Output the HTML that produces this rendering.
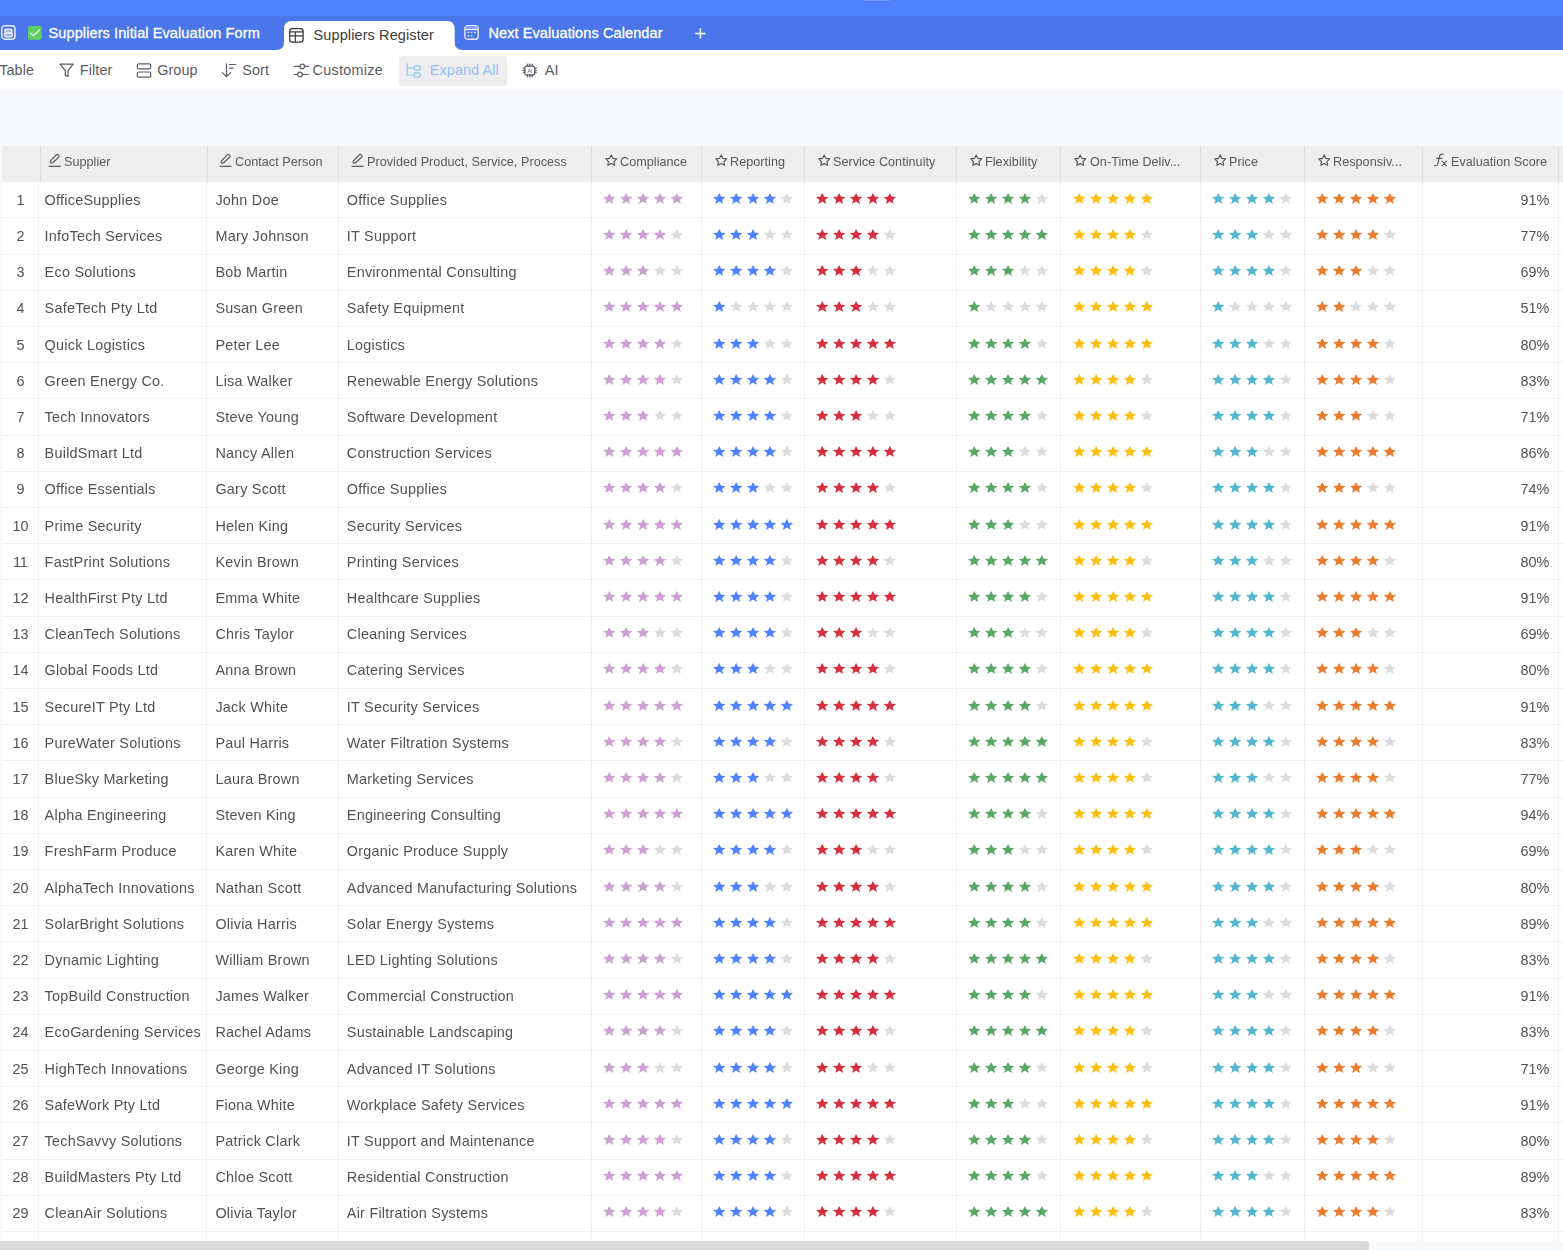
<!DOCTYPE html>
<html lang="en"><head><meta charset="utf-8"><title>Suppliers Register</title>
<style>
html,body{margin:0;padding:0}
body{width:1563px;height:1250px;overflow:hidden;position:relative;background:#f7f8fb;font-family:"Liberation Sans",sans-serif;color:#525252}
.abs,.abs *{position:absolute}
#top{left:0;top:0;width:1563px;height:16px;background:#4f82fc;position:absolute}
#tabs{left:0;top:15.8px;width:1563px;height:34px;background:#4a76e9;position:absolute}
.tabt{position:absolute;color:#fff;font-size:14.5px;letter-spacing:.1px;white-space:nowrap;line-height:18px;-webkit-text-stroke:.3px #fff}
#toolbar{position:absolute;left:0;top:49.7px;width:1563px;height:41.6px;background:#fff;border-bottom:1px solid #ececec}
.tb{position:absolute;font-size:14.4px;letter-spacing:.1px;color:#5b5b5f;white-space:nowrap;line-height:18px;top:61.4px}
#thead{position:absolute;left:2px;top:145.6px;width:1561px;height:36.1px;background:#eeeeee}
.hb{position:absolute;top:145.6px;width:1px;height:36.1px;background:#dedede}
.ht{will-change:transform;position:absolute;top:153.9px;font-size:12.6px;letter-spacing:.05px;color:#595959;white-space:nowrap;line-height:16px}
.hi{position:absolute;overflow:visible}
#tbody{position:absolute;left:2px;top:181.7px;width:1561px;height:1059px;background:#fff}
.vb{position:absolute;top:181.7px;width:1px;height:1059px;background:#f0f0f0}
.rb{position:absolute;left:2px;width:1561px;height:1px;background:#f0f0f0}
.r{will-change:transform;position:absolute;left:0;width:1563px;height:36.2px;font-size:14.4px;letter-spacing:.25px;line-height:18px;white-space:nowrap}
.r span{position:absolute;top:9.3px}
.n{left:2px;width:36.8px;text-align:center;letter-spacing:0}
.c1{left:44.6px}.c2{left:215.4px}.c3{left:346.8px}
.sc{right:13.6px;letter-spacing:0}
.r svg{position:absolute;top:11.3px;overflow:visible}
#sbt{position:absolute;left:0;top:1240.6px;width:1563px;height:10px;background:#f9fafc}
#sb{position:absolute;left:-10px;top:1240.6px;width:1379.2px;height:16px;background:#d9d9d9;border-radius:3.5px}
</style></head><body>

<div id="top"></div><div id="tabs"></div>
<svg class="hi" style="left:275.5px;top:20.9px" width="187" height="29" viewBox="0 0 187 29"><path d="M0 29 Q8 29 8 21 L8 8 Q8 0 16 0 L170.7 0 Q178.7 0 178.7 8 L178.7 21 Q178.7 29 186.7 29 Z" fill="#fff"/></svg>
<svg class="hi" style="left:0;top:24px" width="18" height="18" viewBox="0 0 18 18"><rect x="1.8" y="1.8" width="13.2" height="13.4" rx="3" fill="none" stroke="#e6ebfb" stroke-width="1.5"/><rect x="4.7" y="5.1" width="7.4" height="3.6" rx="1.7" fill="#a9bdf4" stroke="#eef2fd" stroke-width="1.2"/><rect x="4.2" y="8.9" width="8.4" height="3.9" rx="1.8" fill="#a9bdf4" stroke="#eef2fd" stroke-width="1.2"/></svg>
<svg class="hi" style="left:28px;top:25.6px" width="14" height="14" viewBox="0 0 14 14"><rect width="13.9" height="13.8" rx="2" fill="#5dcf62"/><path d="M2.6 7.3 L5.4 9.8 L11.4 4" fill="none" stroke="#e9f9ea" stroke-width="1.5" stroke-linecap="round" stroke-linejoin="round"/></svg>
<div class="tabt" style="left:48.6px;top:23.7px">Suppliers Initial Evaluation Form</div>
<svg class="hi" style="left:289px;top:27.8px" width="15" height="15" viewBox="0 0 15 15"><rect x="0.7" y="0.7" width="13.4" height="13.4" rx="2.6" fill="none" stroke="#3a3a3a" stroke-width="1.25"/><path d="M0.7 3.9 H14.1 M0.7 7.8 H14.1 M6.3 3.9 V14.1" fill="none" stroke="#3a3a3a" stroke-width="1.2"/></svg>
<div class="tabt" style="left:313.6px;top:25.7px;color:#3c3c3c;-webkit-text-stroke:0">Suppliers Register</div>
<svg class="hi" style="left:464px;top:25px" width="15" height="15" viewBox="0 0 15 15"><rect x="0.8" y="0.8" width="13.4" height="13.4" rx="2.8" fill="none" stroke="#e6ebfb" stroke-width="1.4"/><rect x="1.5" y="1.5" width="12" height="2.6" fill="#7f9ff0"/><path d="M0.8 4.5 H14.2" stroke="#e6ebfb" stroke-width="1.3"/><path d="M3.6 7.6 h1.6 M6.8 7.6 h1.6 M10 7.6 h1.6 M3.6 10.7 h1.6 M6.8 10.7 h1.6" stroke="#e6ebfb" stroke-width="1.5"/></svg>
<div class="tabt" style="left:488.4px;top:23.7px">Next Evaluations Calendar</div>
<svg class="hi" style="left:695.4px;top:28px" width="11" height="11" viewBox="0 0 11 11"><path d="M5.4 0.3 V10.5 M0.3 5.4 H10.5" stroke="#fff" stroke-width="1.5"/></svg>
<div style="position:absolute;left:864px;top:0;width:25px;height:1px;background:#86a9fd;opacity:.7"></div>
<div id="toolbar"></div>
<div class="tb" style="left:-0.8px">Table</div>
<svg class="hi" style="left:59px;top:63px" width="16" height="15" viewBox="0 0 16 15"><path d="M1 1.2 H14.2 L9 7.6 V13.4 L6.3 12.4 V7.6 Z" fill="none" stroke="#5b5b66" stroke-width="1.2" stroke-linejoin="round"/></svg>
<div class="tb" style="left:79.8px">Filter</div>
<svg class="hi" style="left:136px;top:63px" width="16" height="16" viewBox="0 0 16 16"><rect x="1.3" y="0.9" width="13.4" height="5" rx="1.6" fill="none" stroke="#5b5b66" stroke-width="1.2"/><rect x="1.3" y="9" width="13.4" height="5.2" rx="1.6" fill="none" stroke="#5b5b66" stroke-width="1.2"/></svg>
<div class="tb" style="left:157.2px">Group</div>
<svg class="hi" style="left:221px;top:63px" width="16" height="15" viewBox="0 0 16 15"><path d="M5.5 0.8 V13.4 M1.4 9.6 L5.5 13.6 L9.6 9.6 M8.4 1.5 H14.6 M8.4 5.2 H12" fill="none" stroke="#5b5b66" stroke-width="1.2" stroke-linecap="round" stroke-linejoin="round"/></svg>
<div class="tb" style="left:242.2px">Sort</div>
<svg class="hi" style="left:293px;top:62px" width="17" height="17" viewBox="0 0 17 17"><path d="M1.2 4.4 H6.9 M11.6 4.4 H15.4 M1.2 12.5 H4.6 M9.4 12.5 H15.4" stroke="#5b5b66" stroke-width="1.2" stroke-linecap="round"/><circle cx="9.3" cy="4.4" r="2.3" fill="none" stroke="#5b5b66" stroke-width="1.2"/><circle cx="7" cy="12.5" r="2.3" fill="none" stroke="#5b5b66" stroke-width="1.2"/></svg>
<div class="tb" style="left:312.6px;letter-spacing:.27px">Customize</div>
<div style="position:absolute;left:399.2px;top:56.4px;width:107.8px;height:29.6px;background:#eeeeee;border-radius:3.5px"></div>
<svg class="hi" style="left:406px;top:62px" width="16" height="17" viewBox="0 0 16 17"><path d="M1.2 1.2 V13 H8 M1.2 6 H8" fill="none" stroke="#93c0fb" stroke-width="1.2"/><rect x="8.2" y="3.8" width="6" height="4.3" rx="1.2" fill="none" stroke="#93c0fb" stroke-width="1.2"/><rect x="8.2" y="10.8" width="6" height="4.4" rx="1.2" fill="none" stroke="#93c0fb" stroke-width="1.2"/></svg>
<div class="tb" style="left:429.8px;color:#93c0fb">Expand All</div>
<svg class="hi" style="left:522px;top:62.6px" width="16" height="16" viewBox="0 0 16 16"><path d="M5.3 0.8 V3 M7.8 0.6 V3 M10.3 0.8 V3 M5.3 12 V14.3 M7.8 12 V14.5 M10.3 12 V14.3 M0.8 5.2 H3 M0.6 7.5 H3 M0.8 9.8 H3 M12.6 5.2 H14.8 M12.6 7.5 H15 M12.6 9.8 H14.8" stroke="#5b5b66" stroke-width="1.1"/><circle cx="7.8" cy="7.5" r="5.6" fill="none" stroke="#5b5b66" stroke-width=".9" opacity=".55"/><rect x="2.9" y="3.1" width="9.8" height="8.8" rx="2" fill="#fff" stroke="#5b5b66" stroke-width="1.2"/><text x="7.8" y="9.6" font-family="Liberation Sans, sans-serif" font-size="5.6" text-anchor="middle" fill="#5b5b66" style="position:static">AI</text></svg>
<div class="tb" style="left:544.8px">AI</div>
<div id="thead"></div>
<div class="hb" style="left:39.7px"></div>
<div class="hb" style="left:206.8px"></div>
<div class="hb" style="left:337.8px"></div>
<div class="hb" style="left:590.9px"></div>
<div class="hb" style="left:700.9px"></div>
<div class="hb" style="left:804.1px"></div>
<div class="hb" style="left:956.1px"></div>
<div class="hb" style="left:1060.2px"></div>
<div class="hb" style="left:1200.0px"></div>
<div class="hb" style="left:1304.0px"></div>
<div class="hb" style="left:1422.0px"></div>
<div class="hb" style="left:1558.0px"></div>
<svg class="hi" style="left:48.4px;top:153px" width="14" height="15" viewBox="0 0 14 15"><path d="M0.6 13.3 H12.6" stroke="#555" stroke-width="1.2"/><path d="M2.3 8.2 L8.4 1.7 Q9.1 1 9.9 1.7 L10.8 2.6 Q11.5 3.4 10.8 4.1 L4.6 9.8 Q3.6 10.4 2.6 9.9 Q1.7 9.2 2.3 8.2 Z" fill="none" stroke="#555" stroke-width="1.2" stroke-linejoin="round"/></svg>
<div class="ht" style="left:64.4px">Supplier</div>
<svg class="hi" style="left:218.7px;top:153px" width="14" height="15" viewBox="0 0 14 15"><path d="M0.6 13.3 H12.6" stroke="#555" stroke-width="1.2"/><path d="M2.3 8.2 L8.4 1.7 Q9.1 1 9.9 1.7 L10.8 2.6 Q11.5 3.4 10.8 4.1 L4.6 9.8 Q3.6 10.4 2.6 9.9 Q1.7 9.2 2.3 8.2 Z" fill="none" stroke="#555" stroke-width="1.2" stroke-linejoin="round"/></svg>
<div class="ht" style="left:235.2px">Contact Person</div>
<svg class="hi" style="left:351.2px;top:153px" width="14" height="15" viewBox="0 0 14 15"><path d="M0.6 13.3 H12.6" stroke="#555" stroke-width="1.2"/><path d="M2.3 8.2 L8.4 1.7 Q9.1 1 9.9 1.7 L10.8 2.6 Q11.5 3.4 10.8 4.1 L4.6 9.8 Q3.6 10.4 2.6 9.9 Q1.7 9.2 2.3 8.2 Z" fill="none" stroke="#555" stroke-width="1.2" stroke-linejoin="round"/></svg>
<div class="ht" style="left:366.8px">Provided Product, Service, Process</div>
<svg class="hi" style="left:604.7px;top:154.1px" width="13.2" height="13.2" viewBox="0 0 14 14"><path d="M6.6 1 L8.3 4.6 L12.4 5.2 L9.5 8 L10.2 12 L6.6 10.1 L3 12 L3.7 8 L0.8 5.2 L4.9 4.6 Z" fill="none" stroke="#555" stroke-width="1.2" stroke-linejoin="round"/></svg>
<div class="ht" style="left:620.2px">Compliance</div>
<svg class="hi" style="left:714.7px;top:154.1px" width="13.2" height="13.2" viewBox="0 0 14 14"><path d="M6.6 1 L8.3 4.6 L12.4 5.2 L9.5 8 L10.2 12 L6.6 10.1 L3 12 L3.7 8 L0.8 5.2 L4.9 4.6 Z" fill="none" stroke="#555" stroke-width="1.2" stroke-linejoin="round"/></svg>
<div class="ht" style="left:730.2px">Reporting</div>
<svg class="hi" style="left:817.9px;top:154.1px" width="13.2" height="13.2" viewBox="0 0 14 14"><path d="M6.6 1 L8.3 4.6 L12.4 5.2 L9.5 8 L10.2 12 L6.6 10.1 L3 12 L3.7 8 L0.8 5.2 L4.9 4.6 Z" fill="none" stroke="#555" stroke-width="1.2" stroke-linejoin="round"/></svg>
<div class="ht" style="left:833.4px">Service Continuity</div>
<svg class="hi" style="left:969.9px;top:154.1px" width="13.2" height="13.2" viewBox="0 0 14 14"><path d="M6.6 1 L8.3 4.6 L12.4 5.2 L9.5 8 L10.2 12 L6.6 10.1 L3 12 L3.7 8 L0.8 5.2 L4.9 4.6 Z" fill="none" stroke="#555" stroke-width="1.2" stroke-linejoin="round"/></svg>
<div class="ht" style="left:985.4px">Flexibility</div>
<svg class="hi" style="left:1074.0px;top:154.1px" width="13.2" height="13.2" viewBox="0 0 14 14"><path d="M6.6 1 L8.3 4.6 L12.4 5.2 L9.5 8 L10.2 12 L6.6 10.1 L3 12 L3.7 8 L0.8 5.2 L4.9 4.6 Z" fill="none" stroke="#555" stroke-width="1.2" stroke-linejoin="round"/></svg>
<div class="ht" style="left:1089.5px">On-Time Deliv...</div>
<svg class="hi" style="left:1213.8px;top:154.1px" width="13.2" height="13.2" viewBox="0 0 14 14"><path d="M6.6 1 L8.3 4.6 L12.4 5.2 L9.5 8 L10.2 12 L6.6 10.1 L3 12 L3.7 8 L0.8 5.2 L4.9 4.6 Z" fill="none" stroke="#555" stroke-width="1.2" stroke-linejoin="round"/></svg>
<div class="ht" style="left:1229.3px">Price</div>
<svg class="hi" style="left:1317.8px;top:154.1px" width="13.2" height="13.2" viewBox="0 0 14 14"><path d="M6.6 1 L8.3 4.6 L12.4 5.2 L9.5 8 L10.2 12 L6.6 10.1 L3 12 L3.7 8 L0.8 5.2 L4.9 4.6 Z" fill="none" stroke="#555" stroke-width="1.2" stroke-linejoin="round"/></svg>
<div class="ht" style="left:1333.3px">Responsiv...</div>
<svg class="hi" style="left:1434.1px;top:153px" width="15" height="15" viewBox="0 0 15 15"><path d="M0.6 12.6 Q3.2 13.4 4 10.2 L5.6 3 Q6.4 0.4 9.4 1.2 M2.6 5.4 H8" fill="none" stroke="#555" stroke-width="1.15" stroke-linecap="round"/><path d="M8.2 8.2 L12.4 12.8 M12.6 8.2 L8 12.8" stroke="#555" stroke-width="1.05" stroke-linecap="round"/></svg>
<div class="ht" style="left:1450.7px">Evaluation Score</div>
<div id="tbody"></div>
<div class="vb" style="left:38.3px"></div>
<div class="vb" style="left:205.7px"></div>
<div class="vb" style="left:337.5px"></div>
<div class="vb" style="left:590.9px"></div>
<div class="vb" style="left:700.9px"></div>
<div class="vb" style="left:804.1px"></div>
<div class="vb" style="left:956.1px"></div>
<div class="vb" style="left:1060.2px"></div>
<div class="vb" style="left:1200.0px"></div>
<div class="vb" style="left:1304.0px"></div>
<div class="vb" style="left:1422.0px"></div>
<div class="vb" style="left:1558.0px"></div>
<div class="rb" style="top:217.3px"></div>
<div class="rb" style="top:253.5px"></div>
<div class="rb" style="top:289.7px"></div>
<div class="rb" style="top:325.9px"></div>
<div class="rb" style="top:362.1px"></div>
<div class="rb" style="top:398.3px"></div>
<div class="rb" style="top:434.5px"></div>
<div class="rb" style="top:470.7px"></div>
<div class="rb" style="top:506.9px"></div>
<div class="rb" style="top:543.1px"></div>
<div class="rb" style="top:579.3px"></div>
<div class="rb" style="top:615.5px"></div>
<div class="rb" style="top:651.7px"></div>
<div class="rb" style="top:687.9px"></div>
<div class="rb" style="top:724.1px"></div>
<div class="rb" style="top:760.3px"></div>
<div class="rb" style="top:796.5px"></div>
<div class="rb" style="top:832.7px"></div>
<div class="rb" style="top:868.9px"></div>
<div class="rb" style="top:905.1px"></div>
<div class="rb" style="top:941.3px"></div>
<div class="rb" style="top:977.5px"></div>
<div class="rb" style="top:1013.7px"></div>
<div class="rb" style="top:1049.9px"></div>
<div class="rb" style="top:1086.1px"></div>
<div class="rb" style="top:1122.3px"></div>
<div class="rb" style="top:1158.5px"></div>
<div class="rb" style="top:1194.7px"></div>
<div class="rb" style="top:1230.9px"></div>
<div class="r" style="top:181.7px"><span class="n">1</span><span class="c1">OfficeSupplies</span><span class="c2">John Doe</span><span class="c3">Office Supplies</span><svg style="left:603.1px" width="82" height="12" viewBox="0 0 82 12"><path fill="#cd9fd4" d="M6.25 0l1.95 3.8 4.3.3-3.4 2.8 1.1 4.1-3.95-2.4-3.95 2.4 1.1-4.1-3.4-2.8 4.3-.3zM23.15 0l1.95 3.8 4.3.3-3.4 2.8 1.1 4.1-3.95-2.4-3.95 2.4 1.1-4.1-3.4-2.8 4.3-.3zM40.05 0l1.95 3.8 4.3.3-3.4 2.8 1.1 4.1-3.95-2.4-3.95 2.4 1.1-4.1-3.4-2.8 4.3-.3zM56.95 0l1.95 3.8 4.3.3-3.4 2.8 1.1 4.1-3.95-2.4-3.95 2.4 1.1-4.1-3.4-2.8 4.3-.3zM73.85 0l1.95 3.8 4.3.3-3.4 2.8 1.1 4.1-3.95-2.4-3.95 2.4 1.1-4.1-3.4-2.8 4.3-.3z"/></svg><svg style="left:713.1px" width="82" height="12" viewBox="0 0 82 12"><path fill="#4f82fc" d="M6.25 0l1.95 3.8 4.3.3-3.4 2.8 1.1 4.1-3.95-2.4-3.95 2.4 1.1-4.1-3.4-2.8 4.3-.3zM23.15 0l1.95 3.8 4.3.3-3.4 2.8 1.1 4.1-3.95-2.4-3.95 2.4 1.1-4.1-3.4-2.8 4.3-.3zM40.05 0l1.95 3.8 4.3.3-3.4 2.8 1.1 4.1-3.95-2.4-3.95 2.4 1.1-4.1-3.4-2.8 4.3-.3zM56.95 0l1.95 3.8 4.3.3-3.4 2.8 1.1 4.1-3.95-2.4-3.95 2.4 1.1-4.1-3.4-2.8 4.3-.3z"/><path fill="#dcdcdc" d="M73.85 0l1.95 3.8 4.3.3-3.4 2.8 1.1 4.1-3.95-2.4-3.95 2.4 1.1-4.1-3.4-2.8 4.3-.3z"/></svg><svg style="left:816.4px" width="82" height="12" viewBox="0 0 82 12"><path fill="#d53041" d="M6.25 0l1.95 3.8 4.3.3-3.4 2.8 1.1 4.1-3.95-2.4-3.95 2.4 1.1-4.1-3.4-2.8 4.3-.3zM23.15 0l1.95 3.8 4.3.3-3.4 2.8 1.1 4.1-3.95-2.4-3.95 2.4 1.1-4.1-3.4-2.8 4.3-.3zM40.05 0l1.95 3.8 4.3.3-3.4 2.8 1.1 4.1-3.95-2.4-3.95 2.4 1.1-4.1-3.4-2.8 4.3-.3zM56.95 0l1.95 3.8 4.3.3-3.4 2.8 1.1 4.1-3.95-2.4-3.95 2.4 1.1-4.1-3.4-2.8 4.3-.3zM73.85 0l1.95 3.8 4.3.3-3.4 2.8 1.1 4.1-3.95-2.4-3.95 2.4 1.1-4.1-3.4-2.8 4.3-.3z"/></svg><svg style="left:968.4px" width="82" height="12" viewBox="0 0 82 12"><path fill="#59a765" d="M6.25 0l1.95 3.8 4.3.3-3.4 2.8 1.1 4.1-3.95-2.4-3.95 2.4 1.1-4.1-3.4-2.8 4.3-.3zM23.15 0l1.95 3.8 4.3.3-3.4 2.8 1.1 4.1-3.95-2.4-3.95 2.4 1.1-4.1-3.4-2.8 4.3-.3zM40.05 0l1.95 3.8 4.3.3-3.4 2.8 1.1 4.1-3.95-2.4-3.95 2.4 1.1-4.1-3.4-2.8 4.3-.3zM56.95 0l1.95 3.8 4.3.3-3.4 2.8 1.1 4.1-3.95-2.4-3.95 2.4 1.1-4.1-3.4-2.8 4.3-.3z"/><path fill="#dcdcdc" d="M73.85 0l1.95 3.8 4.3.3-3.4 2.8 1.1 4.1-3.95-2.4-3.95 2.4 1.1-4.1-3.4-2.8 4.3-.3z"/></svg><svg style="left:1072.5px" width="82" height="12" viewBox="0 0 82 12"><path fill="#fbbf12" d="M6.25 0l1.95 3.8 4.3.3-3.4 2.8 1.1 4.1-3.95-2.4-3.95 2.4 1.1-4.1-3.4-2.8 4.3-.3zM23.15 0l1.95 3.8 4.3.3-3.4 2.8 1.1 4.1-3.95-2.4-3.95 2.4 1.1-4.1-3.4-2.8 4.3-.3zM40.05 0l1.95 3.8 4.3.3-3.4 2.8 1.1 4.1-3.95-2.4-3.95 2.4 1.1-4.1-3.4-2.8 4.3-.3zM56.95 0l1.95 3.8 4.3.3-3.4 2.8 1.1 4.1-3.95-2.4-3.95 2.4 1.1-4.1-3.4-2.8 4.3-.3zM73.85 0l1.95 3.8 4.3.3-3.4 2.8 1.1 4.1-3.95-2.4-3.95 2.4 1.1-4.1-3.4-2.8 4.3-.3z"/></svg><svg style="left:1211.5px" width="82" height="12" viewBox="0 0 82 12"><path fill="#53b7cf" d="M6.25 0l1.95 3.8 4.3.3-3.4 2.8 1.1 4.1-3.95-2.4-3.95 2.4 1.1-4.1-3.4-2.8 4.3-.3zM23.15 0l1.95 3.8 4.3.3-3.4 2.8 1.1 4.1-3.95-2.4-3.95 2.4 1.1-4.1-3.4-2.8 4.3-.3zM40.05 0l1.95 3.8 4.3.3-3.4 2.8 1.1 4.1-3.95-2.4-3.95 2.4 1.1-4.1-3.4-2.8 4.3-.3zM56.95 0l1.95 3.8 4.3.3-3.4 2.8 1.1 4.1-3.95-2.4-3.95 2.4 1.1-4.1-3.4-2.8 4.3-.3z"/><path fill="#dcdcdc" d="M73.85 0l1.95 3.8 4.3.3-3.4 2.8 1.1 4.1-3.95-2.4-3.95 2.4 1.1-4.1-3.4-2.8 4.3-.3z"/></svg><svg style="left:1316.2px" width="82" height="12" viewBox="0 0 82 12"><path fill="#ea7c30" d="M6.25 0l1.95 3.8 4.3.3-3.4 2.8 1.1 4.1-3.95-2.4-3.95 2.4 1.1-4.1-3.4-2.8 4.3-.3zM23.15 0l1.95 3.8 4.3.3-3.4 2.8 1.1 4.1-3.95-2.4-3.95 2.4 1.1-4.1-3.4-2.8 4.3-.3zM40.05 0l1.95 3.8 4.3.3-3.4 2.8 1.1 4.1-3.95-2.4-3.95 2.4 1.1-4.1-3.4-2.8 4.3-.3zM56.95 0l1.95 3.8 4.3.3-3.4 2.8 1.1 4.1-3.95-2.4-3.95 2.4 1.1-4.1-3.4-2.8 4.3-.3zM73.85 0l1.95 3.8 4.3.3-3.4 2.8 1.1 4.1-3.95-2.4-3.95 2.4 1.1-4.1-3.4-2.8 4.3-.3z"/></svg><span class="sc" style="right:13.8px">91%</span></div>
<div class="r" style="top:217.9px"><span class="n">2</span><span class="c1">InfoTech Services</span><span class="c2">Mary Johnson</span><span class="c3">IT Support</span><svg style="left:603.1px" width="82" height="12" viewBox="0 0 82 12"><path fill="#cd9fd4" d="M6.25 0l1.95 3.8 4.3.3-3.4 2.8 1.1 4.1-3.95-2.4-3.95 2.4 1.1-4.1-3.4-2.8 4.3-.3zM23.15 0l1.95 3.8 4.3.3-3.4 2.8 1.1 4.1-3.95-2.4-3.95 2.4 1.1-4.1-3.4-2.8 4.3-.3zM40.05 0l1.95 3.8 4.3.3-3.4 2.8 1.1 4.1-3.95-2.4-3.95 2.4 1.1-4.1-3.4-2.8 4.3-.3zM56.95 0l1.95 3.8 4.3.3-3.4 2.8 1.1 4.1-3.95-2.4-3.95 2.4 1.1-4.1-3.4-2.8 4.3-.3z"/><path fill="#dcdcdc" d="M73.85 0l1.95 3.8 4.3.3-3.4 2.8 1.1 4.1-3.95-2.4-3.95 2.4 1.1-4.1-3.4-2.8 4.3-.3z"/></svg><svg style="left:713.1px" width="82" height="12" viewBox="0 0 82 12"><path fill="#4f82fc" d="M6.25 0l1.95 3.8 4.3.3-3.4 2.8 1.1 4.1-3.95-2.4-3.95 2.4 1.1-4.1-3.4-2.8 4.3-.3zM23.15 0l1.95 3.8 4.3.3-3.4 2.8 1.1 4.1-3.95-2.4-3.95 2.4 1.1-4.1-3.4-2.8 4.3-.3zM40.05 0l1.95 3.8 4.3.3-3.4 2.8 1.1 4.1-3.95-2.4-3.95 2.4 1.1-4.1-3.4-2.8 4.3-.3z"/><path fill="#dcdcdc" d="M56.95 0l1.95 3.8 4.3.3-3.4 2.8 1.1 4.1-3.95-2.4-3.95 2.4 1.1-4.1-3.4-2.8 4.3-.3zM73.85 0l1.95 3.8 4.3.3-3.4 2.8 1.1 4.1-3.95-2.4-3.95 2.4 1.1-4.1-3.4-2.8 4.3-.3z"/></svg><svg style="left:816.4px" width="82" height="12" viewBox="0 0 82 12"><path fill="#d53041" d="M6.25 0l1.95 3.8 4.3.3-3.4 2.8 1.1 4.1-3.95-2.4-3.95 2.4 1.1-4.1-3.4-2.8 4.3-.3zM23.15 0l1.95 3.8 4.3.3-3.4 2.8 1.1 4.1-3.95-2.4-3.95 2.4 1.1-4.1-3.4-2.8 4.3-.3zM40.05 0l1.95 3.8 4.3.3-3.4 2.8 1.1 4.1-3.95-2.4-3.95 2.4 1.1-4.1-3.4-2.8 4.3-.3zM56.95 0l1.95 3.8 4.3.3-3.4 2.8 1.1 4.1-3.95-2.4-3.95 2.4 1.1-4.1-3.4-2.8 4.3-.3z"/><path fill="#dcdcdc" d="M73.85 0l1.95 3.8 4.3.3-3.4 2.8 1.1 4.1-3.95-2.4-3.95 2.4 1.1-4.1-3.4-2.8 4.3-.3z"/></svg><svg style="left:968.4px" width="82" height="12" viewBox="0 0 82 12"><path fill="#59a765" d="M6.25 0l1.95 3.8 4.3.3-3.4 2.8 1.1 4.1-3.95-2.4-3.95 2.4 1.1-4.1-3.4-2.8 4.3-.3zM23.15 0l1.95 3.8 4.3.3-3.4 2.8 1.1 4.1-3.95-2.4-3.95 2.4 1.1-4.1-3.4-2.8 4.3-.3zM40.05 0l1.95 3.8 4.3.3-3.4 2.8 1.1 4.1-3.95-2.4-3.95 2.4 1.1-4.1-3.4-2.8 4.3-.3zM56.95 0l1.95 3.8 4.3.3-3.4 2.8 1.1 4.1-3.95-2.4-3.95 2.4 1.1-4.1-3.4-2.8 4.3-.3zM73.85 0l1.95 3.8 4.3.3-3.4 2.8 1.1 4.1-3.95-2.4-3.95 2.4 1.1-4.1-3.4-2.8 4.3-.3z"/></svg><svg style="left:1072.5px" width="82" height="12" viewBox="0 0 82 12"><path fill="#fbbf12" d="M6.25 0l1.95 3.8 4.3.3-3.4 2.8 1.1 4.1-3.95-2.4-3.95 2.4 1.1-4.1-3.4-2.8 4.3-.3zM23.15 0l1.95 3.8 4.3.3-3.4 2.8 1.1 4.1-3.95-2.4-3.95 2.4 1.1-4.1-3.4-2.8 4.3-.3zM40.05 0l1.95 3.8 4.3.3-3.4 2.8 1.1 4.1-3.95-2.4-3.95 2.4 1.1-4.1-3.4-2.8 4.3-.3zM56.95 0l1.95 3.8 4.3.3-3.4 2.8 1.1 4.1-3.95-2.4-3.95 2.4 1.1-4.1-3.4-2.8 4.3-.3z"/><path fill="#dcdcdc" d="M73.85 0l1.95 3.8 4.3.3-3.4 2.8 1.1 4.1-3.95-2.4-3.95 2.4 1.1-4.1-3.4-2.8 4.3-.3z"/></svg><svg style="left:1211.5px" width="82" height="12" viewBox="0 0 82 12"><path fill="#53b7cf" d="M6.25 0l1.95 3.8 4.3.3-3.4 2.8 1.1 4.1-3.95-2.4-3.95 2.4 1.1-4.1-3.4-2.8 4.3-.3zM23.15 0l1.95 3.8 4.3.3-3.4 2.8 1.1 4.1-3.95-2.4-3.95 2.4 1.1-4.1-3.4-2.8 4.3-.3zM40.05 0l1.95 3.8 4.3.3-3.4 2.8 1.1 4.1-3.95-2.4-3.95 2.4 1.1-4.1-3.4-2.8 4.3-.3z"/><path fill="#dcdcdc" d="M56.95 0l1.95 3.8 4.3.3-3.4 2.8 1.1 4.1-3.95-2.4-3.95 2.4 1.1-4.1-3.4-2.8 4.3-.3zM73.85 0l1.95 3.8 4.3.3-3.4 2.8 1.1 4.1-3.95-2.4-3.95 2.4 1.1-4.1-3.4-2.8 4.3-.3z"/></svg><svg style="left:1316.2px" width="82" height="12" viewBox="0 0 82 12"><path fill="#ea7c30" d="M6.25 0l1.95 3.8 4.3.3-3.4 2.8 1.1 4.1-3.95-2.4-3.95 2.4 1.1-4.1-3.4-2.8 4.3-.3zM23.15 0l1.95 3.8 4.3.3-3.4 2.8 1.1 4.1-3.95-2.4-3.95 2.4 1.1-4.1-3.4-2.8 4.3-.3zM40.05 0l1.95 3.8 4.3.3-3.4 2.8 1.1 4.1-3.95-2.4-3.95 2.4 1.1-4.1-3.4-2.8 4.3-.3zM56.95 0l1.95 3.8 4.3.3-3.4 2.8 1.1 4.1-3.95-2.4-3.95 2.4 1.1-4.1-3.4-2.8 4.3-.3z"/><path fill="#dcdcdc" d="M73.85 0l1.95 3.8 4.3.3-3.4 2.8 1.1 4.1-3.95-2.4-3.95 2.4 1.1-4.1-3.4-2.8 4.3-.3z"/></svg><span class="sc" style="right:13.8px">77%</span></div>
<div class="r" style="top:254.1px"><span class="n">3</span><span class="c1">Eco Solutions</span><span class="c2">Bob Martin</span><span class="c3">Environmental Consulting</span><svg style="left:603.1px" width="82" height="12" viewBox="0 0 82 12"><path fill="#cd9fd4" d="M6.25 0l1.95 3.8 4.3.3-3.4 2.8 1.1 4.1-3.95-2.4-3.95 2.4 1.1-4.1-3.4-2.8 4.3-.3zM23.15 0l1.95 3.8 4.3.3-3.4 2.8 1.1 4.1-3.95-2.4-3.95 2.4 1.1-4.1-3.4-2.8 4.3-.3zM40.05 0l1.95 3.8 4.3.3-3.4 2.8 1.1 4.1-3.95-2.4-3.95 2.4 1.1-4.1-3.4-2.8 4.3-.3z"/><path fill="#dcdcdc" d="M56.95 0l1.95 3.8 4.3.3-3.4 2.8 1.1 4.1-3.95-2.4-3.95 2.4 1.1-4.1-3.4-2.8 4.3-.3zM73.85 0l1.95 3.8 4.3.3-3.4 2.8 1.1 4.1-3.95-2.4-3.95 2.4 1.1-4.1-3.4-2.8 4.3-.3z"/></svg><svg style="left:713.1px" width="82" height="12" viewBox="0 0 82 12"><path fill="#4f82fc" d="M6.25 0l1.95 3.8 4.3.3-3.4 2.8 1.1 4.1-3.95-2.4-3.95 2.4 1.1-4.1-3.4-2.8 4.3-.3zM23.15 0l1.95 3.8 4.3.3-3.4 2.8 1.1 4.1-3.95-2.4-3.95 2.4 1.1-4.1-3.4-2.8 4.3-.3zM40.05 0l1.95 3.8 4.3.3-3.4 2.8 1.1 4.1-3.95-2.4-3.95 2.4 1.1-4.1-3.4-2.8 4.3-.3zM56.95 0l1.95 3.8 4.3.3-3.4 2.8 1.1 4.1-3.95-2.4-3.95 2.4 1.1-4.1-3.4-2.8 4.3-.3z"/><path fill="#dcdcdc" d="M73.85 0l1.95 3.8 4.3.3-3.4 2.8 1.1 4.1-3.95-2.4-3.95 2.4 1.1-4.1-3.4-2.8 4.3-.3z"/></svg><svg style="left:816.4px" width="82" height="12" viewBox="0 0 82 12"><path fill="#d53041" d="M6.25 0l1.95 3.8 4.3.3-3.4 2.8 1.1 4.1-3.95-2.4-3.95 2.4 1.1-4.1-3.4-2.8 4.3-.3zM23.15 0l1.95 3.8 4.3.3-3.4 2.8 1.1 4.1-3.95-2.4-3.95 2.4 1.1-4.1-3.4-2.8 4.3-.3zM40.05 0l1.95 3.8 4.3.3-3.4 2.8 1.1 4.1-3.95-2.4-3.95 2.4 1.1-4.1-3.4-2.8 4.3-.3z"/><path fill="#dcdcdc" d="M56.95 0l1.95 3.8 4.3.3-3.4 2.8 1.1 4.1-3.95-2.4-3.95 2.4 1.1-4.1-3.4-2.8 4.3-.3zM73.85 0l1.95 3.8 4.3.3-3.4 2.8 1.1 4.1-3.95-2.4-3.95 2.4 1.1-4.1-3.4-2.8 4.3-.3z"/></svg><svg style="left:968.4px" width="82" height="12" viewBox="0 0 82 12"><path fill="#59a765" d="M6.25 0l1.95 3.8 4.3.3-3.4 2.8 1.1 4.1-3.95-2.4-3.95 2.4 1.1-4.1-3.4-2.8 4.3-.3zM23.15 0l1.95 3.8 4.3.3-3.4 2.8 1.1 4.1-3.95-2.4-3.95 2.4 1.1-4.1-3.4-2.8 4.3-.3zM40.05 0l1.95 3.8 4.3.3-3.4 2.8 1.1 4.1-3.95-2.4-3.95 2.4 1.1-4.1-3.4-2.8 4.3-.3z"/><path fill="#dcdcdc" d="M56.95 0l1.95 3.8 4.3.3-3.4 2.8 1.1 4.1-3.95-2.4-3.95 2.4 1.1-4.1-3.4-2.8 4.3-.3zM73.85 0l1.95 3.8 4.3.3-3.4 2.8 1.1 4.1-3.95-2.4-3.95 2.4 1.1-4.1-3.4-2.8 4.3-.3z"/></svg><svg style="left:1072.5px" width="82" height="12" viewBox="0 0 82 12"><path fill="#fbbf12" d="M6.25 0l1.95 3.8 4.3.3-3.4 2.8 1.1 4.1-3.95-2.4-3.95 2.4 1.1-4.1-3.4-2.8 4.3-.3zM23.15 0l1.95 3.8 4.3.3-3.4 2.8 1.1 4.1-3.95-2.4-3.95 2.4 1.1-4.1-3.4-2.8 4.3-.3zM40.05 0l1.95 3.8 4.3.3-3.4 2.8 1.1 4.1-3.95-2.4-3.95 2.4 1.1-4.1-3.4-2.8 4.3-.3zM56.95 0l1.95 3.8 4.3.3-3.4 2.8 1.1 4.1-3.95-2.4-3.95 2.4 1.1-4.1-3.4-2.8 4.3-.3z"/><path fill="#dcdcdc" d="M73.85 0l1.95 3.8 4.3.3-3.4 2.8 1.1 4.1-3.95-2.4-3.95 2.4 1.1-4.1-3.4-2.8 4.3-.3z"/></svg><svg style="left:1211.5px" width="82" height="12" viewBox="0 0 82 12"><path fill="#53b7cf" d="M6.25 0l1.95 3.8 4.3.3-3.4 2.8 1.1 4.1-3.95-2.4-3.95 2.4 1.1-4.1-3.4-2.8 4.3-.3zM23.15 0l1.95 3.8 4.3.3-3.4 2.8 1.1 4.1-3.95-2.4-3.95 2.4 1.1-4.1-3.4-2.8 4.3-.3zM40.05 0l1.95 3.8 4.3.3-3.4 2.8 1.1 4.1-3.95-2.4-3.95 2.4 1.1-4.1-3.4-2.8 4.3-.3zM56.95 0l1.95 3.8 4.3.3-3.4 2.8 1.1 4.1-3.95-2.4-3.95 2.4 1.1-4.1-3.4-2.8 4.3-.3z"/><path fill="#dcdcdc" d="M73.85 0l1.95 3.8 4.3.3-3.4 2.8 1.1 4.1-3.95-2.4-3.95 2.4 1.1-4.1-3.4-2.8 4.3-.3z"/></svg><svg style="left:1316.2px" width="82" height="12" viewBox="0 0 82 12"><path fill="#ea7c30" d="M6.25 0l1.95 3.8 4.3.3-3.4 2.8 1.1 4.1-3.95-2.4-3.95 2.4 1.1-4.1-3.4-2.8 4.3-.3zM23.15 0l1.95 3.8 4.3.3-3.4 2.8 1.1 4.1-3.95-2.4-3.95 2.4 1.1-4.1-3.4-2.8 4.3-.3zM40.05 0l1.95 3.8 4.3.3-3.4 2.8 1.1 4.1-3.95-2.4-3.95 2.4 1.1-4.1-3.4-2.8 4.3-.3z"/><path fill="#dcdcdc" d="M56.95 0l1.95 3.8 4.3.3-3.4 2.8 1.1 4.1-3.95-2.4-3.95 2.4 1.1-4.1-3.4-2.8 4.3-.3zM73.85 0l1.95 3.8 4.3.3-3.4 2.8 1.1 4.1-3.95-2.4-3.95 2.4 1.1-4.1-3.4-2.8 4.3-.3z"/></svg><span class="sc" style="right:13.8px">69%</span></div>
<div class="r" style="top:290.3px"><span class="n">4</span><span class="c1">SafeTech Pty Ltd</span><span class="c2">Susan Green</span><span class="c3">Safety Equipment</span><svg style="left:603.1px" width="82" height="12" viewBox="0 0 82 12"><path fill="#cd9fd4" d="M6.25 0l1.95 3.8 4.3.3-3.4 2.8 1.1 4.1-3.95-2.4-3.95 2.4 1.1-4.1-3.4-2.8 4.3-.3zM23.15 0l1.95 3.8 4.3.3-3.4 2.8 1.1 4.1-3.95-2.4-3.95 2.4 1.1-4.1-3.4-2.8 4.3-.3zM40.05 0l1.95 3.8 4.3.3-3.4 2.8 1.1 4.1-3.95-2.4-3.95 2.4 1.1-4.1-3.4-2.8 4.3-.3zM56.95 0l1.95 3.8 4.3.3-3.4 2.8 1.1 4.1-3.95-2.4-3.95 2.4 1.1-4.1-3.4-2.8 4.3-.3zM73.85 0l1.95 3.8 4.3.3-3.4 2.8 1.1 4.1-3.95-2.4-3.95 2.4 1.1-4.1-3.4-2.8 4.3-.3z"/></svg><svg style="left:713.1px" width="82" height="12" viewBox="0 0 82 12"><path fill="#4f82fc" d="M6.25 0l1.95 3.8 4.3.3-3.4 2.8 1.1 4.1-3.95-2.4-3.95 2.4 1.1-4.1-3.4-2.8 4.3-.3z"/><path fill="#dcdcdc" d="M23.15 0l1.95 3.8 4.3.3-3.4 2.8 1.1 4.1-3.95-2.4-3.95 2.4 1.1-4.1-3.4-2.8 4.3-.3zM40.05 0l1.95 3.8 4.3.3-3.4 2.8 1.1 4.1-3.95-2.4-3.95 2.4 1.1-4.1-3.4-2.8 4.3-.3zM56.95 0l1.95 3.8 4.3.3-3.4 2.8 1.1 4.1-3.95-2.4-3.95 2.4 1.1-4.1-3.4-2.8 4.3-.3zM73.85 0l1.95 3.8 4.3.3-3.4 2.8 1.1 4.1-3.95-2.4-3.95 2.4 1.1-4.1-3.4-2.8 4.3-.3z"/></svg><svg style="left:816.4px" width="82" height="12" viewBox="0 0 82 12"><path fill="#d53041" d="M6.25 0l1.95 3.8 4.3.3-3.4 2.8 1.1 4.1-3.95-2.4-3.95 2.4 1.1-4.1-3.4-2.8 4.3-.3zM23.15 0l1.95 3.8 4.3.3-3.4 2.8 1.1 4.1-3.95-2.4-3.95 2.4 1.1-4.1-3.4-2.8 4.3-.3zM40.05 0l1.95 3.8 4.3.3-3.4 2.8 1.1 4.1-3.95-2.4-3.95 2.4 1.1-4.1-3.4-2.8 4.3-.3z"/><path fill="#dcdcdc" d="M56.95 0l1.95 3.8 4.3.3-3.4 2.8 1.1 4.1-3.95-2.4-3.95 2.4 1.1-4.1-3.4-2.8 4.3-.3zM73.85 0l1.95 3.8 4.3.3-3.4 2.8 1.1 4.1-3.95-2.4-3.95 2.4 1.1-4.1-3.4-2.8 4.3-.3z"/></svg><svg style="left:968.4px" width="82" height="12" viewBox="0 0 82 12"><path fill="#59a765" d="M6.25 0l1.95 3.8 4.3.3-3.4 2.8 1.1 4.1-3.95-2.4-3.95 2.4 1.1-4.1-3.4-2.8 4.3-.3z"/><path fill="#dcdcdc" d="M23.15 0l1.95 3.8 4.3.3-3.4 2.8 1.1 4.1-3.95-2.4-3.95 2.4 1.1-4.1-3.4-2.8 4.3-.3zM40.05 0l1.95 3.8 4.3.3-3.4 2.8 1.1 4.1-3.95-2.4-3.95 2.4 1.1-4.1-3.4-2.8 4.3-.3zM56.95 0l1.95 3.8 4.3.3-3.4 2.8 1.1 4.1-3.95-2.4-3.95 2.4 1.1-4.1-3.4-2.8 4.3-.3zM73.85 0l1.95 3.8 4.3.3-3.4 2.8 1.1 4.1-3.95-2.4-3.95 2.4 1.1-4.1-3.4-2.8 4.3-.3z"/></svg><svg style="left:1072.5px" width="82" height="12" viewBox="0 0 82 12"><path fill="#fbbf12" d="M6.25 0l1.95 3.8 4.3.3-3.4 2.8 1.1 4.1-3.95-2.4-3.95 2.4 1.1-4.1-3.4-2.8 4.3-.3zM23.15 0l1.95 3.8 4.3.3-3.4 2.8 1.1 4.1-3.95-2.4-3.95 2.4 1.1-4.1-3.4-2.8 4.3-.3zM40.05 0l1.95 3.8 4.3.3-3.4 2.8 1.1 4.1-3.95-2.4-3.95 2.4 1.1-4.1-3.4-2.8 4.3-.3zM56.95 0l1.95 3.8 4.3.3-3.4 2.8 1.1 4.1-3.95-2.4-3.95 2.4 1.1-4.1-3.4-2.8 4.3-.3zM73.85 0l1.95 3.8 4.3.3-3.4 2.8 1.1 4.1-3.95-2.4-3.95 2.4 1.1-4.1-3.4-2.8 4.3-.3z"/></svg><svg style="left:1211.5px" width="82" height="12" viewBox="0 0 82 12"><path fill="#53b7cf" d="M6.25 0l1.95 3.8 4.3.3-3.4 2.8 1.1 4.1-3.95-2.4-3.95 2.4 1.1-4.1-3.4-2.8 4.3-.3z"/><path fill="#dcdcdc" d="M23.15 0l1.95 3.8 4.3.3-3.4 2.8 1.1 4.1-3.95-2.4-3.95 2.4 1.1-4.1-3.4-2.8 4.3-.3zM40.05 0l1.95 3.8 4.3.3-3.4 2.8 1.1 4.1-3.95-2.4-3.95 2.4 1.1-4.1-3.4-2.8 4.3-.3zM56.95 0l1.95 3.8 4.3.3-3.4 2.8 1.1 4.1-3.95-2.4-3.95 2.4 1.1-4.1-3.4-2.8 4.3-.3zM73.85 0l1.95 3.8 4.3.3-3.4 2.8 1.1 4.1-3.95-2.4-3.95 2.4 1.1-4.1-3.4-2.8 4.3-.3z"/></svg><svg style="left:1316.2px" width="82" height="12" viewBox="0 0 82 12"><path fill="#ea7c30" d="M6.25 0l1.95 3.8 4.3.3-3.4 2.8 1.1 4.1-3.95-2.4-3.95 2.4 1.1-4.1-3.4-2.8 4.3-.3zM23.15 0l1.95 3.8 4.3.3-3.4 2.8 1.1 4.1-3.95-2.4-3.95 2.4 1.1-4.1-3.4-2.8 4.3-.3z"/><path fill="#dcdcdc" d="M40.05 0l1.95 3.8 4.3.3-3.4 2.8 1.1 4.1-3.95-2.4-3.95 2.4 1.1-4.1-3.4-2.8 4.3-.3zM56.95 0l1.95 3.8 4.3.3-3.4 2.8 1.1 4.1-3.95-2.4-3.95 2.4 1.1-4.1-3.4-2.8 4.3-.3zM73.85 0l1.95 3.8 4.3.3-3.4 2.8 1.1 4.1-3.95-2.4-3.95 2.4 1.1-4.1-3.4-2.8 4.3-.3z"/></svg><span class="sc" style="right:13.8px">51%</span></div>
<div class="r" style="top:326.5px"><span class="n">5</span><span class="c1">Quick Logistics</span><span class="c2">Peter Lee</span><span class="c3">Logistics</span><svg style="left:603.1px" width="82" height="12" viewBox="0 0 82 12"><path fill="#cd9fd4" d="M6.25 0l1.95 3.8 4.3.3-3.4 2.8 1.1 4.1-3.95-2.4-3.95 2.4 1.1-4.1-3.4-2.8 4.3-.3zM23.15 0l1.95 3.8 4.3.3-3.4 2.8 1.1 4.1-3.95-2.4-3.95 2.4 1.1-4.1-3.4-2.8 4.3-.3zM40.05 0l1.95 3.8 4.3.3-3.4 2.8 1.1 4.1-3.95-2.4-3.95 2.4 1.1-4.1-3.4-2.8 4.3-.3zM56.95 0l1.95 3.8 4.3.3-3.4 2.8 1.1 4.1-3.95-2.4-3.95 2.4 1.1-4.1-3.4-2.8 4.3-.3z"/><path fill="#dcdcdc" d="M73.85 0l1.95 3.8 4.3.3-3.4 2.8 1.1 4.1-3.95-2.4-3.95 2.4 1.1-4.1-3.4-2.8 4.3-.3z"/></svg><svg style="left:713.1px" width="82" height="12" viewBox="0 0 82 12"><path fill="#4f82fc" d="M6.25 0l1.95 3.8 4.3.3-3.4 2.8 1.1 4.1-3.95-2.4-3.95 2.4 1.1-4.1-3.4-2.8 4.3-.3zM23.15 0l1.95 3.8 4.3.3-3.4 2.8 1.1 4.1-3.95-2.4-3.95 2.4 1.1-4.1-3.4-2.8 4.3-.3zM40.05 0l1.95 3.8 4.3.3-3.4 2.8 1.1 4.1-3.95-2.4-3.95 2.4 1.1-4.1-3.4-2.8 4.3-.3z"/><path fill="#dcdcdc" d="M56.95 0l1.95 3.8 4.3.3-3.4 2.8 1.1 4.1-3.95-2.4-3.95 2.4 1.1-4.1-3.4-2.8 4.3-.3zM73.85 0l1.95 3.8 4.3.3-3.4 2.8 1.1 4.1-3.95-2.4-3.95 2.4 1.1-4.1-3.4-2.8 4.3-.3z"/></svg><svg style="left:816.4px" width="82" height="12" viewBox="0 0 82 12"><path fill="#d53041" d="M6.25 0l1.95 3.8 4.3.3-3.4 2.8 1.1 4.1-3.95-2.4-3.95 2.4 1.1-4.1-3.4-2.8 4.3-.3zM23.15 0l1.95 3.8 4.3.3-3.4 2.8 1.1 4.1-3.95-2.4-3.95 2.4 1.1-4.1-3.4-2.8 4.3-.3zM40.05 0l1.95 3.8 4.3.3-3.4 2.8 1.1 4.1-3.95-2.4-3.95 2.4 1.1-4.1-3.4-2.8 4.3-.3zM56.95 0l1.95 3.8 4.3.3-3.4 2.8 1.1 4.1-3.95-2.4-3.95 2.4 1.1-4.1-3.4-2.8 4.3-.3zM73.85 0l1.95 3.8 4.3.3-3.4 2.8 1.1 4.1-3.95-2.4-3.95 2.4 1.1-4.1-3.4-2.8 4.3-.3z"/></svg><svg style="left:968.4px" width="82" height="12" viewBox="0 0 82 12"><path fill="#59a765" d="M6.25 0l1.95 3.8 4.3.3-3.4 2.8 1.1 4.1-3.95-2.4-3.95 2.4 1.1-4.1-3.4-2.8 4.3-.3zM23.15 0l1.95 3.8 4.3.3-3.4 2.8 1.1 4.1-3.95-2.4-3.95 2.4 1.1-4.1-3.4-2.8 4.3-.3zM40.05 0l1.95 3.8 4.3.3-3.4 2.8 1.1 4.1-3.95-2.4-3.95 2.4 1.1-4.1-3.4-2.8 4.3-.3zM56.95 0l1.95 3.8 4.3.3-3.4 2.8 1.1 4.1-3.95-2.4-3.95 2.4 1.1-4.1-3.4-2.8 4.3-.3z"/><path fill="#dcdcdc" d="M73.85 0l1.95 3.8 4.3.3-3.4 2.8 1.1 4.1-3.95-2.4-3.95 2.4 1.1-4.1-3.4-2.8 4.3-.3z"/></svg><svg style="left:1072.5px" width="82" height="12" viewBox="0 0 82 12"><path fill="#fbbf12" d="M6.25 0l1.95 3.8 4.3.3-3.4 2.8 1.1 4.1-3.95-2.4-3.95 2.4 1.1-4.1-3.4-2.8 4.3-.3zM23.15 0l1.95 3.8 4.3.3-3.4 2.8 1.1 4.1-3.95-2.4-3.95 2.4 1.1-4.1-3.4-2.8 4.3-.3zM40.05 0l1.95 3.8 4.3.3-3.4 2.8 1.1 4.1-3.95-2.4-3.95 2.4 1.1-4.1-3.4-2.8 4.3-.3zM56.95 0l1.95 3.8 4.3.3-3.4 2.8 1.1 4.1-3.95-2.4-3.95 2.4 1.1-4.1-3.4-2.8 4.3-.3zM73.85 0l1.95 3.8 4.3.3-3.4 2.8 1.1 4.1-3.95-2.4-3.95 2.4 1.1-4.1-3.4-2.8 4.3-.3z"/></svg><svg style="left:1211.5px" width="82" height="12" viewBox="0 0 82 12"><path fill="#53b7cf" d="M6.25 0l1.95 3.8 4.3.3-3.4 2.8 1.1 4.1-3.95-2.4-3.95 2.4 1.1-4.1-3.4-2.8 4.3-.3zM23.15 0l1.95 3.8 4.3.3-3.4 2.8 1.1 4.1-3.95-2.4-3.95 2.4 1.1-4.1-3.4-2.8 4.3-.3zM40.05 0l1.95 3.8 4.3.3-3.4 2.8 1.1 4.1-3.95-2.4-3.95 2.4 1.1-4.1-3.4-2.8 4.3-.3z"/><path fill="#dcdcdc" d="M56.95 0l1.95 3.8 4.3.3-3.4 2.8 1.1 4.1-3.95-2.4-3.95 2.4 1.1-4.1-3.4-2.8 4.3-.3zM73.85 0l1.95 3.8 4.3.3-3.4 2.8 1.1 4.1-3.95-2.4-3.95 2.4 1.1-4.1-3.4-2.8 4.3-.3z"/></svg><svg style="left:1316.2px" width="82" height="12" viewBox="0 0 82 12"><path fill="#ea7c30" d="M6.25 0l1.95 3.8 4.3.3-3.4 2.8 1.1 4.1-3.95-2.4-3.95 2.4 1.1-4.1-3.4-2.8 4.3-.3zM23.15 0l1.95 3.8 4.3.3-3.4 2.8 1.1 4.1-3.95-2.4-3.95 2.4 1.1-4.1-3.4-2.8 4.3-.3zM40.05 0l1.95 3.8 4.3.3-3.4 2.8 1.1 4.1-3.95-2.4-3.95 2.4 1.1-4.1-3.4-2.8 4.3-.3zM56.95 0l1.95 3.8 4.3.3-3.4 2.8 1.1 4.1-3.95-2.4-3.95 2.4 1.1-4.1-3.4-2.8 4.3-.3z"/><path fill="#dcdcdc" d="M73.85 0l1.95 3.8 4.3.3-3.4 2.8 1.1 4.1-3.95-2.4-3.95 2.4 1.1-4.1-3.4-2.8 4.3-.3z"/></svg><span class="sc" style="right:13.8px">80%</span></div>
<div class="r" style="top:362.7px"><span class="n">6</span><span class="c1">Green Energy Co.</span><span class="c2">Lisa Walker</span><span class="c3">Renewable Energy Solutions</span><svg style="left:603.1px" width="82" height="12" viewBox="0 0 82 12"><path fill="#cd9fd4" d="M6.25 0l1.95 3.8 4.3.3-3.4 2.8 1.1 4.1-3.95-2.4-3.95 2.4 1.1-4.1-3.4-2.8 4.3-.3zM23.15 0l1.95 3.8 4.3.3-3.4 2.8 1.1 4.1-3.95-2.4-3.95 2.4 1.1-4.1-3.4-2.8 4.3-.3zM40.05 0l1.95 3.8 4.3.3-3.4 2.8 1.1 4.1-3.95-2.4-3.95 2.4 1.1-4.1-3.4-2.8 4.3-.3zM56.95 0l1.95 3.8 4.3.3-3.4 2.8 1.1 4.1-3.95-2.4-3.95 2.4 1.1-4.1-3.4-2.8 4.3-.3z"/><path fill="#dcdcdc" d="M73.85 0l1.95 3.8 4.3.3-3.4 2.8 1.1 4.1-3.95-2.4-3.95 2.4 1.1-4.1-3.4-2.8 4.3-.3z"/></svg><svg style="left:713.1px" width="82" height="12" viewBox="0 0 82 12"><path fill="#4f82fc" d="M6.25 0l1.95 3.8 4.3.3-3.4 2.8 1.1 4.1-3.95-2.4-3.95 2.4 1.1-4.1-3.4-2.8 4.3-.3zM23.15 0l1.95 3.8 4.3.3-3.4 2.8 1.1 4.1-3.95-2.4-3.95 2.4 1.1-4.1-3.4-2.8 4.3-.3zM40.05 0l1.95 3.8 4.3.3-3.4 2.8 1.1 4.1-3.95-2.4-3.95 2.4 1.1-4.1-3.4-2.8 4.3-.3zM56.95 0l1.95 3.8 4.3.3-3.4 2.8 1.1 4.1-3.95-2.4-3.95 2.4 1.1-4.1-3.4-2.8 4.3-.3z"/><path fill="#dcdcdc" d="M73.85 0l1.95 3.8 4.3.3-3.4 2.8 1.1 4.1-3.95-2.4-3.95 2.4 1.1-4.1-3.4-2.8 4.3-.3z"/></svg><svg style="left:816.4px" width="82" height="12" viewBox="0 0 82 12"><path fill="#d53041" d="M6.25 0l1.95 3.8 4.3.3-3.4 2.8 1.1 4.1-3.95-2.4-3.95 2.4 1.1-4.1-3.4-2.8 4.3-.3zM23.15 0l1.95 3.8 4.3.3-3.4 2.8 1.1 4.1-3.95-2.4-3.95 2.4 1.1-4.1-3.4-2.8 4.3-.3zM40.05 0l1.95 3.8 4.3.3-3.4 2.8 1.1 4.1-3.95-2.4-3.95 2.4 1.1-4.1-3.4-2.8 4.3-.3zM56.95 0l1.95 3.8 4.3.3-3.4 2.8 1.1 4.1-3.95-2.4-3.95 2.4 1.1-4.1-3.4-2.8 4.3-.3z"/><path fill="#dcdcdc" d="M73.85 0l1.95 3.8 4.3.3-3.4 2.8 1.1 4.1-3.95-2.4-3.95 2.4 1.1-4.1-3.4-2.8 4.3-.3z"/></svg><svg style="left:968.4px" width="82" height="12" viewBox="0 0 82 12"><path fill="#59a765" d="M6.25 0l1.95 3.8 4.3.3-3.4 2.8 1.1 4.1-3.95-2.4-3.95 2.4 1.1-4.1-3.4-2.8 4.3-.3zM23.15 0l1.95 3.8 4.3.3-3.4 2.8 1.1 4.1-3.95-2.4-3.95 2.4 1.1-4.1-3.4-2.8 4.3-.3zM40.05 0l1.95 3.8 4.3.3-3.4 2.8 1.1 4.1-3.95-2.4-3.95 2.4 1.1-4.1-3.4-2.8 4.3-.3zM56.95 0l1.95 3.8 4.3.3-3.4 2.8 1.1 4.1-3.95-2.4-3.95 2.4 1.1-4.1-3.4-2.8 4.3-.3zM73.85 0l1.95 3.8 4.3.3-3.4 2.8 1.1 4.1-3.95-2.4-3.95 2.4 1.1-4.1-3.4-2.8 4.3-.3z"/></svg><svg style="left:1072.5px" width="82" height="12" viewBox="0 0 82 12"><path fill="#fbbf12" d="M6.25 0l1.95 3.8 4.3.3-3.4 2.8 1.1 4.1-3.95-2.4-3.95 2.4 1.1-4.1-3.4-2.8 4.3-.3zM23.15 0l1.95 3.8 4.3.3-3.4 2.8 1.1 4.1-3.95-2.4-3.95 2.4 1.1-4.1-3.4-2.8 4.3-.3zM40.05 0l1.95 3.8 4.3.3-3.4 2.8 1.1 4.1-3.95-2.4-3.95 2.4 1.1-4.1-3.4-2.8 4.3-.3zM56.95 0l1.95 3.8 4.3.3-3.4 2.8 1.1 4.1-3.95-2.4-3.95 2.4 1.1-4.1-3.4-2.8 4.3-.3z"/><path fill="#dcdcdc" d="M73.85 0l1.95 3.8 4.3.3-3.4 2.8 1.1 4.1-3.95-2.4-3.95 2.4 1.1-4.1-3.4-2.8 4.3-.3z"/></svg><svg style="left:1211.5px" width="82" height="12" viewBox="0 0 82 12"><path fill="#53b7cf" d="M6.25 0l1.95 3.8 4.3.3-3.4 2.8 1.1 4.1-3.95-2.4-3.95 2.4 1.1-4.1-3.4-2.8 4.3-.3zM23.15 0l1.95 3.8 4.3.3-3.4 2.8 1.1 4.1-3.95-2.4-3.95 2.4 1.1-4.1-3.4-2.8 4.3-.3zM40.05 0l1.95 3.8 4.3.3-3.4 2.8 1.1 4.1-3.95-2.4-3.95 2.4 1.1-4.1-3.4-2.8 4.3-.3zM56.95 0l1.95 3.8 4.3.3-3.4 2.8 1.1 4.1-3.95-2.4-3.95 2.4 1.1-4.1-3.4-2.8 4.3-.3z"/><path fill="#dcdcdc" d="M73.85 0l1.95 3.8 4.3.3-3.4 2.8 1.1 4.1-3.95-2.4-3.95 2.4 1.1-4.1-3.4-2.8 4.3-.3z"/></svg><svg style="left:1316.2px" width="82" height="12" viewBox="0 0 82 12"><path fill="#ea7c30" d="M6.25 0l1.95 3.8 4.3.3-3.4 2.8 1.1 4.1-3.95-2.4-3.95 2.4 1.1-4.1-3.4-2.8 4.3-.3zM23.15 0l1.95 3.8 4.3.3-3.4 2.8 1.1 4.1-3.95-2.4-3.95 2.4 1.1-4.1-3.4-2.8 4.3-.3zM40.05 0l1.95 3.8 4.3.3-3.4 2.8 1.1 4.1-3.95-2.4-3.95 2.4 1.1-4.1-3.4-2.8 4.3-.3zM56.95 0l1.95 3.8 4.3.3-3.4 2.8 1.1 4.1-3.95-2.4-3.95 2.4 1.1-4.1-3.4-2.8 4.3-.3z"/><path fill="#dcdcdc" d="M73.85 0l1.95 3.8 4.3.3-3.4 2.8 1.1 4.1-3.95-2.4-3.95 2.4 1.1-4.1-3.4-2.8 4.3-.3z"/></svg><span class="sc" style="right:13.8px">83%</span></div>
<div class="r" style="top:398.9px"><span class="n">7</span><span class="c1">Tech Innovators</span><span class="c2">Steve Young</span><span class="c3">Software Development</span><svg style="left:603.1px" width="82" height="12" viewBox="0 0 82 12"><path fill="#cd9fd4" d="M6.25 0l1.95 3.8 4.3.3-3.4 2.8 1.1 4.1-3.95-2.4-3.95 2.4 1.1-4.1-3.4-2.8 4.3-.3zM23.15 0l1.95 3.8 4.3.3-3.4 2.8 1.1 4.1-3.95-2.4-3.95 2.4 1.1-4.1-3.4-2.8 4.3-.3zM40.05 0l1.95 3.8 4.3.3-3.4 2.8 1.1 4.1-3.95-2.4-3.95 2.4 1.1-4.1-3.4-2.8 4.3-.3z"/><path fill="#dcdcdc" d="M56.95 0l1.95 3.8 4.3.3-3.4 2.8 1.1 4.1-3.95-2.4-3.95 2.4 1.1-4.1-3.4-2.8 4.3-.3zM73.85 0l1.95 3.8 4.3.3-3.4 2.8 1.1 4.1-3.95-2.4-3.95 2.4 1.1-4.1-3.4-2.8 4.3-.3z"/></svg><svg style="left:713.1px" width="82" height="12" viewBox="0 0 82 12"><path fill="#4f82fc" d="M6.25 0l1.95 3.8 4.3.3-3.4 2.8 1.1 4.1-3.95-2.4-3.95 2.4 1.1-4.1-3.4-2.8 4.3-.3zM23.15 0l1.95 3.8 4.3.3-3.4 2.8 1.1 4.1-3.95-2.4-3.95 2.4 1.1-4.1-3.4-2.8 4.3-.3zM40.05 0l1.95 3.8 4.3.3-3.4 2.8 1.1 4.1-3.95-2.4-3.95 2.4 1.1-4.1-3.4-2.8 4.3-.3zM56.95 0l1.95 3.8 4.3.3-3.4 2.8 1.1 4.1-3.95-2.4-3.95 2.4 1.1-4.1-3.4-2.8 4.3-.3z"/><path fill="#dcdcdc" d="M73.85 0l1.95 3.8 4.3.3-3.4 2.8 1.1 4.1-3.95-2.4-3.95 2.4 1.1-4.1-3.4-2.8 4.3-.3z"/></svg><svg style="left:816.4px" width="82" height="12" viewBox="0 0 82 12"><path fill="#d53041" d="M6.25 0l1.95 3.8 4.3.3-3.4 2.8 1.1 4.1-3.95-2.4-3.95 2.4 1.1-4.1-3.4-2.8 4.3-.3zM23.15 0l1.95 3.8 4.3.3-3.4 2.8 1.1 4.1-3.95-2.4-3.95 2.4 1.1-4.1-3.4-2.8 4.3-.3zM40.05 0l1.95 3.8 4.3.3-3.4 2.8 1.1 4.1-3.95-2.4-3.95 2.4 1.1-4.1-3.4-2.8 4.3-.3z"/><path fill="#dcdcdc" d="M56.95 0l1.95 3.8 4.3.3-3.4 2.8 1.1 4.1-3.95-2.4-3.95 2.4 1.1-4.1-3.4-2.8 4.3-.3zM73.85 0l1.95 3.8 4.3.3-3.4 2.8 1.1 4.1-3.95-2.4-3.95 2.4 1.1-4.1-3.4-2.8 4.3-.3z"/></svg><svg style="left:968.4px" width="82" height="12" viewBox="0 0 82 12"><path fill="#59a765" d="M6.25 0l1.95 3.8 4.3.3-3.4 2.8 1.1 4.1-3.95-2.4-3.95 2.4 1.1-4.1-3.4-2.8 4.3-.3zM23.15 0l1.95 3.8 4.3.3-3.4 2.8 1.1 4.1-3.95-2.4-3.95 2.4 1.1-4.1-3.4-2.8 4.3-.3zM40.05 0l1.95 3.8 4.3.3-3.4 2.8 1.1 4.1-3.95-2.4-3.95 2.4 1.1-4.1-3.4-2.8 4.3-.3zM56.95 0l1.95 3.8 4.3.3-3.4 2.8 1.1 4.1-3.95-2.4-3.95 2.4 1.1-4.1-3.4-2.8 4.3-.3z"/><path fill="#dcdcdc" d="M73.85 0l1.95 3.8 4.3.3-3.4 2.8 1.1 4.1-3.95-2.4-3.95 2.4 1.1-4.1-3.4-2.8 4.3-.3z"/></svg><svg style="left:1072.5px" width="82" height="12" viewBox="0 0 82 12"><path fill="#fbbf12" d="M6.25 0l1.95 3.8 4.3.3-3.4 2.8 1.1 4.1-3.95-2.4-3.95 2.4 1.1-4.1-3.4-2.8 4.3-.3zM23.15 0l1.95 3.8 4.3.3-3.4 2.8 1.1 4.1-3.95-2.4-3.95 2.4 1.1-4.1-3.4-2.8 4.3-.3zM40.05 0l1.95 3.8 4.3.3-3.4 2.8 1.1 4.1-3.95-2.4-3.95 2.4 1.1-4.1-3.4-2.8 4.3-.3zM56.95 0l1.95 3.8 4.3.3-3.4 2.8 1.1 4.1-3.95-2.4-3.95 2.4 1.1-4.1-3.4-2.8 4.3-.3z"/><path fill="#dcdcdc" d="M73.85 0l1.95 3.8 4.3.3-3.4 2.8 1.1 4.1-3.95-2.4-3.95 2.4 1.1-4.1-3.4-2.8 4.3-.3z"/></svg><svg style="left:1211.5px" width="82" height="12" viewBox="0 0 82 12"><path fill="#53b7cf" d="M6.25 0l1.95 3.8 4.3.3-3.4 2.8 1.1 4.1-3.95-2.4-3.95 2.4 1.1-4.1-3.4-2.8 4.3-.3zM23.15 0l1.95 3.8 4.3.3-3.4 2.8 1.1 4.1-3.95-2.4-3.95 2.4 1.1-4.1-3.4-2.8 4.3-.3zM40.05 0l1.95 3.8 4.3.3-3.4 2.8 1.1 4.1-3.95-2.4-3.95 2.4 1.1-4.1-3.4-2.8 4.3-.3zM56.95 0l1.95 3.8 4.3.3-3.4 2.8 1.1 4.1-3.95-2.4-3.95 2.4 1.1-4.1-3.4-2.8 4.3-.3z"/><path fill="#dcdcdc" d="M73.85 0l1.95 3.8 4.3.3-3.4 2.8 1.1 4.1-3.95-2.4-3.95 2.4 1.1-4.1-3.4-2.8 4.3-.3z"/></svg><svg style="left:1316.2px" width="82" height="12" viewBox="0 0 82 12"><path fill="#ea7c30" d="M6.25 0l1.95 3.8 4.3.3-3.4 2.8 1.1 4.1-3.95-2.4-3.95 2.4 1.1-4.1-3.4-2.8 4.3-.3zM23.15 0l1.95 3.8 4.3.3-3.4 2.8 1.1 4.1-3.95-2.4-3.95 2.4 1.1-4.1-3.4-2.8 4.3-.3zM40.05 0l1.95 3.8 4.3.3-3.4 2.8 1.1 4.1-3.95-2.4-3.95 2.4 1.1-4.1-3.4-2.8 4.3-.3z"/><path fill="#dcdcdc" d="M56.95 0l1.95 3.8 4.3.3-3.4 2.8 1.1 4.1-3.95-2.4-3.95 2.4 1.1-4.1-3.4-2.8 4.3-.3zM73.85 0l1.95 3.8 4.3.3-3.4 2.8 1.1 4.1-3.95-2.4-3.95 2.4 1.1-4.1-3.4-2.8 4.3-.3z"/></svg><span class="sc" style="right:13.8px">71%</span></div>
<div class="r" style="top:435.1px"><span class="n">8</span><span class="c1">BuildSmart Ltd</span><span class="c2">Nancy Allen</span><span class="c3">Construction Services</span><svg style="left:603.1px" width="82" height="12" viewBox="0 0 82 12"><path fill="#cd9fd4" d="M6.25 0l1.95 3.8 4.3.3-3.4 2.8 1.1 4.1-3.95-2.4-3.95 2.4 1.1-4.1-3.4-2.8 4.3-.3zM23.15 0l1.95 3.8 4.3.3-3.4 2.8 1.1 4.1-3.95-2.4-3.95 2.4 1.1-4.1-3.4-2.8 4.3-.3zM40.05 0l1.95 3.8 4.3.3-3.4 2.8 1.1 4.1-3.95-2.4-3.95 2.4 1.1-4.1-3.4-2.8 4.3-.3zM56.95 0l1.95 3.8 4.3.3-3.4 2.8 1.1 4.1-3.95-2.4-3.95 2.4 1.1-4.1-3.4-2.8 4.3-.3zM73.85 0l1.95 3.8 4.3.3-3.4 2.8 1.1 4.1-3.95-2.4-3.95 2.4 1.1-4.1-3.4-2.8 4.3-.3z"/></svg><svg style="left:713.1px" width="82" height="12" viewBox="0 0 82 12"><path fill="#4f82fc" d="M6.25 0l1.95 3.8 4.3.3-3.4 2.8 1.1 4.1-3.95-2.4-3.95 2.4 1.1-4.1-3.4-2.8 4.3-.3zM23.15 0l1.95 3.8 4.3.3-3.4 2.8 1.1 4.1-3.95-2.4-3.95 2.4 1.1-4.1-3.4-2.8 4.3-.3zM40.05 0l1.95 3.8 4.3.3-3.4 2.8 1.1 4.1-3.95-2.4-3.95 2.4 1.1-4.1-3.4-2.8 4.3-.3zM56.95 0l1.95 3.8 4.3.3-3.4 2.8 1.1 4.1-3.95-2.4-3.95 2.4 1.1-4.1-3.4-2.8 4.3-.3z"/><path fill="#dcdcdc" d="M73.85 0l1.95 3.8 4.3.3-3.4 2.8 1.1 4.1-3.95-2.4-3.95 2.4 1.1-4.1-3.4-2.8 4.3-.3z"/></svg><svg style="left:816.4px" width="82" height="12" viewBox="0 0 82 12"><path fill="#d53041" d="M6.25 0l1.95 3.8 4.3.3-3.4 2.8 1.1 4.1-3.95-2.4-3.95 2.4 1.1-4.1-3.4-2.8 4.3-.3zM23.15 0l1.95 3.8 4.3.3-3.4 2.8 1.1 4.1-3.95-2.4-3.95 2.4 1.1-4.1-3.4-2.8 4.3-.3zM40.05 0l1.95 3.8 4.3.3-3.4 2.8 1.1 4.1-3.95-2.4-3.95 2.4 1.1-4.1-3.4-2.8 4.3-.3zM56.95 0l1.95 3.8 4.3.3-3.4 2.8 1.1 4.1-3.95-2.4-3.95 2.4 1.1-4.1-3.4-2.8 4.3-.3zM73.85 0l1.95 3.8 4.3.3-3.4 2.8 1.1 4.1-3.95-2.4-3.95 2.4 1.1-4.1-3.4-2.8 4.3-.3z"/></svg><svg style="left:968.4px" width="82" height="12" viewBox="0 0 82 12"><path fill="#59a765" d="M6.25 0l1.95 3.8 4.3.3-3.4 2.8 1.1 4.1-3.95-2.4-3.95 2.4 1.1-4.1-3.4-2.8 4.3-.3zM23.15 0l1.95 3.8 4.3.3-3.4 2.8 1.1 4.1-3.95-2.4-3.95 2.4 1.1-4.1-3.4-2.8 4.3-.3zM40.05 0l1.95 3.8 4.3.3-3.4 2.8 1.1 4.1-3.95-2.4-3.95 2.4 1.1-4.1-3.4-2.8 4.3-.3z"/><path fill="#dcdcdc" d="M56.95 0l1.95 3.8 4.3.3-3.4 2.8 1.1 4.1-3.95-2.4-3.95 2.4 1.1-4.1-3.4-2.8 4.3-.3zM73.85 0l1.95 3.8 4.3.3-3.4 2.8 1.1 4.1-3.95-2.4-3.95 2.4 1.1-4.1-3.4-2.8 4.3-.3z"/></svg><svg style="left:1072.5px" width="82" height="12" viewBox="0 0 82 12"><path fill="#fbbf12" d="M6.25 0l1.95 3.8 4.3.3-3.4 2.8 1.1 4.1-3.95-2.4-3.95 2.4 1.1-4.1-3.4-2.8 4.3-.3zM23.15 0l1.95 3.8 4.3.3-3.4 2.8 1.1 4.1-3.95-2.4-3.95 2.4 1.1-4.1-3.4-2.8 4.3-.3zM40.05 0l1.95 3.8 4.3.3-3.4 2.8 1.1 4.1-3.95-2.4-3.95 2.4 1.1-4.1-3.4-2.8 4.3-.3zM56.95 0l1.95 3.8 4.3.3-3.4 2.8 1.1 4.1-3.95-2.4-3.95 2.4 1.1-4.1-3.4-2.8 4.3-.3zM73.85 0l1.95 3.8 4.3.3-3.4 2.8 1.1 4.1-3.95-2.4-3.95 2.4 1.1-4.1-3.4-2.8 4.3-.3z"/></svg><svg style="left:1211.5px" width="82" height="12" viewBox="0 0 82 12"><path fill="#53b7cf" d="M6.25 0l1.95 3.8 4.3.3-3.4 2.8 1.1 4.1-3.95-2.4-3.95 2.4 1.1-4.1-3.4-2.8 4.3-.3zM23.15 0l1.95 3.8 4.3.3-3.4 2.8 1.1 4.1-3.95-2.4-3.95 2.4 1.1-4.1-3.4-2.8 4.3-.3zM40.05 0l1.95 3.8 4.3.3-3.4 2.8 1.1 4.1-3.95-2.4-3.95 2.4 1.1-4.1-3.4-2.8 4.3-.3z"/><path fill="#dcdcdc" d="M56.95 0l1.95 3.8 4.3.3-3.4 2.8 1.1 4.1-3.95-2.4-3.95 2.4 1.1-4.1-3.4-2.8 4.3-.3zM73.85 0l1.95 3.8 4.3.3-3.4 2.8 1.1 4.1-3.95-2.4-3.95 2.4 1.1-4.1-3.4-2.8 4.3-.3z"/></svg><svg style="left:1316.2px" width="82" height="12" viewBox="0 0 82 12"><path fill="#ea7c30" d="M6.25 0l1.95 3.8 4.3.3-3.4 2.8 1.1 4.1-3.95-2.4-3.95 2.4 1.1-4.1-3.4-2.8 4.3-.3zM23.15 0l1.95 3.8 4.3.3-3.4 2.8 1.1 4.1-3.95-2.4-3.95 2.4 1.1-4.1-3.4-2.8 4.3-.3zM40.05 0l1.95 3.8 4.3.3-3.4 2.8 1.1 4.1-3.95-2.4-3.95 2.4 1.1-4.1-3.4-2.8 4.3-.3zM56.95 0l1.95 3.8 4.3.3-3.4 2.8 1.1 4.1-3.95-2.4-3.95 2.4 1.1-4.1-3.4-2.8 4.3-.3zM73.85 0l1.95 3.8 4.3.3-3.4 2.8 1.1 4.1-3.95-2.4-3.95 2.4 1.1-4.1-3.4-2.8 4.3-.3z"/></svg><span class="sc" style="right:13.8px">86%</span></div>
<div class="r" style="top:471.3px"><span class="n">9</span><span class="c1">Office Essentials</span><span class="c2">Gary Scott</span><span class="c3">Office Supplies</span><svg style="left:603.1px" width="82" height="12" viewBox="0 0 82 12"><path fill="#cd9fd4" d="M6.25 0l1.95 3.8 4.3.3-3.4 2.8 1.1 4.1-3.95-2.4-3.95 2.4 1.1-4.1-3.4-2.8 4.3-.3zM23.15 0l1.95 3.8 4.3.3-3.4 2.8 1.1 4.1-3.95-2.4-3.95 2.4 1.1-4.1-3.4-2.8 4.3-.3zM40.05 0l1.95 3.8 4.3.3-3.4 2.8 1.1 4.1-3.95-2.4-3.95 2.4 1.1-4.1-3.4-2.8 4.3-.3zM56.95 0l1.95 3.8 4.3.3-3.4 2.8 1.1 4.1-3.95-2.4-3.95 2.4 1.1-4.1-3.4-2.8 4.3-.3z"/><path fill="#dcdcdc" d="M73.85 0l1.95 3.8 4.3.3-3.4 2.8 1.1 4.1-3.95-2.4-3.95 2.4 1.1-4.1-3.4-2.8 4.3-.3z"/></svg><svg style="left:713.1px" width="82" height="12" viewBox="0 0 82 12"><path fill="#4f82fc" d="M6.25 0l1.95 3.8 4.3.3-3.4 2.8 1.1 4.1-3.95-2.4-3.95 2.4 1.1-4.1-3.4-2.8 4.3-.3zM23.15 0l1.95 3.8 4.3.3-3.4 2.8 1.1 4.1-3.95-2.4-3.95 2.4 1.1-4.1-3.4-2.8 4.3-.3zM40.05 0l1.95 3.8 4.3.3-3.4 2.8 1.1 4.1-3.95-2.4-3.95 2.4 1.1-4.1-3.4-2.8 4.3-.3z"/><path fill="#dcdcdc" d="M56.95 0l1.95 3.8 4.3.3-3.4 2.8 1.1 4.1-3.95-2.4-3.95 2.4 1.1-4.1-3.4-2.8 4.3-.3zM73.85 0l1.95 3.8 4.3.3-3.4 2.8 1.1 4.1-3.95-2.4-3.95 2.4 1.1-4.1-3.4-2.8 4.3-.3z"/></svg><svg style="left:816.4px" width="82" height="12" viewBox="0 0 82 12"><path fill="#d53041" d="M6.25 0l1.95 3.8 4.3.3-3.4 2.8 1.1 4.1-3.95-2.4-3.95 2.4 1.1-4.1-3.4-2.8 4.3-.3zM23.15 0l1.95 3.8 4.3.3-3.4 2.8 1.1 4.1-3.95-2.4-3.95 2.4 1.1-4.1-3.4-2.8 4.3-.3zM40.05 0l1.95 3.8 4.3.3-3.4 2.8 1.1 4.1-3.95-2.4-3.95 2.4 1.1-4.1-3.4-2.8 4.3-.3zM56.95 0l1.95 3.8 4.3.3-3.4 2.8 1.1 4.1-3.95-2.4-3.95 2.4 1.1-4.1-3.4-2.8 4.3-.3z"/><path fill="#dcdcdc" d="M73.85 0l1.95 3.8 4.3.3-3.4 2.8 1.1 4.1-3.95-2.4-3.95 2.4 1.1-4.1-3.4-2.8 4.3-.3z"/></svg><svg style="left:968.4px" width="82" height="12" viewBox="0 0 82 12"><path fill="#59a765" d="M6.25 0l1.95 3.8 4.3.3-3.4 2.8 1.1 4.1-3.95-2.4-3.95 2.4 1.1-4.1-3.4-2.8 4.3-.3zM23.15 0l1.95 3.8 4.3.3-3.4 2.8 1.1 4.1-3.95-2.4-3.95 2.4 1.1-4.1-3.4-2.8 4.3-.3zM40.05 0l1.95 3.8 4.3.3-3.4 2.8 1.1 4.1-3.95-2.4-3.95 2.4 1.1-4.1-3.4-2.8 4.3-.3zM56.95 0l1.95 3.8 4.3.3-3.4 2.8 1.1 4.1-3.95-2.4-3.95 2.4 1.1-4.1-3.4-2.8 4.3-.3z"/><path fill="#dcdcdc" d="M73.85 0l1.95 3.8 4.3.3-3.4 2.8 1.1 4.1-3.95-2.4-3.95 2.4 1.1-4.1-3.4-2.8 4.3-.3z"/></svg><svg style="left:1072.5px" width="82" height="12" viewBox="0 0 82 12"><path fill="#fbbf12" d="M6.25 0l1.95 3.8 4.3.3-3.4 2.8 1.1 4.1-3.95-2.4-3.95 2.4 1.1-4.1-3.4-2.8 4.3-.3zM23.15 0l1.95 3.8 4.3.3-3.4 2.8 1.1 4.1-3.95-2.4-3.95 2.4 1.1-4.1-3.4-2.8 4.3-.3zM40.05 0l1.95 3.8 4.3.3-3.4 2.8 1.1 4.1-3.95-2.4-3.95 2.4 1.1-4.1-3.4-2.8 4.3-.3zM56.95 0l1.95 3.8 4.3.3-3.4 2.8 1.1 4.1-3.95-2.4-3.95 2.4 1.1-4.1-3.4-2.8 4.3-.3z"/><path fill="#dcdcdc" d="M73.85 0l1.95 3.8 4.3.3-3.4 2.8 1.1 4.1-3.95-2.4-3.95 2.4 1.1-4.1-3.4-2.8 4.3-.3z"/></svg><svg style="left:1211.5px" width="82" height="12" viewBox="0 0 82 12"><path fill="#53b7cf" d="M6.25 0l1.95 3.8 4.3.3-3.4 2.8 1.1 4.1-3.95-2.4-3.95 2.4 1.1-4.1-3.4-2.8 4.3-.3zM23.15 0l1.95 3.8 4.3.3-3.4 2.8 1.1 4.1-3.95-2.4-3.95 2.4 1.1-4.1-3.4-2.8 4.3-.3zM40.05 0l1.95 3.8 4.3.3-3.4 2.8 1.1 4.1-3.95-2.4-3.95 2.4 1.1-4.1-3.4-2.8 4.3-.3zM56.95 0l1.95 3.8 4.3.3-3.4 2.8 1.1 4.1-3.95-2.4-3.95 2.4 1.1-4.1-3.4-2.8 4.3-.3z"/><path fill="#dcdcdc" d="M73.85 0l1.95 3.8 4.3.3-3.4 2.8 1.1 4.1-3.95-2.4-3.95 2.4 1.1-4.1-3.4-2.8 4.3-.3z"/></svg><svg style="left:1316.2px" width="82" height="12" viewBox="0 0 82 12"><path fill="#ea7c30" d="M6.25 0l1.95 3.8 4.3.3-3.4 2.8 1.1 4.1-3.95-2.4-3.95 2.4 1.1-4.1-3.4-2.8 4.3-.3zM23.15 0l1.95 3.8 4.3.3-3.4 2.8 1.1 4.1-3.95-2.4-3.95 2.4 1.1-4.1-3.4-2.8 4.3-.3zM40.05 0l1.95 3.8 4.3.3-3.4 2.8 1.1 4.1-3.95-2.4-3.95 2.4 1.1-4.1-3.4-2.8 4.3-.3z"/><path fill="#dcdcdc" d="M56.95 0l1.95 3.8 4.3.3-3.4 2.8 1.1 4.1-3.95-2.4-3.95 2.4 1.1-4.1-3.4-2.8 4.3-.3zM73.85 0l1.95 3.8 4.3.3-3.4 2.8 1.1 4.1-3.95-2.4-3.95 2.4 1.1-4.1-3.4-2.8 4.3-.3z"/></svg><span class="sc" style="right:13.8px">74%</span></div>
<div class="r" style="top:507.5px"><span class="n">10</span><span class="c1">Prime Security</span><span class="c2">Helen King</span><span class="c3">Security Services</span><svg style="left:603.1px" width="82" height="12" viewBox="0 0 82 12"><path fill="#cd9fd4" d="M6.25 0l1.95 3.8 4.3.3-3.4 2.8 1.1 4.1-3.95-2.4-3.95 2.4 1.1-4.1-3.4-2.8 4.3-.3zM23.15 0l1.95 3.8 4.3.3-3.4 2.8 1.1 4.1-3.95-2.4-3.95 2.4 1.1-4.1-3.4-2.8 4.3-.3zM40.05 0l1.95 3.8 4.3.3-3.4 2.8 1.1 4.1-3.95-2.4-3.95 2.4 1.1-4.1-3.4-2.8 4.3-.3zM56.95 0l1.95 3.8 4.3.3-3.4 2.8 1.1 4.1-3.95-2.4-3.95 2.4 1.1-4.1-3.4-2.8 4.3-.3zM73.85 0l1.95 3.8 4.3.3-3.4 2.8 1.1 4.1-3.95-2.4-3.95 2.4 1.1-4.1-3.4-2.8 4.3-.3z"/></svg><svg style="left:713.1px" width="82" height="12" viewBox="0 0 82 12"><path fill="#4f82fc" d="M6.25 0l1.95 3.8 4.3.3-3.4 2.8 1.1 4.1-3.95-2.4-3.95 2.4 1.1-4.1-3.4-2.8 4.3-.3zM23.15 0l1.95 3.8 4.3.3-3.4 2.8 1.1 4.1-3.95-2.4-3.95 2.4 1.1-4.1-3.4-2.8 4.3-.3zM40.05 0l1.95 3.8 4.3.3-3.4 2.8 1.1 4.1-3.95-2.4-3.95 2.4 1.1-4.1-3.4-2.8 4.3-.3zM56.95 0l1.95 3.8 4.3.3-3.4 2.8 1.1 4.1-3.95-2.4-3.95 2.4 1.1-4.1-3.4-2.8 4.3-.3zM73.85 0l1.95 3.8 4.3.3-3.4 2.8 1.1 4.1-3.95-2.4-3.95 2.4 1.1-4.1-3.4-2.8 4.3-.3z"/></svg><svg style="left:816.4px" width="82" height="12" viewBox="0 0 82 12"><path fill="#d53041" d="M6.25 0l1.95 3.8 4.3.3-3.4 2.8 1.1 4.1-3.95-2.4-3.95 2.4 1.1-4.1-3.4-2.8 4.3-.3zM23.15 0l1.95 3.8 4.3.3-3.4 2.8 1.1 4.1-3.95-2.4-3.95 2.4 1.1-4.1-3.4-2.8 4.3-.3zM40.05 0l1.95 3.8 4.3.3-3.4 2.8 1.1 4.1-3.95-2.4-3.95 2.4 1.1-4.1-3.4-2.8 4.3-.3zM56.95 0l1.95 3.8 4.3.3-3.4 2.8 1.1 4.1-3.95-2.4-3.95 2.4 1.1-4.1-3.4-2.8 4.3-.3zM73.85 0l1.95 3.8 4.3.3-3.4 2.8 1.1 4.1-3.95-2.4-3.95 2.4 1.1-4.1-3.4-2.8 4.3-.3z"/></svg><svg style="left:968.4px" width="82" height="12" viewBox="0 0 82 12"><path fill="#59a765" d="M6.25 0l1.95 3.8 4.3.3-3.4 2.8 1.1 4.1-3.95-2.4-3.95 2.4 1.1-4.1-3.4-2.8 4.3-.3zM23.15 0l1.95 3.8 4.3.3-3.4 2.8 1.1 4.1-3.95-2.4-3.95 2.4 1.1-4.1-3.4-2.8 4.3-.3zM40.05 0l1.95 3.8 4.3.3-3.4 2.8 1.1 4.1-3.95-2.4-3.95 2.4 1.1-4.1-3.4-2.8 4.3-.3z"/><path fill="#dcdcdc" d="M56.95 0l1.95 3.8 4.3.3-3.4 2.8 1.1 4.1-3.95-2.4-3.95 2.4 1.1-4.1-3.4-2.8 4.3-.3zM73.85 0l1.95 3.8 4.3.3-3.4 2.8 1.1 4.1-3.95-2.4-3.95 2.4 1.1-4.1-3.4-2.8 4.3-.3z"/></svg><svg style="left:1072.5px" width="82" height="12" viewBox="0 0 82 12"><path fill="#fbbf12" d="M6.25 0l1.95 3.8 4.3.3-3.4 2.8 1.1 4.1-3.95-2.4-3.95 2.4 1.1-4.1-3.4-2.8 4.3-.3zM23.15 0l1.95 3.8 4.3.3-3.4 2.8 1.1 4.1-3.95-2.4-3.95 2.4 1.1-4.1-3.4-2.8 4.3-.3zM40.05 0l1.95 3.8 4.3.3-3.4 2.8 1.1 4.1-3.95-2.4-3.95 2.4 1.1-4.1-3.4-2.8 4.3-.3zM56.95 0l1.95 3.8 4.3.3-3.4 2.8 1.1 4.1-3.95-2.4-3.95 2.4 1.1-4.1-3.4-2.8 4.3-.3zM73.85 0l1.95 3.8 4.3.3-3.4 2.8 1.1 4.1-3.95-2.4-3.95 2.4 1.1-4.1-3.4-2.8 4.3-.3z"/></svg><svg style="left:1211.5px" width="82" height="12" viewBox="0 0 82 12"><path fill="#53b7cf" d="M6.25 0l1.95 3.8 4.3.3-3.4 2.8 1.1 4.1-3.95-2.4-3.95 2.4 1.1-4.1-3.4-2.8 4.3-.3zM23.15 0l1.95 3.8 4.3.3-3.4 2.8 1.1 4.1-3.95-2.4-3.95 2.4 1.1-4.1-3.4-2.8 4.3-.3zM40.05 0l1.95 3.8 4.3.3-3.4 2.8 1.1 4.1-3.95-2.4-3.95 2.4 1.1-4.1-3.4-2.8 4.3-.3zM56.95 0l1.95 3.8 4.3.3-3.4 2.8 1.1 4.1-3.95-2.4-3.95 2.4 1.1-4.1-3.4-2.8 4.3-.3z"/><path fill="#dcdcdc" d="M73.85 0l1.95 3.8 4.3.3-3.4 2.8 1.1 4.1-3.95-2.4-3.95 2.4 1.1-4.1-3.4-2.8 4.3-.3z"/></svg><svg style="left:1316.2px" width="82" height="12" viewBox="0 0 82 12"><path fill="#ea7c30" d="M6.25 0l1.95 3.8 4.3.3-3.4 2.8 1.1 4.1-3.95-2.4-3.95 2.4 1.1-4.1-3.4-2.8 4.3-.3zM23.15 0l1.95 3.8 4.3.3-3.4 2.8 1.1 4.1-3.95-2.4-3.95 2.4 1.1-4.1-3.4-2.8 4.3-.3zM40.05 0l1.95 3.8 4.3.3-3.4 2.8 1.1 4.1-3.95-2.4-3.95 2.4 1.1-4.1-3.4-2.8 4.3-.3zM56.95 0l1.95 3.8 4.3.3-3.4 2.8 1.1 4.1-3.95-2.4-3.95 2.4 1.1-4.1-3.4-2.8 4.3-.3zM73.85 0l1.95 3.8 4.3.3-3.4 2.8 1.1 4.1-3.95-2.4-3.95 2.4 1.1-4.1-3.4-2.8 4.3-.3z"/></svg><span class="sc" style="right:13.8px">91%</span></div>
<div class="r" style="top:543.7px"><span class="n">11</span><span class="c1">FastPrint Solutions</span><span class="c2">Kevin Brown</span><span class="c3">Printing Services</span><svg style="left:603.1px" width="82" height="12" viewBox="0 0 82 12"><path fill="#cd9fd4" d="M6.25 0l1.95 3.8 4.3.3-3.4 2.8 1.1 4.1-3.95-2.4-3.95 2.4 1.1-4.1-3.4-2.8 4.3-.3zM23.15 0l1.95 3.8 4.3.3-3.4 2.8 1.1 4.1-3.95-2.4-3.95 2.4 1.1-4.1-3.4-2.8 4.3-.3zM40.05 0l1.95 3.8 4.3.3-3.4 2.8 1.1 4.1-3.95-2.4-3.95 2.4 1.1-4.1-3.4-2.8 4.3-.3zM56.95 0l1.95 3.8 4.3.3-3.4 2.8 1.1 4.1-3.95-2.4-3.95 2.4 1.1-4.1-3.4-2.8 4.3-.3z"/><path fill="#dcdcdc" d="M73.85 0l1.95 3.8 4.3.3-3.4 2.8 1.1 4.1-3.95-2.4-3.95 2.4 1.1-4.1-3.4-2.8 4.3-.3z"/></svg><svg style="left:713.1px" width="82" height="12" viewBox="0 0 82 12"><path fill="#4f82fc" d="M6.25 0l1.95 3.8 4.3.3-3.4 2.8 1.1 4.1-3.95-2.4-3.95 2.4 1.1-4.1-3.4-2.8 4.3-.3zM23.15 0l1.95 3.8 4.3.3-3.4 2.8 1.1 4.1-3.95-2.4-3.95 2.4 1.1-4.1-3.4-2.8 4.3-.3zM40.05 0l1.95 3.8 4.3.3-3.4 2.8 1.1 4.1-3.95-2.4-3.95 2.4 1.1-4.1-3.4-2.8 4.3-.3zM56.95 0l1.95 3.8 4.3.3-3.4 2.8 1.1 4.1-3.95-2.4-3.95 2.4 1.1-4.1-3.4-2.8 4.3-.3z"/><path fill="#dcdcdc" d="M73.85 0l1.95 3.8 4.3.3-3.4 2.8 1.1 4.1-3.95-2.4-3.95 2.4 1.1-4.1-3.4-2.8 4.3-.3z"/></svg><svg style="left:816.4px" width="82" height="12" viewBox="0 0 82 12"><path fill="#d53041" d="M6.25 0l1.95 3.8 4.3.3-3.4 2.8 1.1 4.1-3.95-2.4-3.95 2.4 1.1-4.1-3.4-2.8 4.3-.3zM23.15 0l1.95 3.8 4.3.3-3.4 2.8 1.1 4.1-3.95-2.4-3.95 2.4 1.1-4.1-3.4-2.8 4.3-.3zM40.05 0l1.95 3.8 4.3.3-3.4 2.8 1.1 4.1-3.95-2.4-3.95 2.4 1.1-4.1-3.4-2.8 4.3-.3zM56.95 0l1.95 3.8 4.3.3-3.4 2.8 1.1 4.1-3.95-2.4-3.95 2.4 1.1-4.1-3.4-2.8 4.3-.3z"/><path fill="#dcdcdc" d="M73.85 0l1.95 3.8 4.3.3-3.4 2.8 1.1 4.1-3.95-2.4-3.95 2.4 1.1-4.1-3.4-2.8 4.3-.3z"/></svg><svg style="left:968.4px" width="82" height="12" viewBox="0 0 82 12"><path fill="#59a765" d="M6.25 0l1.95 3.8 4.3.3-3.4 2.8 1.1 4.1-3.95-2.4-3.95 2.4 1.1-4.1-3.4-2.8 4.3-.3zM23.15 0l1.95 3.8 4.3.3-3.4 2.8 1.1 4.1-3.95-2.4-3.95 2.4 1.1-4.1-3.4-2.8 4.3-.3zM40.05 0l1.95 3.8 4.3.3-3.4 2.8 1.1 4.1-3.95-2.4-3.95 2.4 1.1-4.1-3.4-2.8 4.3-.3zM56.95 0l1.95 3.8 4.3.3-3.4 2.8 1.1 4.1-3.95-2.4-3.95 2.4 1.1-4.1-3.4-2.8 4.3-.3zM73.85 0l1.95 3.8 4.3.3-3.4 2.8 1.1 4.1-3.95-2.4-3.95 2.4 1.1-4.1-3.4-2.8 4.3-.3z"/></svg><svg style="left:1072.5px" width="82" height="12" viewBox="0 0 82 12"><path fill="#fbbf12" d="M6.25 0l1.95 3.8 4.3.3-3.4 2.8 1.1 4.1-3.95-2.4-3.95 2.4 1.1-4.1-3.4-2.8 4.3-.3zM23.15 0l1.95 3.8 4.3.3-3.4 2.8 1.1 4.1-3.95-2.4-3.95 2.4 1.1-4.1-3.4-2.8 4.3-.3zM40.05 0l1.95 3.8 4.3.3-3.4 2.8 1.1 4.1-3.95-2.4-3.95 2.4 1.1-4.1-3.4-2.8 4.3-.3zM56.95 0l1.95 3.8 4.3.3-3.4 2.8 1.1 4.1-3.95-2.4-3.95 2.4 1.1-4.1-3.4-2.8 4.3-.3z"/><path fill="#dcdcdc" d="M73.85 0l1.95 3.8 4.3.3-3.4 2.8 1.1 4.1-3.95-2.4-3.95 2.4 1.1-4.1-3.4-2.8 4.3-.3z"/></svg><svg style="left:1211.5px" width="82" height="12" viewBox="0 0 82 12"><path fill="#53b7cf" d="M6.25 0l1.95 3.8 4.3.3-3.4 2.8 1.1 4.1-3.95-2.4-3.95 2.4 1.1-4.1-3.4-2.8 4.3-.3zM23.15 0l1.95 3.8 4.3.3-3.4 2.8 1.1 4.1-3.95-2.4-3.95 2.4 1.1-4.1-3.4-2.8 4.3-.3zM40.05 0l1.95 3.8 4.3.3-3.4 2.8 1.1 4.1-3.95-2.4-3.95 2.4 1.1-4.1-3.4-2.8 4.3-.3z"/><path fill="#dcdcdc" d="M56.95 0l1.95 3.8 4.3.3-3.4 2.8 1.1 4.1-3.95-2.4-3.95 2.4 1.1-4.1-3.4-2.8 4.3-.3zM73.85 0l1.95 3.8 4.3.3-3.4 2.8 1.1 4.1-3.95-2.4-3.95 2.4 1.1-4.1-3.4-2.8 4.3-.3z"/></svg><svg style="left:1316.2px" width="82" height="12" viewBox="0 0 82 12"><path fill="#ea7c30" d="M6.25 0l1.95 3.8 4.3.3-3.4 2.8 1.1 4.1-3.95-2.4-3.95 2.4 1.1-4.1-3.4-2.8 4.3-.3zM23.15 0l1.95 3.8 4.3.3-3.4 2.8 1.1 4.1-3.95-2.4-3.95 2.4 1.1-4.1-3.4-2.8 4.3-.3zM40.05 0l1.95 3.8 4.3.3-3.4 2.8 1.1 4.1-3.95-2.4-3.95 2.4 1.1-4.1-3.4-2.8 4.3-.3zM56.95 0l1.95 3.8 4.3.3-3.4 2.8 1.1 4.1-3.95-2.4-3.95 2.4 1.1-4.1-3.4-2.8 4.3-.3z"/><path fill="#dcdcdc" d="M73.85 0l1.95 3.8 4.3.3-3.4 2.8 1.1 4.1-3.95-2.4-3.95 2.4 1.1-4.1-3.4-2.8 4.3-.3z"/></svg><span class="sc" style="right:13.8px">80%</span></div>
<div class="r" style="top:579.9px"><span class="n">12</span><span class="c1">HealthFirst Pty Ltd</span><span class="c2">Emma White</span><span class="c3">Healthcare Supplies</span><svg style="left:603.1px" width="82" height="12" viewBox="0 0 82 12"><path fill="#cd9fd4" d="M6.25 0l1.95 3.8 4.3.3-3.4 2.8 1.1 4.1-3.95-2.4-3.95 2.4 1.1-4.1-3.4-2.8 4.3-.3zM23.15 0l1.95 3.8 4.3.3-3.4 2.8 1.1 4.1-3.95-2.4-3.95 2.4 1.1-4.1-3.4-2.8 4.3-.3zM40.05 0l1.95 3.8 4.3.3-3.4 2.8 1.1 4.1-3.95-2.4-3.95 2.4 1.1-4.1-3.4-2.8 4.3-.3zM56.95 0l1.95 3.8 4.3.3-3.4 2.8 1.1 4.1-3.95-2.4-3.95 2.4 1.1-4.1-3.4-2.8 4.3-.3zM73.85 0l1.95 3.8 4.3.3-3.4 2.8 1.1 4.1-3.95-2.4-3.95 2.4 1.1-4.1-3.4-2.8 4.3-.3z"/></svg><svg style="left:713.1px" width="82" height="12" viewBox="0 0 82 12"><path fill="#4f82fc" d="M6.25 0l1.95 3.8 4.3.3-3.4 2.8 1.1 4.1-3.95-2.4-3.95 2.4 1.1-4.1-3.4-2.8 4.3-.3zM23.15 0l1.95 3.8 4.3.3-3.4 2.8 1.1 4.1-3.95-2.4-3.95 2.4 1.1-4.1-3.4-2.8 4.3-.3zM40.05 0l1.95 3.8 4.3.3-3.4 2.8 1.1 4.1-3.95-2.4-3.95 2.4 1.1-4.1-3.4-2.8 4.3-.3zM56.95 0l1.95 3.8 4.3.3-3.4 2.8 1.1 4.1-3.95-2.4-3.95 2.4 1.1-4.1-3.4-2.8 4.3-.3z"/><path fill="#dcdcdc" d="M73.85 0l1.95 3.8 4.3.3-3.4 2.8 1.1 4.1-3.95-2.4-3.95 2.4 1.1-4.1-3.4-2.8 4.3-.3z"/></svg><svg style="left:816.4px" width="82" height="12" viewBox="0 0 82 12"><path fill="#d53041" d="M6.25 0l1.95 3.8 4.3.3-3.4 2.8 1.1 4.1-3.95-2.4-3.95 2.4 1.1-4.1-3.4-2.8 4.3-.3zM23.15 0l1.95 3.8 4.3.3-3.4 2.8 1.1 4.1-3.95-2.4-3.95 2.4 1.1-4.1-3.4-2.8 4.3-.3zM40.05 0l1.95 3.8 4.3.3-3.4 2.8 1.1 4.1-3.95-2.4-3.95 2.4 1.1-4.1-3.4-2.8 4.3-.3zM56.95 0l1.95 3.8 4.3.3-3.4 2.8 1.1 4.1-3.95-2.4-3.95 2.4 1.1-4.1-3.4-2.8 4.3-.3zM73.85 0l1.95 3.8 4.3.3-3.4 2.8 1.1 4.1-3.95-2.4-3.95 2.4 1.1-4.1-3.4-2.8 4.3-.3z"/></svg><svg style="left:968.4px" width="82" height="12" viewBox="0 0 82 12"><path fill="#59a765" d="M6.25 0l1.95 3.8 4.3.3-3.4 2.8 1.1 4.1-3.95-2.4-3.95 2.4 1.1-4.1-3.4-2.8 4.3-.3zM23.15 0l1.95 3.8 4.3.3-3.4 2.8 1.1 4.1-3.95-2.4-3.95 2.4 1.1-4.1-3.4-2.8 4.3-.3zM40.05 0l1.95 3.8 4.3.3-3.4 2.8 1.1 4.1-3.95-2.4-3.95 2.4 1.1-4.1-3.4-2.8 4.3-.3zM56.95 0l1.95 3.8 4.3.3-3.4 2.8 1.1 4.1-3.95-2.4-3.95 2.4 1.1-4.1-3.4-2.8 4.3-.3z"/><path fill="#dcdcdc" d="M73.85 0l1.95 3.8 4.3.3-3.4 2.8 1.1 4.1-3.95-2.4-3.95 2.4 1.1-4.1-3.4-2.8 4.3-.3z"/></svg><svg style="left:1072.5px" width="82" height="12" viewBox="0 0 82 12"><path fill="#fbbf12" d="M6.25 0l1.95 3.8 4.3.3-3.4 2.8 1.1 4.1-3.95-2.4-3.95 2.4 1.1-4.1-3.4-2.8 4.3-.3zM23.15 0l1.95 3.8 4.3.3-3.4 2.8 1.1 4.1-3.95-2.4-3.95 2.4 1.1-4.1-3.4-2.8 4.3-.3zM40.05 0l1.95 3.8 4.3.3-3.4 2.8 1.1 4.1-3.95-2.4-3.95 2.4 1.1-4.1-3.4-2.8 4.3-.3zM56.95 0l1.95 3.8 4.3.3-3.4 2.8 1.1 4.1-3.95-2.4-3.95 2.4 1.1-4.1-3.4-2.8 4.3-.3zM73.85 0l1.95 3.8 4.3.3-3.4 2.8 1.1 4.1-3.95-2.4-3.95 2.4 1.1-4.1-3.4-2.8 4.3-.3z"/></svg><svg style="left:1211.5px" width="82" height="12" viewBox="0 0 82 12"><path fill="#53b7cf" d="M6.25 0l1.95 3.8 4.3.3-3.4 2.8 1.1 4.1-3.95-2.4-3.95 2.4 1.1-4.1-3.4-2.8 4.3-.3zM23.15 0l1.95 3.8 4.3.3-3.4 2.8 1.1 4.1-3.95-2.4-3.95 2.4 1.1-4.1-3.4-2.8 4.3-.3zM40.05 0l1.95 3.8 4.3.3-3.4 2.8 1.1 4.1-3.95-2.4-3.95 2.4 1.1-4.1-3.4-2.8 4.3-.3zM56.95 0l1.95 3.8 4.3.3-3.4 2.8 1.1 4.1-3.95-2.4-3.95 2.4 1.1-4.1-3.4-2.8 4.3-.3z"/><path fill="#dcdcdc" d="M73.85 0l1.95 3.8 4.3.3-3.4 2.8 1.1 4.1-3.95-2.4-3.95 2.4 1.1-4.1-3.4-2.8 4.3-.3z"/></svg><svg style="left:1316.2px" width="82" height="12" viewBox="0 0 82 12"><path fill="#ea7c30" d="M6.25 0l1.95 3.8 4.3.3-3.4 2.8 1.1 4.1-3.95-2.4-3.95 2.4 1.1-4.1-3.4-2.8 4.3-.3zM23.15 0l1.95 3.8 4.3.3-3.4 2.8 1.1 4.1-3.95-2.4-3.95 2.4 1.1-4.1-3.4-2.8 4.3-.3zM40.05 0l1.95 3.8 4.3.3-3.4 2.8 1.1 4.1-3.95-2.4-3.95 2.4 1.1-4.1-3.4-2.8 4.3-.3zM56.95 0l1.95 3.8 4.3.3-3.4 2.8 1.1 4.1-3.95-2.4-3.95 2.4 1.1-4.1-3.4-2.8 4.3-.3zM73.85 0l1.95 3.8 4.3.3-3.4 2.8 1.1 4.1-3.95-2.4-3.95 2.4 1.1-4.1-3.4-2.8 4.3-.3z"/></svg><span class="sc" style="right:13.8px">91%</span></div>
<div class="r" style="top:616.1px"><span class="n">13</span><span class="c1">CleanTech Solutions</span><span class="c2">Chris Taylor</span><span class="c3">Cleaning Services</span><svg style="left:603.1px" width="82" height="12" viewBox="0 0 82 12"><path fill="#cd9fd4" d="M6.25 0l1.95 3.8 4.3.3-3.4 2.8 1.1 4.1-3.95-2.4-3.95 2.4 1.1-4.1-3.4-2.8 4.3-.3zM23.15 0l1.95 3.8 4.3.3-3.4 2.8 1.1 4.1-3.95-2.4-3.95 2.4 1.1-4.1-3.4-2.8 4.3-.3zM40.05 0l1.95 3.8 4.3.3-3.4 2.8 1.1 4.1-3.95-2.4-3.95 2.4 1.1-4.1-3.4-2.8 4.3-.3z"/><path fill="#dcdcdc" d="M56.95 0l1.95 3.8 4.3.3-3.4 2.8 1.1 4.1-3.95-2.4-3.95 2.4 1.1-4.1-3.4-2.8 4.3-.3zM73.85 0l1.95 3.8 4.3.3-3.4 2.8 1.1 4.1-3.95-2.4-3.95 2.4 1.1-4.1-3.4-2.8 4.3-.3z"/></svg><svg style="left:713.1px" width="82" height="12" viewBox="0 0 82 12"><path fill="#4f82fc" d="M6.25 0l1.95 3.8 4.3.3-3.4 2.8 1.1 4.1-3.95-2.4-3.95 2.4 1.1-4.1-3.4-2.8 4.3-.3zM23.15 0l1.95 3.8 4.3.3-3.4 2.8 1.1 4.1-3.95-2.4-3.95 2.4 1.1-4.1-3.4-2.8 4.3-.3zM40.05 0l1.95 3.8 4.3.3-3.4 2.8 1.1 4.1-3.95-2.4-3.95 2.4 1.1-4.1-3.4-2.8 4.3-.3zM56.95 0l1.95 3.8 4.3.3-3.4 2.8 1.1 4.1-3.95-2.4-3.95 2.4 1.1-4.1-3.4-2.8 4.3-.3z"/><path fill="#dcdcdc" d="M73.85 0l1.95 3.8 4.3.3-3.4 2.8 1.1 4.1-3.95-2.4-3.95 2.4 1.1-4.1-3.4-2.8 4.3-.3z"/></svg><svg style="left:816.4px" width="82" height="12" viewBox="0 0 82 12"><path fill="#d53041" d="M6.25 0l1.95 3.8 4.3.3-3.4 2.8 1.1 4.1-3.95-2.4-3.95 2.4 1.1-4.1-3.4-2.8 4.3-.3zM23.15 0l1.95 3.8 4.3.3-3.4 2.8 1.1 4.1-3.95-2.4-3.95 2.4 1.1-4.1-3.4-2.8 4.3-.3zM40.05 0l1.95 3.8 4.3.3-3.4 2.8 1.1 4.1-3.95-2.4-3.95 2.4 1.1-4.1-3.4-2.8 4.3-.3z"/><path fill="#dcdcdc" d="M56.95 0l1.95 3.8 4.3.3-3.4 2.8 1.1 4.1-3.95-2.4-3.95 2.4 1.1-4.1-3.4-2.8 4.3-.3zM73.85 0l1.95 3.8 4.3.3-3.4 2.8 1.1 4.1-3.95-2.4-3.95 2.4 1.1-4.1-3.4-2.8 4.3-.3z"/></svg><svg style="left:968.4px" width="82" height="12" viewBox="0 0 82 12"><path fill="#59a765" d="M6.25 0l1.95 3.8 4.3.3-3.4 2.8 1.1 4.1-3.95-2.4-3.95 2.4 1.1-4.1-3.4-2.8 4.3-.3zM23.15 0l1.95 3.8 4.3.3-3.4 2.8 1.1 4.1-3.95-2.4-3.95 2.4 1.1-4.1-3.4-2.8 4.3-.3zM40.05 0l1.95 3.8 4.3.3-3.4 2.8 1.1 4.1-3.95-2.4-3.95 2.4 1.1-4.1-3.4-2.8 4.3-.3z"/><path fill="#dcdcdc" d="M56.95 0l1.95 3.8 4.3.3-3.4 2.8 1.1 4.1-3.95-2.4-3.95 2.4 1.1-4.1-3.4-2.8 4.3-.3zM73.85 0l1.95 3.8 4.3.3-3.4 2.8 1.1 4.1-3.95-2.4-3.95 2.4 1.1-4.1-3.4-2.8 4.3-.3z"/></svg><svg style="left:1072.5px" width="82" height="12" viewBox="0 0 82 12"><path fill="#fbbf12" d="M6.25 0l1.95 3.8 4.3.3-3.4 2.8 1.1 4.1-3.95-2.4-3.95 2.4 1.1-4.1-3.4-2.8 4.3-.3zM23.15 0l1.95 3.8 4.3.3-3.4 2.8 1.1 4.1-3.95-2.4-3.95 2.4 1.1-4.1-3.4-2.8 4.3-.3zM40.05 0l1.95 3.8 4.3.3-3.4 2.8 1.1 4.1-3.95-2.4-3.95 2.4 1.1-4.1-3.4-2.8 4.3-.3zM56.95 0l1.95 3.8 4.3.3-3.4 2.8 1.1 4.1-3.95-2.4-3.95 2.4 1.1-4.1-3.4-2.8 4.3-.3z"/><path fill="#dcdcdc" d="M73.85 0l1.95 3.8 4.3.3-3.4 2.8 1.1 4.1-3.95-2.4-3.95 2.4 1.1-4.1-3.4-2.8 4.3-.3z"/></svg><svg style="left:1211.5px" width="82" height="12" viewBox="0 0 82 12"><path fill="#53b7cf" d="M6.25 0l1.95 3.8 4.3.3-3.4 2.8 1.1 4.1-3.95-2.4-3.95 2.4 1.1-4.1-3.4-2.8 4.3-.3zM23.15 0l1.95 3.8 4.3.3-3.4 2.8 1.1 4.1-3.95-2.4-3.95 2.4 1.1-4.1-3.4-2.8 4.3-.3zM40.05 0l1.95 3.8 4.3.3-3.4 2.8 1.1 4.1-3.95-2.4-3.95 2.4 1.1-4.1-3.4-2.8 4.3-.3zM56.95 0l1.95 3.8 4.3.3-3.4 2.8 1.1 4.1-3.95-2.4-3.95 2.4 1.1-4.1-3.4-2.8 4.3-.3z"/><path fill="#dcdcdc" d="M73.85 0l1.95 3.8 4.3.3-3.4 2.8 1.1 4.1-3.95-2.4-3.95 2.4 1.1-4.1-3.4-2.8 4.3-.3z"/></svg><svg style="left:1316.2px" width="82" height="12" viewBox="0 0 82 12"><path fill="#ea7c30" d="M6.25 0l1.95 3.8 4.3.3-3.4 2.8 1.1 4.1-3.95-2.4-3.95 2.4 1.1-4.1-3.4-2.8 4.3-.3zM23.15 0l1.95 3.8 4.3.3-3.4 2.8 1.1 4.1-3.95-2.4-3.95 2.4 1.1-4.1-3.4-2.8 4.3-.3zM40.05 0l1.95 3.8 4.3.3-3.4 2.8 1.1 4.1-3.95-2.4-3.95 2.4 1.1-4.1-3.4-2.8 4.3-.3z"/><path fill="#dcdcdc" d="M56.95 0l1.95 3.8 4.3.3-3.4 2.8 1.1 4.1-3.95-2.4-3.95 2.4 1.1-4.1-3.4-2.8 4.3-.3zM73.85 0l1.95 3.8 4.3.3-3.4 2.8 1.1 4.1-3.95-2.4-3.95 2.4 1.1-4.1-3.4-2.8 4.3-.3z"/></svg><span class="sc" style="right:13.8px">69%</span></div>
<div class="r" style="top:652.3px"><span class="n">14</span><span class="c1">Global Foods Ltd</span><span class="c2">Anna Brown</span><span class="c3">Catering Services</span><svg style="left:603.1px" width="82" height="12" viewBox="0 0 82 12"><path fill="#cd9fd4" d="M6.25 0l1.95 3.8 4.3.3-3.4 2.8 1.1 4.1-3.95-2.4-3.95 2.4 1.1-4.1-3.4-2.8 4.3-.3zM23.15 0l1.95 3.8 4.3.3-3.4 2.8 1.1 4.1-3.95-2.4-3.95 2.4 1.1-4.1-3.4-2.8 4.3-.3zM40.05 0l1.95 3.8 4.3.3-3.4 2.8 1.1 4.1-3.95-2.4-3.95 2.4 1.1-4.1-3.4-2.8 4.3-.3zM56.95 0l1.95 3.8 4.3.3-3.4 2.8 1.1 4.1-3.95-2.4-3.95 2.4 1.1-4.1-3.4-2.8 4.3-.3z"/><path fill="#dcdcdc" d="M73.85 0l1.95 3.8 4.3.3-3.4 2.8 1.1 4.1-3.95-2.4-3.95 2.4 1.1-4.1-3.4-2.8 4.3-.3z"/></svg><svg style="left:713.1px" width="82" height="12" viewBox="0 0 82 12"><path fill="#4f82fc" d="M6.25 0l1.95 3.8 4.3.3-3.4 2.8 1.1 4.1-3.95-2.4-3.95 2.4 1.1-4.1-3.4-2.8 4.3-.3zM23.15 0l1.95 3.8 4.3.3-3.4 2.8 1.1 4.1-3.95-2.4-3.95 2.4 1.1-4.1-3.4-2.8 4.3-.3zM40.05 0l1.95 3.8 4.3.3-3.4 2.8 1.1 4.1-3.95-2.4-3.95 2.4 1.1-4.1-3.4-2.8 4.3-.3z"/><path fill="#dcdcdc" d="M56.95 0l1.95 3.8 4.3.3-3.4 2.8 1.1 4.1-3.95-2.4-3.95 2.4 1.1-4.1-3.4-2.8 4.3-.3zM73.85 0l1.95 3.8 4.3.3-3.4 2.8 1.1 4.1-3.95-2.4-3.95 2.4 1.1-4.1-3.4-2.8 4.3-.3z"/></svg><svg style="left:816.4px" width="82" height="12" viewBox="0 0 82 12"><path fill="#d53041" d="M6.25 0l1.95 3.8 4.3.3-3.4 2.8 1.1 4.1-3.95-2.4-3.95 2.4 1.1-4.1-3.4-2.8 4.3-.3zM23.15 0l1.95 3.8 4.3.3-3.4 2.8 1.1 4.1-3.95-2.4-3.95 2.4 1.1-4.1-3.4-2.8 4.3-.3zM40.05 0l1.95 3.8 4.3.3-3.4 2.8 1.1 4.1-3.95-2.4-3.95 2.4 1.1-4.1-3.4-2.8 4.3-.3zM56.95 0l1.95 3.8 4.3.3-3.4 2.8 1.1 4.1-3.95-2.4-3.95 2.4 1.1-4.1-3.4-2.8 4.3-.3z"/><path fill="#dcdcdc" d="M73.85 0l1.95 3.8 4.3.3-3.4 2.8 1.1 4.1-3.95-2.4-3.95 2.4 1.1-4.1-3.4-2.8 4.3-.3z"/></svg><svg style="left:968.4px" width="82" height="12" viewBox="0 0 82 12"><path fill="#59a765" d="M6.25 0l1.95 3.8 4.3.3-3.4 2.8 1.1 4.1-3.95-2.4-3.95 2.4 1.1-4.1-3.4-2.8 4.3-.3zM23.15 0l1.95 3.8 4.3.3-3.4 2.8 1.1 4.1-3.95-2.4-3.95 2.4 1.1-4.1-3.4-2.8 4.3-.3zM40.05 0l1.95 3.8 4.3.3-3.4 2.8 1.1 4.1-3.95-2.4-3.95 2.4 1.1-4.1-3.4-2.8 4.3-.3zM56.95 0l1.95 3.8 4.3.3-3.4 2.8 1.1 4.1-3.95-2.4-3.95 2.4 1.1-4.1-3.4-2.8 4.3-.3z"/><path fill="#dcdcdc" d="M73.85 0l1.95 3.8 4.3.3-3.4 2.8 1.1 4.1-3.95-2.4-3.95 2.4 1.1-4.1-3.4-2.8 4.3-.3z"/></svg><svg style="left:1072.5px" width="82" height="12" viewBox="0 0 82 12"><path fill="#fbbf12" d="M6.25 0l1.95 3.8 4.3.3-3.4 2.8 1.1 4.1-3.95-2.4-3.95 2.4 1.1-4.1-3.4-2.8 4.3-.3zM23.15 0l1.95 3.8 4.3.3-3.4 2.8 1.1 4.1-3.95-2.4-3.95 2.4 1.1-4.1-3.4-2.8 4.3-.3zM40.05 0l1.95 3.8 4.3.3-3.4 2.8 1.1 4.1-3.95-2.4-3.95 2.4 1.1-4.1-3.4-2.8 4.3-.3zM56.95 0l1.95 3.8 4.3.3-3.4 2.8 1.1 4.1-3.95-2.4-3.95 2.4 1.1-4.1-3.4-2.8 4.3-.3zM73.85 0l1.95 3.8 4.3.3-3.4 2.8 1.1 4.1-3.95-2.4-3.95 2.4 1.1-4.1-3.4-2.8 4.3-.3z"/></svg><svg style="left:1211.5px" width="82" height="12" viewBox="0 0 82 12"><path fill="#53b7cf" d="M6.25 0l1.95 3.8 4.3.3-3.4 2.8 1.1 4.1-3.95-2.4-3.95 2.4 1.1-4.1-3.4-2.8 4.3-.3zM23.15 0l1.95 3.8 4.3.3-3.4 2.8 1.1 4.1-3.95-2.4-3.95 2.4 1.1-4.1-3.4-2.8 4.3-.3zM40.05 0l1.95 3.8 4.3.3-3.4 2.8 1.1 4.1-3.95-2.4-3.95 2.4 1.1-4.1-3.4-2.8 4.3-.3zM56.95 0l1.95 3.8 4.3.3-3.4 2.8 1.1 4.1-3.95-2.4-3.95 2.4 1.1-4.1-3.4-2.8 4.3-.3z"/><path fill="#dcdcdc" d="M73.85 0l1.95 3.8 4.3.3-3.4 2.8 1.1 4.1-3.95-2.4-3.95 2.4 1.1-4.1-3.4-2.8 4.3-.3z"/></svg><svg style="left:1316.2px" width="82" height="12" viewBox="0 0 82 12"><path fill="#ea7c30" d="M6.25 0l1.95 3.8 4.3.3-3.4 2.8 1.1 4.1-3.95-2.4-3.95 2.4 1.1-4.1-3.4-2.8 4.3-.3zM23.15 0l1.95 3.8 4.3.3-3.4 2.8 1.1 4.1-3.95-2.4-3.95 2.4 1.1-4.1-3.4-2.8 4.3-.3zM40.05 0l1.95 3.8 4.3.3-3.4 2.8 1.1 4.1-3.95-2.4-3.95 2.4 1.1-4.1-3.4-2.8 4.3-.3zM56.95 0l1.95 3.8 4.3.3-3.4 2.8 1.1 4.1-3.95-2.4-3.95 2.4 1.1-4.1-3.4-2.8 4.3-.3z"/><path fill="#dcdcdc" d="M73.85 0l1.95 3.8 4.3.3-3.4 2.8 1.1 4.1-3.95-2.4-3.95 2.4 1.1-4.1-3.4-2.8 4.3-.3z"/></svg><span class="sc" style="right:13.8px">80%</span></div>
<div class="r" style="top:688.5px"><span class="n">15</span><span class="c1">SecureIT Pty Ltd</span><span class="c2">Jack White</span><span class="c3">IT Security Services</span><svg style="left:603.1px" width="82" height="12" viewBox="0 0 82 12"><path fill="#cd9fd4" d="M6.25 0l1.95 3.8 4.3.3-3.4 2.8 1.1 4.1-3.95-2.4-3.95 2.4 1.1-4.1-3.4-2.8 4.3-.3zM23.15 0l1.95 3.8 4.3.3-3.4 2.8 1.1 4.1-3.95-2.4-3.95 2.4 1.1-4.1-3.4-2.8 4.3-.3zM40.05 0l1.95 3.8 4.3.3-3.4 2.8 1.1 4.1-3.95-2.4-3.95 2.4 1.1-4.1-3.4-2.8 4.3-.3zM56.95 0l1.95 3.8 4.3.3-3.4 2.8 1.1 4.1-3.95-2.4-3.95 2.4 1.1-4.1-3.4-2.8 4.3-.3zM73.85 0l1.95 3.8 4.3.3-3.4 2.8 1.1 4.1-3.95-2.4-3.95 2.4 1.1-4.1-3.4-2.8 4.3-.3z"/></svg><svg style="left:713.1px" width="82" height="12" viewBox="0 0 82 12"><path fill="#4f82fc" d="M6.25 0l1.95 3.8 4.3.3-3.4 2.8 1.1 4.1-3.95-2.4-3.95 2.4 1.1-4.1-3.4-2.8 4.3-.3zM23.15 0l1.95 3.8 4.3.3-3.4 2.8 1.1 4.1-3.95-2.4-3.95 2.4 1.1-4.1-3.4-2.8 4.3-.3zM40.05 0l1.95 3.8 4.3.3-3.4 2.8 1.1 4.1-3.95-2.4-3.95 2.4 1.1-4.1-3.4-2.8 4.3-.3zM56.95 0l1.95 3.8 4.3.3-3.4 2.8 1.1 4.1-3.95-2.4-3.95 2.4 1.1-4.1-3.4-2.8 4.3-.3zM73.85 0l1.95 3.8 4.3.3-3.4 2.8 1.1 4.1-3.95-2.4-3.95 2.4 1.1-4.1-3.4-2.8 4.3-.3z"/></svg><svg style="left:816.4px" width="82" height="12" viewBox="0 0 82 12"><path fill="#d53041" d="M6.25 0l1.95 3.8 4.3.3-3.4 2.8 1.1 4.1-3.95-2.4-3.95 2.4 1.1-4.1-3.4-2.8 4.3-.3zM23.15 0l1.95 3.8 4.3.3-3.4 2.8 1.1 4.1-3.95-2.4-3.95 2.4 1.1-4.1-3.4-2.8 4.3-.3zM40.05 0l1.95 3.8 4.3.3-3.4 2.8 1.1 4.1-3.95-2.4-3.95 2.4 1.1-4.1-3.4-2.8 4.3-.3zM56.95 0l1.95 3.8 4.3.3-3.4 2.8 1.1 4.1-3.95-2.4-3.95 2.4 1.1-4.1-3.4-2.8 4.3-.3zM73.85 0l1.95 3.8 4.3.3-3.4 2.8 1.1 4.1-3.95-2.4-3.95 2.4 1.1-4.1-3.4-2.8 4.3-.3z"/></svg><svg style="left:968.4px" width="82" height="12" viewBox="0 0 82 12"><path fill="#59a765" d="M6.25 0l1.95 3.8 4.3.3-3.4 2.8 1.1 4.1-3.95-2.4-3.95 2.4 1.1-4.1-3.4-2.8 4.3-.3zM23.15 0l1.95 3.8 4.3.3-3.4 2.8 1.1 4.1-3.95-2.4-3.95 2.4 1.1-4.1-3.4-2.8 4.3-.3zM40.05 0l1.95 3.8 4.3.3-3.4 2.8 1.1 4.1-3.95-2.4-3.95 2.4 1.1-4.1-3.4-2.8 4.3-.3zM56.95 0l1.95 3.8 4.3.3-3.4 2.8 1.1 4.1-3.95-2.4-3.95 2.4 1.1-4.1-3.4-2.8 4.3-.3z"/><path fill="#dcdcdc" d="M73.85 0l1.95 3.8 4.3.3-3.4 2.8 1.1 4.1-3.95-2.4-3.95 2.4 1.1-4.1-3.4-2.8 4.3-.3z"/></svg><svg style="left:1072.5px" width="82" height="12" viewBox="0 0 82 12"><path fill="#fbbf12" d="M6.25 0l1.95 3.8 4.3.3-3.4 2.8 1.1 4.1-3.95-2.4-3.95 2.4 1.1-4.1-3.4-2.8 4.3-.3zM23.15 0l1.95 3.8 4.3.3-3.4 2.8 1.1 4.1-3.95-2.4-3.95 2.4 1.1-4.1-3.4-2.8 4.3-.3zM40.05 0l1.95 3.8 4.3.3-3.4 2.8 1.1 4.1-3.95-2.4-3.95 2.4 1.1-4.1-3.4-2.8 4.3-.3zM56.95 0l1.95 3.8 4.3.3-3.4 2.8 1.1 4.1-3.95-2.4-3.95 2.4 1.1-4.1-3.4-2.8 4.3-.3zM73.85 0l1.95 3.8 4.3.3-3.4 2.8 1.1 4.1-3.95-2.4-3.95 2.4 1.1-4.1-3.4-2.8 4.3-.3z"/></svg><svg style="left:1211.5px" width="82" height="12" viewBox="0 0 82 12"><path fill="#53b7cf" d="M6.25 0l1.95 3.8 4.3.3-3.4 2.8 1.1 4.1-3.95-2.4-3.95 2.4 1.1-4.1-3.4-2.8 4.3-.3zM23.15 0l1.95 3.8 4.3.3-3.4 2.8 1.1 4.1-3.95-2.4-3.95 2.4 1.1-4.1-3.4-2.8 4.3-.3zM40.05 0l1.95 3.8 4.3.3-3.4 2.8 1.1 4.1-3.95-2.4-3.95 2.4 1.1-4.1-3.4-2.8 4.3-.3z"/><path fill="#dcdcdc" d="M56.95 0l1.95 3.8 4.3.3-3.4 2.8 1.1 4.1-3.95-2.4-3.95 2.4 1.1-4.1-3.4-2.8 4.3-.3zM73.85 0l1.95 3.8 4.3.3-3.4 2.8 1.1 4.1-3.95-2.4-3.95 2.4 1.1-4.1-3.4-2.8 4.3-.3z"/></svg><svg style="left:1316.2px" width="82" height="12" viewBox="0 0 82 12"><path fill="#ea7c30" d="M6.25 0l1.95 3.8 4.3.3-3.4 2.8 1.1 4.1-3.95-2.4-3.95 2.4 1.1-4.1-3.4-2.8 4.3-.3zM23.15 0l1.95 3.8 4.3.3-3.4 2.8 1.1 4.1-3.95-2.4-3.95 2.4 1.1-4.1-3.4-2.8 4.3-.3zM40.05 0l1.95 3.8 4.3.3-3.4 2.8 1.1 4.1-3.95-2.4-3.95 2.4 1.1-4.1-3.4-2.8 4.3-.3zM56.95 0l1.95 3.8 4.3.3-3.4 2.8 1.1 4.1-3.95-2.4-3.95 2.4 1.1-4.1-3.4-2.8 4.3-.3zM73.85 0l1.95 3.8 4.3.3-3.4 2.8 1.1 4.1-3.95-2.4-3.95 2.4 1.1-4.1-3.4-2.8 4.3-.3z"/></svg><span class="sc" style="right:13.8px">91%</span></div>
<div class="r" style="top:724.7px"><span class="n">16</span><span class="c1">PureWater Solutions</span><span class="c2">Paul Harris</span><span class="c3">Water Filtration Systems</span><svg style="left:603.1px" width="82" height="12" viewBox="0 0 82 12"><path fill="#cd9fd4" d="M6.25 0l1.95 3.8 4.3.3-3.4 2.8 1.1 4.1-3.95-2.4-3.95 2.4 1.1-4.1-3.4-2.8 4.3-.3zM23.15 0l1.95 3.8 4.3.3-3.4 2.8 1.1 4.1-3.95-2.4-3.95 2.4 1.1-4.1-3.4-2.8 4.3-.3zM40.05 0l1.95 3.8 4.3.3-3.4 2.8 1.1 4.1-3.95-2.4-3.95 2.4 1.1-4.1-3.4-2.8 4.3-.3zM56.95 0l1.95 3.8 4.3.3-3.4 2.8 1.1 4.1-3.95-2.4-3.95 2.4 1.1-4.1-3.4-2.8 4.3-.3z"/><path fill="#dcdcdc" d="M73.85 0l1.95 3.8 4.3.3-3.4 2.8 1.1 4.1-3.95-2.4-3.95 2.4 1.1-4.1-3.4-2.8 4.3-.3z"/></svg><svg style="left:713.1px" width="82" height="12" viewBox="0 0 82 12"><path fill="#4f82fc" d="M6.25 0l1.95 3.8 4.3.3-3.4 2.8 1.1 4.1-3.95-2.4-3.95 2.4 1.1-4.1-3.4-2.8 4.3-.3zM23.15 0l1.95 3.8 4.3.3-3.4 2.8 1.1 4.1-3.95-2.4-3.95 2.4 1.1-4.1-3.4-2.8 4.3-.3zM40.05 0l1.95 3.8 4.3.3-3.4 2.8 1.1 4.1-3.95-2.4-3.95 2.4 1.1-4.1-3.4-2.8 4.3-.3zM56.95 0l1.95 3.8 4.3.3-3.4 2.8 1.1 4.1-3.95-2.4-3.95 2.4 1.1-4.1-3.4-2.8 4.3-.3z"/><path fill="#dcdcdc" d="M73.85 0l1.95 3.8 4.3.3-3.4 2.8 1.1 4.1-3.95-2.4-3.95 2.4 1.1-4.1-3.4-2.8 4.3-.3z"/></svg><svg style="left:816.4px" width="82" height="12" viewBox="0 0 82 12"><path fill="#d53041" d="M6.25 0l1.95 3.8 4.3.3-3.4 2.8 1.1 4.1-3.95-2.4-3.95 2.4 1.1-4.1-3.4-2.8 4.3-.3zM23.15 0l1.95 3.8 4.3.3-3.4 2.8 1.1 4.1-3.95-2.4-3.95 2.4 1.1-4.1-3.4-2.8 4.3-.3zM40.05 0l1.95 3.8 4.3.3-3.4 2.8 1.1 4.1-3.95-2.4-3.95 2.4 1.1-4.1-3.4-2.8 4.3-.3zM56.95 0l1.95 3.8 4.3.3-3.4 2.8 1.1 4.1-3.95-2.4-3.95 2.4 1.1-4.1-3.4-2.8 4.3-.3z"/><path fill="#dcdcdc" d="M73.85 0l1.95 3.8 4.3.3-3.4 2.8 1.1 4.1-3.95-2.4-3.95 2.4 1.1-4.1-3.4-2.8 4.3-.3z"/></svg><svg style="left:968.4px" width="82" height="12" viewBox="0 0 82 12"><path fill="#59a765" d="M6.25 0l1.95 3.8 4.3.3-3.4 2.8 1.1 4.1-3.95-2.4-3.95 2.4 1.1-4.1-3.4-2.8 4.3-.3zM23.15 0l1.95 3.8 4.3.3-3.4 2.8 1.1 4.1-3.95-2.4-3.95 2.4 1.1-4.1-3.4-2.8 4.3-.3zM40.05 0l1.95 3.8 4.3.3-3.4 2.8 1.1 4.1-3.95-2.4-3.95 2.4 1.1-4.1-3.4-2.8 4.3-.3zM56.95 0l1.95 3.8 4.3.3-3.4 2.8 1.1 4.1-3.95-2.4-3.95 2.4 1.1-4.1-3.4-2.8 4.3-.3zM73.85 0l1.95 3.8 4.3.3-3.4 2.8 1.1 4.1-3.95-2.4-3.95 2.4 1.1-4.1-3.4-2.8 4.3-.3z"/></svg><svg style="left:1072.5px" width="82" height="12" viewBox="0 0 82 12"><path fill="#fbbf12" d="M6.25 0l1.95 3.8 4.3.3-3.4 2.8 1.1 4.1-3.95-2.4-3.95 2.4 1.1-4.1-3.4-2.8 4.3-.3zM23.15 0l1.95 3.8 4.3.3-3.4 2.8 1.1 4.1-3.95-2.4-3.95 2.4 1.1-4.1-3.4-2.8 4.3-.3zM40.05 0l1.95 3.8 4.3.3-3.4 2.8 1.1 4.1-3.95-2.4-3.95 2.4 1.1-4.1-3.4-2.8 4.3-.3zM56.95 0l1.95 3.8 4.3.3-3.4 2.8 1.1 4.1-3.95-2.4-3.95 2.4 1.1-4.1-3.4-2.8 4.3-.3z"/><path fill="#dcdcdc" d="M73.85 0l1.95 3.8 4.3.3-3.4 2.8 1.1 4.1-3.95-2.4-3.95 2.4 1.1-4.1-3.4-2.8 4.3-.3z"/></svg><svg style="left:1211.5px" width="82" height="12" viewBox="0 0 82 12"><path fill="#53b7cf" d="M6.25 0l1.95 3.8 4.3.3-3.4 2.8 1.1 4.1-3.95-2.4-3.95 2.4 1.1-4.1-3.4-2.8 4.3-.3zM23.15 0l1.95 3.8 4.3.3-3.4 2.8 1.1 4.1-3.95-2.4-3.95 2.4 1.1-4.1-3.4-2.8 4.3-.3zM40.05 0l1.95 3.8 4.3.3-3.4 2.8 1.1 4.1-3.95-2.4-3.95 2.4 1.1-4.1-3.4-2.8 4.3-.3zM56.95 0l1.95 3.8 4.3.3-3.4 2.8 1.1 4.1-3.95-2.4-3.95 2.4 1.1-4.1-3.4-2.8 4.3-.3z"/><path fill="#dcdcdc" d="M73.85 0l1.95 3.8 4.3.3-3.4 2.8 1.1 4.1-3.95-2.4-3.95 2.4 1.1-4.1-3.4-2.8 4.3-.3z"/></svg><svg style="left:1316.2px" width="82" height="12" viewBox="0 0 82 12"><path fill="#ea7c30" d="M6.25 0l1.95 3.8 4.3.3-3.4 2.8 1.1 4.1-3.95-2.4-3.95 2.4 1.1-4.1-3.4-2.8 4.3-.3zM23.15 0l1.95 3.8 4.3.3-3.4 2.8 1.1 4.1-3.95-2.4-3.95 2.4 1.1-4.1-3.4-2.8 4.3-.3zM40.05 0l1.95 3.8 4.3.3-3.4 2.8 1.1 4.1-3.95-2.4-3.95 2.4 1.1-4.1-3.4-2.8 4.3-.3zM56.95 0l1.95 3.8 4.3.3-3.4 2.8 1.1 4.1-3.95-2.4-3.95 2.4 1.1-4.1-3.4-2.8 4.3-.3z"/><path fill="#dcdcdc" d="M73.85 0l1.95 3.8 4.3.3-3.4 2.8 1.1 4.1-3.95-2.4-3.95 2.4 1.1-4.1-3.4-2.8 4.3-.3z"/></svg><span class="sc" style="right:13.8px">83%</span></div>
<div class="r" style="top:760.9px"><span class="n">17</span><span class="c1">BlueSky Marketing</span><span class="c2">Laura Brown</span><span class="c3">Marketing Services</span><svg style="left:603.1px" width="82" height="12" viewBox="0 0 82 12"><path fill="#cd9fd4" d="M6.25 0l1.95 3.8 4.3.3-3.4 2.8 1.1 4.1-3.95-2.4-3.95 2.4 1.1-4.1-3.4-2.8 4.3-.3zM23.15 0l1.95 3.8 4.3.3-3.4 2.8 1.1 4.1-3.95-2.4-3.95 2.4 1.1-4.1-3.4-2.8 4.3-.3zM40.05 0l1.95 3.8 4.3.3-3.4 2.8 1.1 4.1-3.95-2.4-3.95 2.4 1.1-4.1-3.4-2.8 4.3-.3zM56.95 0l1.95 3.8 4.3.3-3.4 2.8 1.1 4.1-3.95-2.4-3.95 2.4 1.1-4.1-3.4-2.8 4.3-.3z"/><path fill="#dcdcdc" d="M73.85 0l1.95 3.8 4.3.3-3.4 2.8 1.1 4.1-3.95-2.4-3.95 2.4 1.1-4.1-3.4-2.8 4.3-.3z"/></svg><svg style="left:713.1px" width="82" height="12" viewBox="0 0 82 12"><path fill="#4f82fc" d="M6.25 0l1.95 3.8 4.3.3-3.4 2.8 1.1 4.1-3.95-2.4-3.95 2.4 1.1-4.1-3.4-2.8 4.3-.3zM23.15 0l1.95 3.8 4.3.3-3.4 2.8 1.1 4.1-3.95-2.4-3.95 2.4 1.1-4.1-3.4-2.8 4.3-.3zM40.05 0l1.95 3.8 4.3.3-3.4 2.8 1.1 4.1-3.95-2.4-3.95 2.4 1.1-4.1-3.4-2.8 4.3-.3z"/><path fill="#dcdcdc" d="M56.95 0l1.95 3.8 4.3.3-3.4 2.8 1.1 4.1-3.95-2.4-3.95 2.4 1.1-4.1-3.4-2.8 4.3-.3zM73.85 0l1.95 3.8 4.3.3-3.4 2.8 1.1 4.1-3.95-2.4-3.95 2.4 1.1-4.1-3.4-2.8 4.3-.3z"/></svg><svg style="left:816.4px" width="82" height="12" viewBox="0 0 82 12"><path fill="#d53041" d="M6.25 0l1.95 3.8 4.3.3-3.4 2.8 1.1 4.1-3.95-2.4-3.95 2.4 1.1-4.1-3.4-2.8 4.3-.3zM23.15 0l1.95 3.8 4.3.3-3.4 2.8 1.1 4.1-3.95-2.4-3.95 2.4 1.1-4.1-3.4-2.8 4.3-.3zM40.05 0l1.95 3.8 4.3.3-3.4 2.8 1.1 4.1-3.95-2.4-3.95 2.4 1.1-4.1-3.4-2.8 4.3-.3zM56.95 0l1.95 3.8 4.3.3-3.4 2.8 1.1 4.1-3.95-2.4-3.95 2.4 1.1-4.1-3.4-2.8 4.3-.3z"/><path fill="#dcdcdc" d="M73.85 0l1.95 3.8 4.3.3-3.4 2.8 1.1 4.1-3.95-2.4-3.95 2.4 1.1-4.1-3.4-2.8 4.3-.3z"/></svg><svg style="left:968.4px" width="82" height="12" viewBox="0 0 82 12"><path fill="#59a765" d="M6.25 0l1.95 3.8 4.3.3-3.4 2.8 1.1 4.1-3.95-2.4-3.95 2.4 1.1-4.1-3.4-2.8 4.3-.3zM23.15 0l1.95 3.8 4.3.3-3.4 2.8 1.1 4.1-3.95-2.4-3.95 2.4 1.1-4.1-3.4-2.8 4.3-.3zM40.05 0l1.95 3.8 4.3.3-3.4 2.8 1.1 4.1-3.95-2.4-3.95 2.4 1.1-4.1-3.4-2.8 4.3-.3zM56.95 0l1.95 3.8 4.3.3-3.4 2.8 1.1 4.1-3.95-2.4-3.95 2.4 1.1-4.1-3.4-2.8 4.3-.3zM73.85 0l1.95 3.8 4.3.3-3.4 2.8 1.1 4.1-3.95-2.4-3.95 2.4 1.1-4.1-3.4-2.8 4.3-.3z"/></svg><svg style="left:1072.5px" width="82" height="12" viewBox="0 0 82 12"><path fill="#fbbf12" d="M6.25 0l1.95 3.8 4.3.3-3.4 2.8 1.1 4.1-3.95-2.4-3.95 2.4 1.1-4.1-3.4-2.8 4.3-.3zM23.15 0l1.95 3.8 4.3.3-3.4 2.8 1.1 4.1-3.95-2.4-3.95 2.4 1.1-4.1-3.4-2.8 4.3-.3zM40.05 0l1.95 3.8 4.3.3-3.4 2.8 1.1 4.1-3.95-2.4-3.95 2.4 1.1-4.1-3.4-2.8 4.3-.3zM56.95 0l1.95 3.8 4.3.3-3.4 2.8 1.1 4.1-3.95-2.4-3.95 2.4 1.1-4.1-3.4-2.8 4.3-.3z"/><path fill="#dcdcdc" d="M73.85 0l1.95 3.8 4.3.3-3.4 2.8 1.1 4.1-3.95-2.4-3.95 2.4 1.1-4.1-3.4-2.8 4.3-.3z"/></svg><svg style="left:1211.5px" width="82" height="12" viewBox="0 0 82 12"><path fill="#53b7cf" d="M6.25 0l1.95 3.8 4.3.3-3.4 2.8 1.1 4.1-3.95-2.4-3.95 2.4 1.1-4.1-3.4-2.8 4.3-.3zM23.15 0l1.95 3.8 4.3.3-3.4 2.8 1.1 4.1-3.95-2.4-3.95 2.4 1.1-4.1-3.4-2.8 4.3-.3zM40.05 0l1.95 3.8 4.3.3-3.4 2.8 1.1 4.1-3.95-2.4-3.95 2.4 1.1-4.1-3.4-2.8 4.3-.3z"/><path fill="#dcdcdc" d="M56.95 0l1.95 3.8 4.3.3-3.4 2.8 1.1 4.1-3.95-2.4-3.95 2.4 1.1-4.1-3.4-2.8 4.3-.3zM73.85 0l1.95 3.8 4.3.3-3.4 2.8 1.1 4.1-3.95-2.4-3.95 2.4 1.1-4.1-3.4-2.8 4.3-.3z"/></svg><svg style="left:1316.2px" width="82" height="12" viewBox="0 0 82 12"><path fill="#ea7c30" d="M6.25 0l1.95 3.8 4.3.3-3.4 2.8 1.1 4.1-3.95-2.4-3.95 2.4 1.1-4.1-3.4-2.8 4.3-.3zM23.15 0l1.95 3.8 4.3.3-3.4 2.8 1.1 4.1-3.95-2.4-3.95 2.4 1.1-4.1-3.4-2.8 4.3-.3zM40.05 0l1.95 3.8 4.3.3-3.4 2.8 1.1 4.1-3.95-2.4-3.95 2.4 1.1-4.1-3.4-2.8 4.3-.3zM56.95 0l1.95 3.8 4.3.3-3.4 2.8 1.1 4.1-3.95-2.4-3.95 2.4 1.1-4.1-3.4-2.8 4.3-.3z"/><path fill="#dcdcdc" d="M73.85 0l1.95 3.8 4.3.3-3.4 2.8 1.1 4.1-3.95-2.4-3.95 2.4 1.1-4.1-3.4-2.8 4.3-.3z"/></svg><span class="sc" style="right:13.8px">77%</span></div>
<div class="r" style="top:797.1px"><span class="n">18</span><span class="c1">Alpha Engineering</span><span class="c2">Steven King</span><span class="c3">Engineering Consulting</span><svg style="left:603.1px" width="82" height="12" viewBox="0 0 82 12"><path fill="#cd9fd4" d="M6.25 0l1.95 3.8 4.3.3-3.4 2.8 1.1 4.1-3.95-2.4-3.95 2.4 1.1-4.1-3.4-2.8 4.3-.3zM23.15 0l1.95 3.8 4.3.3-3.4 2.8 1.1 4.1-3.95-2.4-3.95 2.4 1.1-4.1-3.4-2.8 4.3-.3zM40.05 0l1.95 3.8 4.3.3-3.4 2.8 1.1 4.1-3.95-2.4-3.95 2.4 1.1-4.1-3.4-2.8 4.3-.3zM56.95 0l1.95 3.8 4.3.3-3.4 2.8 1.1 4.1-3.95-2.4-3.95 2.4 1.1-4.1-3.4-2.8 4.3-.3zM73.85 0l1.95 3.8 4.3.3-3.4 2.8 1.1 4.1-3.95-2.4-3.95 2.4 1.1-4.1-3.4-2.8 4.3-.3z"/></svg><svg style="left:713.1px" width="82" height="12" viewBox="0 0 82 12"><path fill="#4f82fc" d="M6.25 0l1.95 3.8 4.3.3-3.4 2.8 1.1 4.1-3.95-2.4-3.95 2.4 1.1-4.1-3.4-2.8 4.3-.3zM23.15 0l1.95 3.8 4.3.3-3.4 2.8 1.1 4.1-3.95-2.4-3.95 2.4 1.1-4.1-3.4-2.8 4.3-.3zM40.05 0l1.95 3.8 4.3.3-3.4 2.8 1.1 4.1-3.95-2.4-3.95 2.4 1.1-4.1-3.4-2.8 4.3-.3zM56.95 0l1.95 3.8 4.3.3-3.4 2.8 1.1 4.1-3.95-2.4-3.95 2.4 1.1-4.1-3.4-2.8 4.3-.3zM73.85 0l1.95 3.8 4.3.3-3.4 2.8 1.1 4.1-3.95-2.4-3.95 2.4 1.1-4.1-3.4-2.8 4.3-.3z"/></svg><svg style="left:816.4px" width="82" height="12" viewBox="0 0 82 12"><path fill="#d53041" d="M6.25 0l1.95 3.8 4.3.3-3.4 2.8 1.1 4.1-3.95-2.4-3.95 2.4 1.1-4.1-3.4-2.8 4.3-.3zM23.15 0l1.95 3.8 4.3.3-3.4 2.8 1.1 4.1-3.95-2.4-3.95 2.4 1.1-4.1-3.4-2.8 4.3-.3zM40.05 0l1.95 3.8 4.3.3-3.4 2.8 1.1 4.1-3.95-2.4-3.95 2.4 1.1-4.1-3.4-2.8 4.3-.3zM56.95 0l1.95 3.8 4.3.3-3.4 2.8 1.1 4.1-3.95-2.4-3.95 2.4 1.1-4.1-3.4-2.8 4.3-.3zM73.85 0l1.95 3.8 4.3.3-3.4 2.8 1.1 4.1-3.95-2.4-3.95 2.4 1.1-4.1-3.4-2.8 4.3-.3z"/></svg><svg style="left:968.4px" width="82" height="12" viewBox="0 0 82 12"><path fill="#59a765" d="M6.25 0l1.95 3.8 4.3.3-3.4 2.8 1.1 4.1-3.95-2.4-3.95 2.4 1.1-4.1-3.4-2.8 4.3-.3zM23.15 0l1.95 3.8 4.3.3-3.4 2.8 1.1 4.1-3.95-2.4-3.95 2.4 1.1-4.1-3.4-2.8 4.3-.3zM40.05 0l1.95 3.8 4.3.3-3.4 2.8 1.1 4.1-3.95-2.4-3.95 2.4 1.1-4.1-3.4-2.8 4.3-.3zM56.95 0l1.95 3.8 4.3.3-3.4 2.8 1.1 4.1-3.95-2.4-3.95 2.4 1.1-4.1-3.4-2.8 4.3-.3z"/><path fill="#dcdcdc" d="M73.85 0l1.95 3.8 4.3.3-3.4 2.8 1.1 4.1-3.95-2.4-3.95 2.4 1.1-4.1-3.4-2.8 4.3-.3z"/></svg><svg style="left:1072.5px" width="82" height="12" viewBox="0 0 82 12"><path fill="#fbbf12" d="M6.25 0l1.95 3.8 4.3.3-3.4 2.8 1.1 4.1-3.95-2.4-3.95 2.4 1.1-4.1-3.4-2.8 4.3-.3zM23.15 0l1.95 3.8 4.3.3-3.4 2.8 1.1 4.1-3.95-2.4-3.95 2.4 1.1-4.1-3.4-2.8 4.3-.3zM40.05 0l1.95 3.8 4.3.3-3.4 2.8 1.1 4.1-3.95-2.4-3.95 2.4 1.1-4.1-3.4-2.8 4.3-.3zM56.95 0l1.95 3.8 4.3.3-3.4 2.8 1.1 4.1-3.95-2.4-3.95 2.4 1.1-4.1-3.4-2.8 4.3-.3zM73.85 0l1.95 3.8 4.3.3-3.4 2.8 1.1 4.1-3.95-2.4-3.95 2.4 1.1-4.1-3.4-2.8 4.3-.3z"/></svg><svg style="left:1211.5px" width="82" height="12" viewBox="0 0 82 12"><path fill="#53b7cf" d="M6.25 0l1.95 3.8 4.3.3-3.4 2.8 1.1 4.1-3.95-2.4-3.95 2.4 1.1-4.1-3.4-2.8 4.3-.3zM23.15 0l1.95 3.8 4.3.3-3.4 2.8 1.1 4.1-3.95-2.4-3.95 2.4 1.1-4.1-3.4-2.8 4.3-.3zM40.05 0l1.95 3.8 4.3.3-3.4 2.8 1.1 4.1-3.95-2.4-3.95 2.4 1.1-4.1-3.4-2.8 4.3-.3zM56.95 0l1.95 3.8 4.3.3-3.4 2.8 1.1 4.1-3.95-2.4-3.95 2.4 1.1-4.1-3.4-2.8 4.3-.3z"/><path fill="#dcdcdc" d="M73.85 0l1.95 3.8 4.3.3-3.4 2.8 1.1 4.1-3.95-2.4-3.95 2.4 1.1-4.1-3.4-2.8 4.3-.3z"/></svg><svg style="left:1316.2px" width="82" height="12" viewBox="0 0 82 12"><path fill="#ea7c30" d="M6.25 0l1.95 3.8 4.3.3-3.4 2.8 1.1 4.1-3.95-2.4-3.95 2.4 1.1-4.1-3.4-2.8 4.3-.3zM23.15 0l1.95 3.8 4.3.3-3.4 2.8 1.1 4.1-3.95-2.4-3.95 2.4 1.1-4.1-3.4-2.8 4.3-.3zM40.05 0l1.95 3.8 4.3.3-3.4 2.8 1.1 4.1-3.95-2.4-3.95 2.4 1.1-4.1-3.4-2.8 4.3-.3zM56.95 0l1.95 3.8 4.3.3-3.4 2.8 1.1 4.1-3.95-2.4-3.95 2.4 1.1-4.1-3.4-2.8 4.3-.3zM73.85 0l1.95 3.8 4.3.3-3.4 2.8 1.1 4.1-3.95-2.4-3.95 2.4 1.1-4.1-3.4-2.8 4.3-.3z"/></svg><span class="sc" style="right:13.8px">94%</span></div>
<div class="r" style="top:833.3px"><span class="n">19</span><span class="c1">FreshFarm Produce</span><span class="c2">Karen White</span><span class="c3">Organic Produce Supply</span><svg style="left:603.1px" width="82" height="12" viewBox="0 0 82 12"><path fill="#cd9fd4" d="M6.25 0l1.95 3.8 4.3.3-3.4 2.8 1.1 4.1-3.95-2.4-3.95 2.4 1.1-4.1-3.4-2.8 4.3-.3zM23.15 0l1.95 3.8 4.3.3-3.4 2.8 1.1 4.1-3.95-2.4-3.95 2.4 1.1-4.1-3.4-2.8 4.3-.3zM40.05 0l1.95 3.8 4.3.3-3.4 2.8 1.1 4.1-3.95-2.4-3.95 2.4 1.1-4.1-3.4-2.8 4.3-.3z"/><path fill="#dcdcdc" d="M56.95 0l1.95 3.8 4.3.3-3.4 2.8 1.1 4.1-3.95-2.4-3.95 2.4 1.1-4.1-3.4-2.8 4.3-.3zM73.85 0l1.95 3.8 4.3.3-3.4 2.8 1.1 4.1-3.95-2.4-3.95 2.4 1.1-4.1-3.4-2.8 4.3-.3z"/></svg><svg style="left:713.1px" width="82" height="12" viewBox="0 0 82 12"><path fill="#4f82fc" d="M6.25 0l1.95 3.8 4.3.3-3.4 2.8 1.1 4.1-3.95-2.4-3.95 2.4 1.1-4.1-3.4-2.8 4.3-.3zM23.15 0l1.95 3.8 4.3.3-3.4 2.8 1.1 4.1-3.95-2.4-3.95 2.4 1.1-4.1-3.4-2.8 4.3-.3zM40.05 0l1.95 3.8 4.3.3-3.4 2.8 1.1 4.1-3.95-2.4-3.95 2.4 1.1-4.1-3.4-2.8 4.3-.3zM56.95 0l1.95 3.8 4.3.3-3.4 2.8 1.1 4.1-3.95-2.4-3.95 2.4 1.1-4.1-3.4-2.8 4.3-.3z"/><path fill="#dcdcdc" d="M73.85 0l1.95 3.8 4.3.3-3.4 2.8 1.1 4.1-3.95-2.4-3.95 2.4 1.1-4.1-3.4-2.8 4.3-.3z"/></svg><svg style="left:816.4px" width="82" height="12" viewBox="0 0 82 12"><path fill="#d53041" d="M6.25 0l1.95 3.8 4.3.3-3.4 2.8 1.1 4.1-3.95-2.4-3.95 2.4 1.1-4.1-3.4-2.8 4.3-.3zM23.15 0l1.95 3.8 4.3.3-3.4 2.8 1.1 4.1-3.95-2.4-3.95 2.4 1.1-4.1-3.4-2.8 4.3-.3zM40.05 0l1.95 3.8 4.3.3-3.4 2.8 1.1 4.1-3.95-2.4-3.95 2.4 1.1-4.1-3.4-2.8 4.3-.3z"/><path fill="#dcdcdc" d="M56.95 0l1.95 3.8 4.3.3-3.4 2.8 1.1 4.1-3.95-2.4-3.95 2.4 1.1-4.1-3.4-2.8 4.3-.3zM73.85 0l1.95 3.8 4.3.3-3.4 2.8 1.1 4.1-3.95-2.4-3.95 2.4 1.1-4.1-3.4-2.8 4.3-.3z"/></svg><svg style="left:968.4px" width="82" height="12" viewBox="0 0 82 12"><path fill="#59a765" d="M6.25 0l1.95 3.8 4.3.3-3.4 2.8 1.1 4.1-3.95-2.4-3.95 2.4 1.1-4.1-3.4-2.8 4.3-.3zM23.15 0l1.95 3.8 4.3.3-3.4 2.8 1.1 4.1-3.95-2.4-3.95 2.4 1.1-4.1-3.4-2.8 4.3-.3zM40.05 0l1.95 3.8 4.3.3-3.4 2.8 1.1 4.1-3.95-2.4-3.95 2.4 1.1-4.1-3.4-2.8 4.3-.3z"/><path fill="#dcdcdc" d="M56.95 0l1.95 3.8 4.3.3-3.4 2.8 1.1 4.1-3.95-2.4-3.95 2.4 1.1-4.1-3.4-2.8 4.3-.3zM73.85 0l1.95 3.8 4.3.3-3.4 2.8 1.1 4.1-3.95-2.4-3.95 2.4 1.1-4.1-3.4-2.8 4.3-.3z"/></svg><svg style="left:1072.5px" width="82" height="12" viewBox="0 0 82 12"><path fill="#fbbf12" d="M6.25 0l1.95 3.8 4.3.3-3.4 2.8 1.1 4.1-3.95-2.4-3.95 2.4 1.1-4.1-3.4-2.8 4.3-.3zM23.15 0l1.95 3.8 4.3.3-3.4 2.8 1.1 4.1-3.95-2.4-3.95 2.4 1.1-4.1-3.4-2.8 4.3-.3zM40.05 0l1.95 3.8 4.3.3-3.4 2.8 1.1 4.1-3.95-2.4-3.95 2.4 1.1-4.1-3.4-2.8 4.3-.3zM56.95 0l1.95 3.8 4.3.3-3.4 2.8 1.1 4.1-3.95-2.4-3.95 2.4 1.1-4.1-3.4-2.8 4.3-.3z"/><path fill="#dcdcdc" d="M73.85 0l1.95 3.8 4.3.3-3.4 2.8 1.1 4.1-3.95-2.4-3.95 2.4 1.1-4.1-3.4-2.8 4.3-.3z"/></svg><svg style="left:1211.5px" width="82" height="12" viewBox="0 0 82 12"><path fill="#53b7cf" d="M6.25 0l1.95 3.8 4.3.3-3.4 2.8 1.1 4.1-3.95-2.4-3.95 2.4 1.1-4.1-3.4-2.8 4.3-.3zM23.15 0l1.95 3.8 4.3.3-3.4 2.8 1.1 4.1-3.95-2.4-3.95 2.4 1.1-4.1-3.4-2.8 4.3-.3zM40.05 0l1.95 3.8 4.3.3-3.4 2.8 1.1 4.1-3.95-2.4-3.95 2.4 1.1-4.1-3.4-2.8 4.3-.3zM56.95 0l1.95 3.8 4.3.3-3.4 2.8 1.1 4.1-3.95-2.4-3.95 2.4 1.1-4.1-3.4-2.8 4.3-.3z"/><path fill="#dcdcdc" d="M73.85 0l1.95 3.8 4.3.3-3.4 2.8 1.1 4.1-3.95-2.4-3.95 2.4 1.1-4.1-3.4-2.8 4.3-.3z"/></svg><svg style="left:1316.2px" width="82" height="12" viewBox="0 0 82 12"><path fill="#ea7c30" d="M6.25 0l1.95 3.8 4.3.3-3.4 2.8 1.1 4.1-3.95-2.4-3.95 2.4 1.1-4.1-3.4-2.8 4.3-.3zM23.15 0l1.95 3.8 4.3.3-3.4 2.8 1.1 4.1-3.95-2.4-3.95 2.4 1.1-4.1-3.4-2.8 4.3-.3zM40.05 0l1.95 3.8 4.3.3-3.4 2.8 1.1 4.1-3.95-2.4-3.95 2.4 1.1-4.1-3.4-2.8 4.3-.3z"/><path fill="#dcdcdc" d="M56.95 0l1.95 3.8 4.3.3-3.4 2.8 1.1 4.1-3.95-2.4-3.95 2.4 1.1-4.1-3.4-2.8 4.3-.3zM73.85 0l1.95 3.8 4.3.3-3.4 2.8 1.1 4.1-3.95-2.4-3.95 2.4 1.1-4.1-3.4-2.8 4.3-.3z"/></svg><span class="sc" style="right:13.8px">69%</span></div>
<div class="r" style="top:869.5px"><span class="n">20</span><span class="c1">AlphaTech Innovations</span><span class="c2">Nathan Scott</span><span class="c3">Advanced Manufacturing Solutions</span><svg style="left:603.1px" width="82" height="12" viewBox="0 0 82 12"><path fill="#cd9fd4" d="M6.25 0l1.95 3.8 4.3.3-3.4 2.8 1.1 4.1-3.95-2.4-3.95 2.4 1.1-4.1-3.4-2.8 4.3-.3zM23.15 0l1.95 3.8 4.3.3-3.4 2.8 1.1 4.1-3.95-2.4-3.95 2.4 1.1-4.1-3.4-2.8 4.3-.3zM40.05 0l1.95 3.8 4.3.3-3.4 2.8 1.1 4.1-3.95-2.4-3.95 2.4 1.1-4.1-3.4-2.8 4.3-.3zM56.95 0l1.95 3.8 4.3.3-3.4 2.8 1.1 4.1-3.95-2.4-3.95 2.4 1.1-4.1-3.4-2.8 4.3-.3z"/><path fill="#dcdcdc" d="M73.85 0l1.95 3.8 4.3.3-3.4 2.8 1.1 4.1-3.95-2.4-3.95 2.4 1.1-4.1-3.4-2.8 4.3-.3z"/></svg><svg style="left:713.1px" width="82" height="12" viewBox="0 0 82 12"><path fill="#4f82fc" d="M6.25 0l1.95 3.8 4.3.3-3.4 2.8 1.1 4.1-3.95-2.4-3.95 2.4 1.1-4.1-3.4-2.8 4.3-.3zM23.15 0l1.95 3.8 4.3.3-3.4 2.8 1.1 4.1-3.95-2.4-3.95 2.4 1.1-4.1-3.4-2.8 4.3-.3zM40.05 0l1.95 3.8 4.3.3-3.4 2.8 1.1 4.1-3.95-2.4-3.95 2.4 1.1-4.1-3.4-2.8 4.3-.3z"/><path fill="#dcdcdc" d="M56.95 0l1.95 3.8 4.3.3-3.4 2.8 1.1 4.1-3.95-2.4-3.95 2.4 1.1-4.1-3.4-2.8 4.3-.3zM73.85 0l1.95 3.8 4.3.3-3.4 2.8 1.1 4.1-3.95-2.4-3.95 2.4 1.1-4.1-3.4-2.8 4.3-.3z"/></svg><svg style="left:816.4px" width="82" height="12" viewBox="0 0 82 12"><path fill="#d53041" d="M6.25 0l1.95 3.8 4.3.3-3.4 2.8 1.1 4.1-3.95-2.4-3.95 2.4 1.1-4.1-3.4-2.8 4.3-.3zM23.15 0l1.95 3.8 4.3.3-3.4 2.8 1.1 4.1-3.95-2.4-3.95 2.4 1.1-4.1-3.4-2.8 4.3-.3zM40.05 0l1.95 3.8 4.3.3-3.4 2.8 1.1 4.1-3.95-2.4-3.95 2.4 1.1-4.1-3.4-2.8 4.3-.3zM56.95 0l1.95 3.8 4.3.3-3.4 2.8 1.1 4.1-3.95-2.4-3.95 2.4 1.1-4.1-3.4-2.8 4.3-.3z"/><path fill="#dcdcdc" d="M73.85 0l1.95 3.8 4.3.3-3.4 2.8 1.1 4.1-3.95-2.4-3.95 2.4 1.1-4.1-3.4-2.8 4.3-.3z"/></svg><svg style="left:968.4px" width="82" height="12" viewBox="0 0 82 12"><path fill="#59a765" d="M6.25 0l1.95 3.8 4.3.3-3.4 2.8 1.1 4.1-3.95-2.4-3.95 2.4 1.1-4.1-3.4-2.8 4.3-.3zM23.15 0l1.95 3.8 4.3.3-3.4 2.8 1.1 4.1-3.95-2.4-3.95 2.4 1.1-4.1-3.4-2.8 4.3-.3zM40.05 0l1.95 3.8 4.3.3-3.4 2.8 1.1 4.1-3.95-2.4-3.95 2.4 1.1-4.1-3.4-2.8 4.3-.3zM56.95 0l1.95 3.8 4.3.3-3.4 2.8 1.1 4.1-3.95-2.4-3.95 2.4 1.1-4.1-3.4-2.8 4.3-.3z"/><path fill="#dcdcdc" d="M73.85 0l1.95 3.8 4.3.3-3.4 2.8 1.1 4.1-3.95-2.4-3.95 2.4 1.1-4.1-3.4-2.8 4.3-.3z"/></svg><svg style="left:1072.5px" width="82" height="12" viewBox="0 0 82 12"><path fill="#fbbf12" d="M6.25 0l1.95 3.8 4.3.3-3.4 2.8 1.1 4.1-3.95-2.4-3.95 2.4 1.1-4.1-3.4-2.8 4.3-.3zM23.15 0l1.95 3.8 4.3.3-3.4 2.8 1.1 4.1-3.95-2.4-3.95 2.4 1.1-4.1-3.4-2.8 4.3-.3zM40.05 0l1.95 3.8 4.3.3-3.4 2.8 1.1 4.1-3.95-2.4-3.95 2.4 1.1-4.1-3.4-2.8 4.3-.3zM56.95 0l1.95 3.8 4.3.3-3.4 2.8 1.1 4.1-3.95-2.4-3.95 2.4 1.1-4.1-3.4-2.8 4.3-.3zM73.85 0l1.95 3.8 4.3.3-3.4 2.8 1.1 4.1-3.95-2.4-3.95 2.4 1.1-4.1-3.4-2.8 4.3-.3z"/></svg><svg style="left:1211.5px" width="82" height="12" viewBox="0 0 82 12"><path fill="#53b7cf" d="M6.25 0l1.95 3.8 4.3.3-3.4 2.8 1.1 4.1-3.95-2.4-3.95 2.4 1.1-4.1-3.4-2.8 4.3-.3zM23.15 0l1.95 3.8 4.3.3-3.4 2.8 1.1 4.1-3.95-2.4-3.95 2.4 1.1-4.1-3.4-2.8 4.3-.3zM40.05 0l1.95 3.8 4.3.3-3.4 2.8 1.1 4.1-3.95-2.4-3.95 2.4 1.1-4.1-3.4-2.8 4.3-.3zM56.95 0l1.95 3.8 4.3.3-3.4 2.8 1.1 4.1-3.95-2.4-3.95 2.4 1.1-4.1-3.4-2.8 4.3-.3z"/><path fill="#dcdcdc" d="M73.85 0l1.95 3.8 4.3.3-3.4 2.8 1.1 4.1-3.95-2.4-3.95 2.4 1.1-4.1-3.4-2.8 4.3-.3z"/></svg><svg style="left:1316.2px" width="82" height="12" viewBox="0 0 82 12"><path fill="#ea7c30" d="M6.25 0l1.95 3.8 4.3.3-3.4 2.8 1.1 4.1-3.95-2.4-3.95 2.4 1.1-4.1-3.4-2.8 4.3-.3zM23.15 0l1.95 3.8 4.3.3-3.4 2.8 1.1 4.1-3.95-2.4-3.95 2.4 1.1-4.1-3.4-2.8 4.3-.3zM40.05 0l1.95 3.8 4.3.3-3.4 2.8 1.1 4.1-3.95-2.4-3.95 2.4 1.1-4.1-3.4-2.8 4.3-.3zM56.95 0l1.95 3.8 4.3.3-3.4 2.8 1.1 4.1-3.95-2.4-3.95 2.4 1.1-4.1-3.4-2.8 4.3-.3z"/><path fill="#dcdcdc" d="M73.85 0l1.95 3.8 4.3.3-3.4 2.8 1.1 4.1-3.95-2.4-3.95 2.4 1.1-4.1-3.4-2.8 4.3-.3z"/></svg><span class="sc" style="right:13.8px">80%</span></div>
<div class="r" style="top:905.7px"><span class="n">21</span><span class="c1">SolarBright Solutions</span><span class="c2">Olivia Harris</span><span class="c3">Solar Energy Systems</span><svg style="left:603.1px" width="82" height="12" viewBox="0 0 82 12"><path fill="#cd9fd4" d="M6.25 0l1.95 3.8 4.3.3-3.4 2.8 1.1 4.1-3.95-2.4-3.95 2.4 1.1-4.1-3.4-2.8 4.3-.3zM23.15 0l1.95 3.8 4.3.3-3.4 2.8 1.1 4.1-3.95-2.4-3.95 2.4 1.1-4.1-3.4-2.8 4.3-.3zM40.05 0l1.95 3.8 4.3.3-3.4 2.8 1.1 4.1-3.95-2.4-3.95 2.4 1.1-4.1-3.4-2.8 4.3-.3zM56.95 0l1.95 3.8 4.3.3-3.4 2.8 1.1 4.1-3.95-2.4-3.95 2.4 1.1-4.1-3.4-2.8 4.3-.3zM73.85 0l1.95 3.8 4.3.3-3.4 2.8 1.1 4.1-3.95-2.4-3.95 2.4 1.1-4.1-3.4-2.8 4.3-.3z"/></svg><svg style="left:713.1px" width="82" height="12" viewBox="0 0 82 12"><path fill="#4f82fc" d="M6.25 0l1.95 3.8 4.3.3-3.4 2.8 1.1 4.1-3.95-2.4-3.95 2.4 1.1-4.1-3.4-2.8 4.3-.3zM23.15 0l1.95 3.8 4.3.3-3.4 2.8 1.1 4.1-3.95-2.4-3.95 2.4 1.1-4.1-3.4-2.8 4.3-.3zM40.05 0l1.95 3.8 4.3.3-3.4 2.8 1.1 4.1-3.95-2.4-3.95 2.4 1.1-4.1-3.4-2.8 4.3-.3zM56.95 0l1.95 3.8 4.3.3-3.4 2.8 1.1 4.1-3.95-2.4-3.95 2.4 1.1-4.1-3.4-2.8 4.3-.3z"/><path fill="#dcdcdc" d="M73.85 0l1.95 3.8 4.3.3-3.4 2.8 1.1 4.1-3.95-2.4-3.95 2.4 1.1-4.1-3.4-2.8 4.3-.3z"/></svg><svg style="left:816.4px" width="82" height="12" viewBox="0 0 82 12"><path fill="#d53041" d="M6.25 0l1.95 3.8 4.3.3-3.4 2.8 1.1 4.1-3.95-2.4-3.95 2.4 1.1-4.1-3.4-2.8 4.3-.3zM23.15 0l1.95 3.8 4.3.3-3.4 2.8 1.1 4.1-3.95-2.4-3.95 2.4 1.1-4.1-3.4-2.8 4.3-.3zM40.05 0l1.95 3.8 4.3.3-3.4 2.8 1.1 4.1-3.95-2.4-3.95 2.4 1.1-4.1-3.4-2.8 4.3-.3zM56.95 0l1.95 3.8 4.3.3-3.4 2.8 1.1 4.1-3.95-2.4-3.95 2.4 1.1-4.1-3.4-2.8 4.3-.3zM73.85 0l1.95 3.8 4.3.3-3.4 2.8 1.1 4.1-3.95-2.4-3.95 2.4 1.1-4.1-3.4-2.8 4.3-.3z"/></svg><svg style="left:968.4px" width="82" height="12" viewBox="0 0 82 12"><path fill="#59a765" d="M6.25 0l1.95 3.8 4.3.3-3.4 2.8 1.1 4.1-3.95-2.4-3.95 2.4 1.1-4.1-3.4-2.8 4.3-.3zM23.15 0l1.95 3.8 4.3.3-3.4 2.8 1.1 4.1-3.95-2.4-3.95 2.4 1.1-4.1-3.4-2.8 4.3-.3zM40.05 0l1.95 3.8 4.3.3-3.4 2.8 1.1 4.1-3.95-2.4-3.95 2.4 1.1-4.1-3.4-2.8 4.3-.3zM56.95 0l1.95 3.8 4.3.3-3.4 2.8 1.1 4.1-3.95-2.4-3.95 2.4 1.1-4.1-3.4-2.8 4.3-.3z"/><path fill="#dcdcdc" d="M73.85 0l1.95 3.8 4.3.3-3.4 2.8 1.1 4.1-3.95-2.4-3.95 2.4 1.1-4.1-3.4-2.8 4.3-.3z"/></svg><svg style="left:1072.5px" width="82" height="12" viewBox="0 0 82 12"><path fill="#fbbf12" d="M6.25 0l1.95 3.8 4.3.3-3.4 2.8 1.1 4.1-3.95-2.4-3.95 2.4 1.1-4.1-3.4-2.8 4.3-.3zM23.15 0l1.95 3.8 4.3.3-3.4 2.8 1.1 4.1-3.95-2.4-3.95 2.4 1.1-4.1-3.4-2.8 4.3-.3zM40.05 0l1.95 3.8 4.3.3-3.4 2.8 1.1 4.1-3.95-2.4-3.95 2.4 1.1-4.1-3.4-2.8 4.3-.3zM56.95 0l1.95 3.8 4.3.3-3.4 2.8 1.1 4.1-3.95-2.4-3.95 2.4 1.1-4.1-3.4-2.8 4.3-.3zM73.85 0l1.95 3.8 4.3.3-3.4 2.8 1.1 4.1-3.95-2.4-3.95 2.4 1.1-4.1-3.4-2.8 4.3-.3z"/></svg><svg style="left:1211.5px" width="82" height="12" viewBox="0 0 82 12"><path fill="#53b7cf" d="M6.25 0l1.95 3.8 4.3.3-3.4 2.8 1.1 4.1-3.95-2.4-3.95 2.4 1.1-4.1-3.4-2.8 4.3-.3zM23.15 0l1.95 3.8 4.3.3-3.4 2.8 1.1 4.1-3.95-2.4-3.95 2.4 1.1-4.1-3.4-2.8 4.3-.3zM40.05 0l1.95 3.8 4.3.3-3.4 2.8 1.1 4.1-3.95-2.4-3.95 2.4 1.1-4.1-3.4-2.8 4.3-.3z"/><path fill="#dcdcdc" d="M56.95 0l1.95 3.8 4.3.3-3.4 2.8 1.1 4.1-3.95-2.4-3.95 2.4 1.1-4.1-3.4-2.8 4.3-.3zM73.85 0l1.95 3.8 4.3.3-3.4 2.8 1.1 4.1-3.95-2.4-3.95 2.4 1.1-4.1-3.4-2.8 4.3-.3z"/></svg><svg style="left:1316.2px" width="82" height="12" viewBox="0 0 82 12"><path fill="#ea7c30" d="M6.25 0l1.95 3.8 4.3.3-3.4 2.8 1.1 4.1-3.95-2.4-3.95 2.4 1.1-4.1-3.4-2.8 4.3-.3zM23.15 0l1.95 3.8 4.3.3-3.4 2.8 1.1 4.1-3.95-2.4-3.95 2.4 1.1-4.1-3.4-2.8 4.3-.3zM40.05 0l1.95 3.8 4.3.3-3.4 2.8 1.1 4.1-3.95-2.4-3.95 2.4 1.1-4.1-3.4-2.8 4.3-.3zM56.95 0l1.95 3.8 4.3.3-3.4 2.8 1.1 4.1-3.95-2.4-3.95 2.4 1.1-4.1-3.4-2.8 4.3-.3zM73.85 0l1.95 3.8 4.3.3-3.4 2.8 1.1 4.1-3.95-2.4-3.95 2.4 1.1-4.1-3.4-2.8 4.3-.3z"/></svg><span class="sc" style="right:13.8px">89%</span></div>
<div class="r" style="top:941.9px"><span class="n">22</span><span class="c1">Dynamic Lighting</span><span class="c2">William Brown</span><span class="c3">LED Lighting Solutions</span><svg style="left:603.1px" width="82" height="12" viewBox="0 0 82 12"><path fill="#cd9fd4" d="M6.25 0l1.95 3.8 4.3.3-3.4 2.8 1.1 4.1-3.95-2.4-3.95 2.4 1.1-4.1-3.4-2.8 4.3-.3zM23.15 0l1.95 3.8 4.3.3-3.4 2.8 1.1 4.1-3.95-2.4-3.95 2.4 1.1-4.1-3.4-2.8 4.3-.3zM40.05 0l1.95 3.8 4.3.3-3.4 2.8 1.1 4.1-3.95-2.4-3.95 2.4 1.1-4.1-3.4-2.8 4.3-.3zM56.95 0l1.95 3.8 4.3.3-3.4 2.8 1.1 4.1-3.95-2.4-3.95 2.4 1.1-4.1-3.4-2.8 4.3-.3z"/><path fill="#dcdcdc" d="M73.85 0l1.95 3.8 4.3.3-3.4 2.8 1.1 4.1-3.95-2.4-3.95 2.4 1.1-4.1-3.4-2.8 4.3-.3z"/></svg><svg style="left:713.1px" width="82" height="12" viewBox="0 0 82 12"><path fill="#4f82fc" d="M6.25 0l1.95 3.8 4.3.3-3.4 2.8 1.1 4.1-3.95-2.4-3.95 2.4 1.1-4.1-3.4-2.8 4.3-.3zM23.15 0l1.95 3.8 4.3.3-3.4 2.8 1.1 4.1-3.95-2.4-3.95 2.4 1.1-4.1-3.4-2.8 4.3-.3zM40.05 0l1.95 3.8 4.3.3-3.4 2.8 1.1 4.1-3.95-2.4-3.95 2.4 1.1-4.1-3.4-2.8 4.3-.3zM56.95 0l1.95 3.8 4.3.3-3.4 2.8 1.1 4.1-3.95-2.4-3.95 2.4 1.1-4.1-3.4-2.8 4.3-.3z"/><path fill="#dcdcdc" d="M73.85 0l1.95 3.8 4.3.3-3.4 2.8 1.1 4.1-3.95-2.4-3.95 2.4 1.1-4.1-3.4-2.8 4.3-.3z"/></svg><svg style="left:816.4px" width="82" height="12" viewBox="0 0 82 12"><path fill="#d53041" d="M6.25 0l1.95 3.8 4.3.3-3.4 2.8 1.1 4.1-3.95-2.4-3.95 2.4 1.1-4.1-3.4-2.8 4.3-.3zM23.15 0l1.95 3.8 4.3.3-3.4 2.8 1.1 4.1-3.95-2.4-3.95 2.4 1.1-4.1-3.4-2.8 4.3-.3zM40.05 0l1.95 3.8 4.3.3-3.4 2.8 1.1 4.1-3.95-2.4-3.95 2.4 1.1-4.1-3.4-2.8 4.3-.3zM56.95 0l1.95 3.8 4.3.3-3.4 2.8 1.1 4.1-3.95-2.4-3.95 2.4 1.1-4.1-3.4-2.8 4.3-.3z"/><path fill="#dcdcdc" d="M73.85 0l1.95 3.8 4.3.3-3.4 2.8 1.1 4.1-3.95-2.4-3.95 2.4 1.1-4.1-3.4-2.8 4.3-.3z"/></svg><svg style="left:968.4px" width="82" height="12" viewBox="0 0 82 12"><path fill="#59a765" d="M6.25 0l1.95 3.8 4.3.3-3.4 2.8 1.1 4.1-3.95-2.4-3.95 2.4 1.1-4.1-3.4-2.8 4.3-.3zM23.15 0l1.95 3.8 4.3.3-3.4 2.8 1.1 4.1-3.95-2.4-3.95 2.4 1.1-4.1-3.4-2.8 4.3-.3zM40.05 0l1.95 3.8 4.3.3-3.4 2.8 1.1 4.1-3.95-2.4-3.95 2.4 1.1-4.1-3.4-2.8 4.3-.3zM56.95 0l1.95 3.8 4.3.3-3.4 2.8 1.1 4.1-3.95-2.4-3.95 2.4 1.1-4.1-3.4-2.8 4.3-.3zM73.85 0l1.95 3.8 4.3.3-3.4 2.8 1.1 4.1-3.95-2.4-3.95 2.4 1.1-4.1-3.4-2.8 4.3-.3z"/></svg><svg style="left:1072.5px" width="82" height="12" viewBox="0 0 82 12"><path fill="#fbbf12" d="M6.25 0l1.95 3.8 4.3.3-3.4 2.8 1.1 4.1-3.95-2.4-3.95 2.4 1.1-4.1-3.4-2.8 4.3-.3zM23.15 0l1.95 3.8 4.3.3-3.4 2.8 1.1 4.1-3.95-2.4-3.95 2.4 1.1-4.1-3.4-2.8 4.3-.3zM40.05 0l1.95 3.8 4.3.3-3.4 2.8 1.1 4.1-3.95-2.4-3.95 2.4 1.1-4.1-3.4-2.8 4.3-.3zM56.95 0l1.95 3.8 4.3.3-3.4 2.8 1.1 4.1-3.95-2.4-3.95 2.4 1.1-4.1-3.4-2.8 4.3-.3z"/><path fill="#dcdcdc" d="M73.85 0l1.95 3.8 4.3.3-3.4 2.8 1.1 4.1-3.95-2.4-3.95 2.4 1.1-4.1-3.4-2.8 4.3-.3z"/></svg><svg style="left:1211.5px" width="82" height="12" viewBox="0 0 82 12"><path fill="#53b7cf" d="M6.25 0l1.95 3.8 4.3.3-3.4 2.8 1.1 4.1-3.95-2.4-3.95 2.4 1.1-4.1-3.4-2.8 4.3-.3zM23.15 0l1.95 3.8 4.3.3-3.4 2.8 1.1 4.1-3.95-2.4-3.95 2.4 1.1-4.1-3.4-2.8 4.3-.3zM40.05 0l1.95 3.8 4.3.3-3.4 2.8 1.1 4.1-3.95-2.4-3.95 2.4 1.1-4.1-3.4-2.8 4.3-.3zM56.95 0l1.95 3.8 4.3.3-3.4 2.8 1.1 4.1-3.95-2.4-3.95 2.4 1.1-4.1-3.4-2.8 4.3-.3z"/><path fill="#dcdcdc" d="M73.85 0l1.95 3.8 4.3.3-3.4 2.8 1.1 4.1-3.95-2.4-3.95 2.4 1.1-4.1-3.4-2.8 4.3-.3z"/></svg><svg style="left:1316.2px" width="82" height="12" viewBox="0 0 82 12"><path fill="#ea7c30" d="M6.25 0l1.95 3.8 4.3.3-3.4 2.8 1.1 4.1-3.95-2.4-3.95 2.4 1.1-4.1-3.4-2.8 4.3-.3zM23.15 0l1.95 3.8 4.3.3-3.4 2.8 1.1 4.1-3.95-2.4-3.95 2.4 1.1-4.1-3.4-2.8 4.3-.3zM40.05 0l1.95 3.8 4.3.3-3.4 2.8 1.1 4.1-3.95-2.4-3.95 2.4 1.1-4.1-3.4-2.8 4.3-.3zM56.95 0l1.95 3.8 4.3.3-3.4 2.8 1.1 4.1-3.95-2.4-3.95 2.4 1.1-4.1-3.4-2.8 4.3-.3z"/><path fill="#dcdcdc" d="M73.85 0l1.95 3.8 4.3.3-3.4 2.8 1.1 4.1-3.95-2.4-3.95 2.4 1.1-4.1-3.4-2.8 4.3-.3z"/></svg><span class="sc" style="right:13.8px">83%</span></div>
<div class="r" style="top:978.1px"><span class="n">23</span><span class="c1">TopBuild Construction</span><span class="c2">James Walker</span><span class="c3">Commercial Construction</span><svg style="left:603.1px" width="82" height="12" viewBox="0 0 82 12"><path fill="#cd9fd4" d="M6.25 0l1.95 3.8 4.3.3-3.4 2.8 1.1 4.1-3.95-2.4-3.95 2.4 1.1-4.1-3.4-2.8 4.3-.3zM23.15 0l1.95 3.8 4.3.3-3.4 2.8 1.1 4.1-3.95-2.4-3.95 2.4 1.1-4.1-3.4-2.8 4.3-.3zM40.05 0l1.95 3.8 4.3.3-3.4 2.8 1.1 4.1-3.95-2.4-3.95 2.4 1.1-4.1-3.4-2.8 4.3-.3zM56.95 0l1.95 3.8 4.3.3-3.4 2.8 1.1 4.1-3.95-2.4-3.95 2.4 1.1-4.1-3.4-2.8 4.3-.3zM73.85 0l1.95 3.8 4.3.3-3.4 2.8 1.1 4.1-3.95-2.4-3.95 2.4 1.1-4.1-3.4-2.8 4.3-.3z"/></svg><svg style="left:713.1px" width="82" height="12" viewBox="0 0 82 12"><path fill="#4f82fc" d="M6.25 0l1.95 3.8 4.3.3-3.4 2.8 1.1 4.1-3.95-2.4-3.95 2.4 1.1-4.1-3.4-2.8 4.3-.3zM23.15 0l1.95 3.8 4.3.3-3.4 2.8 1.1 4.1-3.95-2.4-3.95 2.4 1.1-4.1-3.4-2.8 4.3-.3zM40.05 0l1.95 3.8 4.3.3-3.4 2.8 1.1 4.1-3.95-2.4-3.95 2.4 1.1-4.1-3.4-2.8 4.3-.3zM56.95 0l1.95 3.8 4.3.3-3.4 2.8 1.1 4.1-3.95-2.4-3.95 2.4 1.1-4.1-3.4-2.8 4.3-.3zM73.85 0l1.95 3.8 4.3.3-3.4 2.8 1.1 4.1-3.95-2.4-3.95 2.4 1.1-4.1-3.4-2.8 4.3-.3z"/></svg><svg style="left:816.4px" width="82" height="12" viewBox="0 0 82 12"><path fill="#d53041" d="M6.25 0l1.95 3.8 4.3.3-3.4 2.8 1.1 4.1-3.95-2.4-3.95 2.4 1.1-4.1-3.4-2.8 4.3-.3zM23.15 0l1.95 3.8 4.3.3-3.4 2.8 1.1 4.1-3.95-2.4-3.95 2.4 1.1-4.1-3.4-2.8 4.3-.3zM40.05 0l1.95 3.8 4.3.3-3.4 2.8 1.1 4.1-3.95-2.4-3.95 2.4 1.1-4.1-3.4-2.8 4.3-.3zM56.95 0l1.95 3.8 4.3.3-3.4 2.8 1.1 4.1-3.95-2.4-3.95 2.4 1.1-4.1-3.4-2.8 4.3-.3zM73.85 0l1.95 3.8 4.3.3-3.4 2.8 1.1 4.1-3.95-2.4-3.95 2.4 1.1-4.1-3.4-2.8 4.3-.3z"/></svg><svg style="left:968.4px" width="82" height="12" viewBox="0 0 82 12"><path fill="#59a765" d="M6.25 0l1.95 3.8 4.3.3-3.4 2.8 1.1 4.1-3.95-2.4-3.95 2.4 1.1-4.1-3.4-2.8 4.3-.3zM23.15 0l1.95 3.8 4.3.3-3.4 2.8 1.1 4.1-3.95-2.4-3.95 2.4 1.1-4.1-3.4-2.8 4.3-.3zM40.05 0l1.95 3.8 4.3.3-3.4 2.8 1.1 4.1-3.95-2.4-3.95 2.4 1.1-4.1-3.4-2.8 4.3-.3zM56.95 0l1.95 3.8 4.3.3-3.4 2.8 1.1 4.1-3.95-2.4-3.95 2.4 1.1-4.1-3.4-2.8 4.3-.3z"/><path fill="#dcdcdc" d="M73.85 0l1.95 3.8 4.3.3-3.4 2.8 1.1 4.1-3.95-2.4-3.95 2.4 1.1-4.1-3.4-2.8 4.3-.3z"/></svg><svg style="left:1072.5px" width="82" height="12" viewBox="0 0 82 12"><path fill="#fbbf12" d="M6.25 0l1.95 3.8 4.3.3-3.4 2.8 1.1 4.1-3.95-2.4-3.95 2.4 1.1-4.1-3.4-2.8 4.3-.3zM23.15 0l1.95 3.8 4.3.3-3.4 2.8 1.1 4.1-3.95-2.4-3.95 2.4 1.1-4.1-3.4-2.8 4.3-.3zM40.05 0l1.95 3.8 4.3.3-3.4 2.8 1.1 4.1-3.95-2.4-3.95 2.4 1.1-4.1-3.4-2.8 4.3-.3zM56.95 0l1.95 3.8 4.3.3-3.4 2.8 1.1 4.1-3.95-2.4-3.95 2.4 1.1-4.1-3.4-2.8 4.3-.3zM73.85 0l1.95 3.8 4.3.3-3.4 2.8 1.1 4.1-3.95-2.4-3.95 2.4 1.1-4.1-3.4-2.8 4.3-.3z"/></svg><svg style="left:1211.5px" width="82" height="12" viewBox="0 0 82 12"><path fill="#53b7cf" d="M6.25 0l1.95 3.8 4.3.3-3.4 2.8 1.1 4.1-3.95-2.4-3.95 2.4 1.1-4.1-3.4-2.8 4.3-.3zM23.15 0l1.95 3.8 4.3.3-3.4 2.8 1.1 4.1-3.95-2.4-3.95 2.4 1.1-4.1-3.4-2.8 4.3-.3zM40.05 0l1.95 3.8 4.3.3-3.4 2.8 1.1 4.1-3.95-2.4-3.95 2.4 1.1-4.1-3.4-2.8 4.3-.3z"/><path fill="#dcdcdc" d="M56.95 0l1.95 3.8 4.3.3-3.4 2.8 1.1 4.1-3.95-2.4-3.95 2.4 1.1-4.1-3.4-2.8 4.3-.3zM73.85 0l1.95 3.8 4.3.3-3.4 2.8 1.1 4.1-3.95-2.4-3.95 2.4 1.1-4.1-3.4-2.8 4.3-.3z"/></svg><svg style="left:1316.2px" width="82" height="12" viewBox="0 0 82 12"><path fill="#ea7c30" d="M6.25 0l1.95 3.8 4.3.3-3.4 2.8 1.1 4.1-3.95-2.4-3.95 2.4 1.1-4.1-3.4-2.8 4.3-.3zM23.15 0l1.95 3.8 4.3.3-3.4 2.8 1.1 4.1-3.95-2.4-3.95 2.4 1.1-4.1-3.4-2.8 4.3-.3zM40.05 0l1.95 3.8 4.3.3-3.4 2.8 1.1 4.1-3.95-2.4-3.95 2.4 1.1-4.1-3.4-2.8 4.3-.3zM56.95 0l1.95 3.8 4.3.3-3.4 2.8 1.1 4.1-3.95-2.4-3.95 2.4 1.1-4.1-3.4-2.8 4.3-.3zM73.85 0l1.95 3.8 4.3.3-3.4 2.8 1.1 4.1-3.95-2.4-3.95 2.4 1.1-4.1-3.4-2.8 4.3-.3z"/></svg><span class="sc" style="right:13.8px">91%</span></div>
<div class="r" style="top:1014.3px"><span class="n">24</span><span class="c1">EcoGardening Services</span><span class="c2">Rachel Adams</span><span class="c3">Sustainable Landscaping</span><svg style="left:603.1px" width="82" height="12" viewBox="0 0 82 12"><path fill="#cd9fd4" d="M6.25 0l1.95 3.8 4.3.3-3.4 2.8 1.1 4.1-3.95-2.4-3.95 2.4 1.1-4.1-3.4-2.8 4.3-.3zM23.15 0l1.95 3.8 4.3.3-3.4 2.8 1.1 4.1-3.95-2.4-3.95 2.4 1.1-4.1-3.4-2.8 4.3-.3zM40.05 0l1.95 3.8 4.3.3-3.4 2.8 1.1 4.1-3.95-2.4-3.95 2.4 1.1-4.1-3.4-2.8 4.3-.3zM56.95 0l1.95 3.8 4.3.3-3.4 2.8 1.1 4.1-3.95-2.4-3.95 2.4 1.1-4.1-3.4-2.8 4.3-.3z"/><path fill="#dcdcdc" d="M73.85 0l1.95 3.8 4.3.3-3.4 2.8 1.1 4.1-3.95-2.4-3.95 2.4 1.1-4.1-3.4-2.8 4.3-.3z"/></svg><svg style="left:713.1px" width="82" height="12" viewBox="0 0 82 12"><path fill="#4f82fc" d="M6.25 0l1.95 3.8 4.3.3-3.4 2.8 1.1 4.1-3.95-2.4-3.95 2.4 1.1-4.1-3.4-2.8 4.3-.3zM23.15 0l1.95 3.8 4.3.3-3.4 2.8 1.1 4.1-3.95-2.4-3.95 2.4 1.1-4.1-3.4-2.8 4.3-.3zM40.05 0l1.95 3.8 4.3.3-3.4 2.8 1.1 4.1-3.95-2.4-3.95 2.4 1.1-4.1-3.4-2.8 4.3-.3zM56.95 0l1.95 3.8 4.3.3-3.4 2.8 1.1 4.1-3.95-2.4-3.95 2.4 1.1-4.1-3.4-2.8 4.3-.3z"/><path fill="#dcdcdc" d="M73.85 0l1.95 3.8 4.3.3-3.4 2.8 1.1 4.1-3.95-2.4-3.95 2.4 1.1-4.1-3.4-2.8 4.3-.3z"/></svg><svg style="left:816.4px" width="82" height="12" viewBox="0 0 82 12"><path fill="#d53041" d="M6.25 0l1.95 3.8 4.3.3-3.4 2.8 1.1 4.1-3.95-2.4-3.95 2.4 1.1-4.1-3.4-2.8 4.3-.3zM23.15 0l1.95 3.8 4.3.3-3.4 2.8 1.1 4.1-3.95-2.4-3.95 2.4 1.1-4.1-3.4-2.8 4.3-.3zM40.05 0l1.95 3.8 4.3.3-3.4 2.8 1.1 4.1-3.95-2.4-3.95 2.4 1.1-4.1-3.4-2.8 4.3-.3zM56.95 0l1.95 3.8 4.3.3-3.4 2.8 1.1 4.1-3.95-2.4-3.95 2.4 1.1-4.1-3.4-2.8 4.3-.3z"/><path fill="#dcdcdc" d="M73.85 0l1.95 3.8 4.3.3-3.4 2.8 1.1 4.1-3.95-2.4-3.95 2.4 1.1-4.1-3.4-2.8 4.3-.3z"/></svg><svg style="left:968.4px" width="82" height="12" viewBox="0 0 82 12"><path fill="#59a765" d="M6.25 0l1.95 3.8 4.3.3-3.4 2.8 1.1 4.1-3.95-2.4-3.95 2.4 1.1-4.1-3.4-2.8 4.3-.3zM23.15 0l1.95 3.8 4.3.3-3.4 2.8 1.1 4.1-3.95-2.4-3.95 2.4 1.1-4.1-3.4-2.8 4.3-.3zM40.05 0l1.95 3.8 4.3.3-3.4 2.8 1.1 4.1-3.95-2.4-3.95 2.4 1.1-4.1-3.4-2.8 4.3-.3zM56.95 0l1.95 3.8 4.3.3-3.4 2.8 1.1 4.1-3.95-2.4-3.95 2.4 1.1-4.1-3.4-2.8 4.3-.3zM73.85 0l1.95 3.8 4.3.3-3.4 2.8 1.1 4.1-3.95-2.4-3.95 2.4 1.1-4.1-3.4-2.8 4.3-.3z"/></svg><svg style="left:1072.5px" width="82" height="12" viewBox="0 0 82 12"><path fill="#fbbf12" d="M6.25 0l1.95 3.8 4.3.3-3.4 2.8 1.1 4.1-3.95-2.4-3.95 2.4 1.1-4.1-3.4-2.8 4.3-.3zM23.15 0l1.95 3.8 4.3.3-3.4 2.8 1.1 4.1-3.95-2.4-3.95 2.4 1.1-4.1-3.4-2.8 4.3-.3zM40.05 0l1.95 3.8 4.3.3-3.4 2.8 1.1 4.1-3.95-2.4-3.95 2.4 1.1-4.1-3.4-2.8 4.3-.3zM56.95 0l1.95 3.8 4.3.3-3.4 2.8 1.1 4.1-3.95-2.4-3.95 2.4 1.1-4.1-3.4-2.8 4.3-.3z"/><path fill="#dcdcdc" d="M73.85 0l1.95 3.8 4.3.3-3.4 2.8 1.1 4.1-3.95-2.4-3.95 2.4 1.1-4.1-3.4-2.8 4.3-.3z"/></svg><svg style="left:1211.5px" width="82" height="12" viewBox="0 0 82 12"><path fill="#53b7cf" d="M6.25 0l1.95 3.8 4.3.3-3.4 2.8 1.1 4.1-3.95-2.4-3.95 2.4 1.1-4.1-3.4-2.8 4.3-.3zM23.15 0l1.95 3.8 4.3.3-3.4 2.8 1.1 4.1-3.95-2.4-3.95 2.4 1.1-4.1-3.4-2.8 4.3-.3zM40.05 0l1.95 3.8 4.3.3-3.4 2.8 1.1 4.1-3.95-2.4-3.95 2.4 1.1-4.1-3.4-2.8 4.3-.3zM56.95 0l1.95 3.8 4.3.3-3.4 2.8 1.1 4.1-3.95-2.4-3.95 2.4 1.1-4.1-3.4-2.8 4.3-.3z"/><path fill="#dcdcdc" d="M73.85 0l1.95 3.8 4.3.3-3.4 2.8 1.1 4.1-3.95-2.4-3.95 2.4 1.1-4.1-3.4-2.8 4.3-.3z"/></svg><svg style="left:1316.2px" width="82" height="12" viewBox="0 0 82 12"><path fill="#ea7c30" d="M6.25 0l1.95 3.8 4.3.3-3.4 2.8 1.1 4.1-3.95-2.4-3.95 2.4 1.1-4.1-3.4-2.8 4.3-.3zM23.15 0l1.95 3.8 4.3.3-3.4 2.8 1.1 4.1-3.95-2.4-3.95 2.4 1.1-4.1-3.4-2.8 4.3-.3zM40.05 0l1.95 3.8 4.3.3-3.4 2.8 1.1 4.1-3.95-2.4-3.95 2.4 1.1-4.1-3.4-2.8 4.3-.3zM56.95 0l1.95 3.8 4.3.3-3.4 2.8 1.1 4.1-3.95-2.4-3.95 2.4 1.1-4.1-3.4-2.8 4.3-.3z"/><path fill="#dcdcdc" d="M73.85 0l1.95 3.8 4.3.3-3.4 2.8 1.1 4.1-3.95-2.4-3.95 2.4 1.1-4.1-3.4-2.8 4.3-.3z"/></svg><span class="sc" style="right:13.8px">83%</span></div>
<div class="r" style="top:1050.5px"><span class="n">25</span><span class="c1">HighTech Innovations</span><span class="c2">George King</span><span class="c3">Advanced IT Solutions</span><svg style="left:603.1px" width="82" height="12" viewBox="0 0 82 12"><path fill="#cd9fd4" d="M6.25 0l1.95 3.8 4.3.3-3.4 2.8 1.1 4.1-3.95-2.4-3.95 2.4 1.1-4.1-3.4-2.8 4.3-.3zM23.15 0l1.95 3.8 4.3.3-3.4 2.8 1.1 4.1-3.95-2.4-3.95 2.4 1.1-4.1-3.4-2.8 4.3-.3zM40.05 0l1.95 3.8 4.3.3-3.4 2.8 1.1 4.1-3.95-2.4-3.95 2.4 1.1-4.1-3.4-2.8 4.3-.3z"/><path fill="#dcdcdc" d="M56.95 0l1.95 3.8 4.3.3-3.4 2.8 1.1 4.1-3.95-2.4-3.95 2.4 1.1-4.1-3.4-2.8 4.3-.3zM73.85 0l1.95 3.8 4.3.3-3.4 2.8 1.1 4.1-3.95-2.4-3.95 2.4 1.1-4.1-3.4-2.8 4.3-.3z"/></svg><svg style="left:713.1px" width="82" height="12" viewBox="0 0 82 12"><path fill="#4f82fc" d="M6.25 0l1.95 3.8 4.3.3-3.4 2.8 1.1 4.1-3.95-2.4-3.95 2.4 1.1-4.1-3.4-2.8 4.3-.3zM23.15 0l1.95 3.8 4.3.3-3.4 2.8 1.1 4.1-3.95-2.4-3.95 2.4 1.1-4.1-3.4-2.8 4.3-.3zM40.05 0l1.95 3.8 4.3.3-3.4 2.8 1.1 4.1-3.95-2.4-3.95 2.4 1.1-4.1-3.4-2.8 4.3-.3zM56.95 0l1.95 3.8 4.3.3-3.4 2.8 1.1 4.1-3.95-2.4-3.95 2.4 1.1-4.1-3.4-2.8 4.3-.3z"/><path fill="#dcdcdc" d="M73.85 0l1.95 3.8 4.3.3-3.4 2.8 1.1 4.1-3.95-2.4-3.95 2.4 1.1-4.1-3.4-2.8 4.3-.3z"/></svg><svg style="left:816.4px" width="82" height="12" viewBox="0 0 82 12"><path fill="#d53041" d="M6.25 0l1.95 3.8 4.3.3-3.4 2.8 1.1 4.1-3.95-2.4-3.95 2.4 1.1-4.1-3.4-2.8 4.3-.3zM23.15 0l1.95 3.8 4.3.3-3.4 2.8 1.1 4.1-3.95-2.4-3.95 2.4 1.1-4.1-3.4-2.8 4.3-.3zM40.05 0l1.95 3.8 4.3.3-3.4 2.8 1.1 4.1-3.95-2.4-3.95 2.4 1.1-4.1-3.4-2.8 4.3-.3z"/><path fill="#dcdcdc" d="M56.95 0l1.95 3.8 4.3.3-3.4 2.8 1.1 4.1-3.95-2.4-3.95 2.4 1.1-4.1-3.4-2.8 4.3-.3zM73.85 0l1.95 3.8 4.3.3-3.4 2.8 1.1 4.1-3.95-2.4-3.95 2.4 1.1-4.1-3.4-2.8 4.3-.3z"/></svg><svg style="left:968.4px" width="82" height="12" viewBox="0 0 82 12"><path fill="#59a765" d="M6.25 0l1.95 3.8 4.3.3-3.4 2.8 1.1 4.1-3.95-2.4-3.95 2.4 1.1-4.1-3.4-2.8 4.3-.3zM23.15 0l1.95 3.8 4.3.3-3.4 2.8 1.1 4.1-3.95-2.4-3.95 2.4 1.1-4.1-3.4-2.8 4.3-.3zM40.05 0l1.95 3.8 4.3.3-3.4 2.8 1.1 4.1-3.95-2.4-3.95 2.4 1.1-4.1-3.4-2.8 4.3-.3zM56.95 0l1.95 3.8 4.3.3-3.4 2.8 1.1 4.1-3.95-2.4-3.95 2.4 1.1-4.1-3.4-2.8 4.3-.3z"/><path fill="#dcdcdc" d="M73.85 0l1.95 3.8 4.3.3-3.4 2.8 1.1 4.1-3.95-2.4-3.95 2.4 1.1-4.1-3.4-2.8 4.3-.3z"/></svg><svg style="left:1072.5px" width="82" height="12" viewBox="0 0 82 12"><path fill="#fbbf12" d="M6.25 0l1.95 3.8 4.3.3-3.4 2.8 1.1 4.1-3.95-2.4-3.95 2.4 1.1-4.1-3.4-2.8 4.3-.3zM23.15 0l1.95 3.8 4.3.3-3.4 2.8 1.1 4.1-3.95-2.4-3.95 2.4 1.1-4.1-3.4-2.8 4.3-.3zM40.05 0l1.95 3.8 4.3.3-3.4 2.8 1.1 4.1-3.95-2.4-3.95 2.4 1.1-4.1-3.4-2.8 4.3-.3zM56.95 0l1.95 3.8 4.3.3-3.4 2.8 1.1 4.1-3.95-2.4-3.95 2.4 1.1-4.1-3.4-2.8 4.3-.3z"/><path fill="#dcdcdc" d="M73.85 0l1.95 3.8 4.3.3-3.4 2.8 1.1 4.1-3.95-2.4-3.95 2.4 1.1-4.1-3.4-2.8 4.3-.3z"/></svg><svg style="left:1211.5px" width="82" height="12" viewBox="0 0 82 12"><path fill="#53b7cf" d="M6.25 0l1.95 3.8 4.3.3-3.4 2.8 1.1 4.1-3.95-2.4-3.95 2.4 1.1-4.1-3.4-2.8 4.3-.3zM23.15 0l1.95 3.8 4.3.3-3.4 2.8 1.1 4.1-3.95-2.4-3.95 2.4 1.1-4.1-3.4-2.8 4.3-.3zM40.05 0l1.95 3.8 4.3.3-3.4 2.8 1.1 4.1-3.95-2.4-3.95 2.4 1.1-4.1-3.4-2.8 4.3-.3zM56.95 0l1.95 3.8 4.3.3-3.4 2.8 1.1 4.1-3.95-2.4-3.95 2.4 1.1-4.1-3.4-2.8 4.3-.3z"/><path fill="#dcdcdc" d="M73.85 0l1.95 3.8 4.3.3-3.4 2.8 1.1 4.1-3.95-2.4-3.95 2.4 1.1-4.1-3.4-2.8 4.3-.3z"/></svg><svg style="left:1316.2px" width="82" height="12" viewBox="0 0 82 12"><path fill="#ea7c30" d="M6.25 0l1.95 3.8 4.3.3-3.4 2.8 1.1 4.1-3.95-2.4-3.95 2.4 1.1-4.1-3.4-2.8 4.3-.3zM23.15 0l1.95 3.8 4.3.3-3.4 2.8 1.1 4.1-3.95-2.4-3.95 2.4 1.1-4.1-3.4-2.8 4.3-.3zM40.05 0l1.95 3.8 4.3.3-3.4 2.8 1.1 4.1-3.95-2.4-3.95 2.4 1.1-4.1-3.4-2.8 4.3-.3z"/><path fill="#dcdcdc" d="M56.95 0l1.95 3.8 4.3.3-3.4 2.8 1.1 4.1-3.95-2.4-3.95 2.4 1.1-4.1-3.4-2.8 4.3-.3zM73.85 0l1.95 3.8 4.3.3-3.4 2.8 1.1 4.1-3.95-2.4-3.95 2.4 1.1-4.1-3.4-2.8 4.3-.3z"/></svg><span class="sc" style="right:13.8px">71%</span></div>
<div class="r" style="top:1086.7px"><span class="n">26</span><span class="c1">SafeWork Pty Ltd</span><span class="c2">Fiona White</span><span class="c3">Workplace Safety Services</span><svg style="left:603.1px" width="82" height="12" viewBox="0 0 82 12"><path fill="#cd9fd4" d="M6.25 0l1.95 3.8 4.3.3-3.4 2.8 1.1 4.1-3.95-2.4-3.95 2.4 1.1-4.1-3.4-2.8 4.3-.3zM23.15 0l1.95 3.8 4.3.3-3.4 2.8 1.1 4.1-3.95-2.4-3.95 2.4 1.1-4.1-3.4-2.8 4.3-.3zM40.05 0l1.95 3.8 4.3.3-3.4 2.8 1.1 4.1-3.95-2.4-3.95 2.4 1.1-4.1-3.4-2.8 4.3-.3zM56.95 0l1.95 3.8 4.3.3-3.4 2.8 1.1 4.1-3.95-2.4-3.95 2.4 1.1-4.1-3.4-2.8 4.3-.3zM73.85 0l1.95 3.8 4.3.3-3.4 2.8 1.1 4.1-3.95-2.4-3.95 2.4 1.1-4.1-3.4-2.8 4.3-.3z"/></svg><svg style="left:713.1px" width="82" height="12" viewBox="0 0 82 12"><path fill="#4f82fc" d="M6.25 0l1.95 3.8 4.3.3-3.4 2.8 1.1 4.1-3.95-2.4-3.95 2.4 1.1-4.1-3.4-2.8 4.3-.3zM23.15 0l1.95 3.8 4.3.3-3.4 2.8 1.1 4.1-3.95-2.4-3.95 2.4 1.1-4.1-3.4-2.8 4.3-.3zM40.05 0l1.95 3.8 4.3.3-3.4 2.8 1.1 4.1-3.95-2.4-3.95 2.4 1.1-4.1-3.4-2.8 4.3-.3zM56.95 0l1.95 3.8 4.3.3-3.4 2.8 1.1 4.1-3.95-2.4-3.95 2.4 1.1-4.1-3.4-2.8 4.3-.3zM73.85 0l1.95 3.8 4.3.3-3.4 2.8 1.1 4.1-3.95-2.4-3.95 2.4 1.1-4.1-3.4-2.8 4.3-.3z"/></svg><svg style="left:816.4px" width="82" height="12" viewBox="0 0 82 12"><path fill="#d53041" d="M6.25 0l1.95 3.8 4.3.3-3.4 2.8 1.1 4.1-3.95-2.4-3.95 2.4 1.1-4.1-3.4-2.8 4.3-.3zM23.15 0l1.95 3.8 4.3.3-3.4 2.8 1.1 4.1-3.95-2.4-3.95 2.4 1.1-4.1-3.4-2.8 4.3-.3zM40.05 0l1.95 3.8 4.3.3-3.4 2.8 1.1 4.1-3.95-2.4-3.95 2.4 1.1-4.1-3.4-2.8 4.3-.3zM56.95 0l1.95 3.8 4.3.3-3.4 2.8 1.1 4.1-3.95-2.4-3.95 2.4 1.1-4.1-3.4-2.8 4.3-.3zM73.85 0l1.95 3.8 4.3.3-3.4 2.8 1.1 4.1-3.95-2.4-3.95 2.4 1.1-4.1-3.4-2.8 4.3-.3z"/></svg><svg style="left:968.4px" width="82" height="12" viewBox="0 0 82 12"><path fill="#59a765" d="M6.25 0l1.95 3.8 4.3.3-3.4 2.8 1.1 4.1-3.95-2.4-3.95 2.4 1.1-4.1-3.4-2.8 4.3-.3zM23.15 0l1.95 3.8 4.3.3-3.4 2.8 1.1 4.1-3.95-2.4-3.95 2.4 1.1-4.1-3.4-2.8 4.3-.3zM40.05 0l1.95 3.8 4.3.3-3.4 2.8 1.1 4.1-3.95-2.4-3.95 2.4 1.1-4.1-3.4-2.8 4.3-.3z"/><path fill="#dcdcdc" d="M56.95 0l1.95 3.8 4.3.3-3.4 2.8 1.1 4.1-3.95-2.4-3.95 2.4 1.1-4.1-3.4-2.8 4.3-.3zM73.85 0l1.95 3.8 4.3.3-3.4 2.8 1.1 4.1-3.95-2.4-3.95 2.4 1.1-4.1-3.4-2.8 4.3-.3z"/></svg><svg style="left:1072.5px" width="82" height="12" viewBox="0 0 82 12"><path fill="#fbbf12" d="M6.25 0l1.95 3.8 4.3.3-3.4 2.8 1.1 4.1-3.95-2.4-3.95 2.4 1.1-4.1-3.4-2.8 4.3-.3zM23.15 0l1.95 3.8 4.3.3-3.4 2.8 1.1 4.1-3.95-2.4-3.95 2.4 1.1-4.1-3.4-2.8 4.3-.3zM40.05 0l1.95 3.8 4.3.3-3.4 2.8 1.1 4.1-3.95-2.4-3.95 2.4 1.1-4.1-3.4-2.8 4.3-.3zM56.95 0l1.95 3.8 4.3.3-3.4 2.8 1.1 4.1-3.95-2.4-3.95 2.4 1.1-4.1-3.4-2.8 4.3-.3zM73.85 0l1.95 3.8 4.3.3-3.4 2.8 1.1 4.1-3.95-2.4-3.95 2.4 1.1-4.1-3.4-2.8 4.3-.3z"/></svg><svg style="left:1211.5px" width="82" height="12" viewBox="0 0 82 12"><path fill="#53b7cf" d="M6.25 0l1.95 3.8 4.3.3-3.4 2.8 1.1 4.1-3.95-2.4-3.95 2.4 1.1-4.1-3.4-2.8 4.3-.3zM23.15 0l1.95 3.8 4.3.3-3.4 2.8 1.1 4.1-3.95-2.4-3.95 2.4 1.1-4.1-3.4-2.8 4.3-.3zM40.05 0l1.95 3.8 4.3.3-3.4 2.8 1.1 4.1-3.95-2.4-3.95 2.4 1.1-4.1-3.4-2.8 4.3-.3zM56.95 0l1.95 3.8 4.3.3-3.4 2.8 1.1 4.1-3.95-2.4-3.95 2.4 1.1-4.1-3.4-2.8 4.3-.3z"/><path fill="#dcdcdc" d="M73.85 0l1.95 3.8 4.3.3-3.4 2.8 1.1 4.1-3.95-2.4-3.95 2.4 1.1-4.1-3.4-2.8 4.3-.3z"/></svg><svg style="left:1316.2px" width="82" height="12" viewBox="0 0 82 12"><path fill="#ea7c30" d="M6.25 0l1.95 3.8 4.3.3-3.4 2.8 1.1 4.1-3.95-2.4-3.95 2.4 1.1-4.1-3.4-2.8 4.3-.3zM23.15 0l1.95 3.8 4.3.3-3.4 2.8 1.1 4.1-3.95-2.4-3.95 2.4 1.1-4.1-3.4-2.8 4.3-.3zM40.05 0l1.95 3.8 4.3.3-3.4 2.8 1.1 4.1-3.95-2.4-3.95 2.4 1.1-4.1-3.4-2.8 4.3-.3zM56.95 0l1.95 3.8 4.3.3-3.4 2.8 1.1 4.1-3.95-2.4-3.95 2.4 1.1-4.1-3.4-2.8 4.3-.3zM73.85 0l1.95 3.8 4.3.3-3.4 2.8 1.1 4.1-3.95-2.4-3.95 2.4 1.1-4.1-3.4-2.8 4.3-.3z"/></svg><span class="sc" style="right:13.8px">91%</span></div>
<div class="r" style="top:1122.9px"><span class="n">27</span><span class="c1">TechSavvy Solutions</span><span class="c2">Patrick Clark</span><span class="c3">IT Support and Maintenance</span><svg style="left:603.1px" width="82" height="12" viewBox="0 0 82 12"><path fill="#cd9fd4" d="M6.25 0l1.95 3.8 4.3.3-3.4 2.8 1.1 4.1-3.95-2.4-3.95 2.4 1.1-4.1-3.4-2.8 4.3-.3zM23.15 0l1.95 3.8 4.3.3-3.4 2.8 1.1 4.1-3.95-2.4-3.95 2.4 1.1-4.1-3.4-2.8 4.3-.3zM40.05 0l1.95 3.8 4.3.3-3.4 2.8 1.1 4.1-3.95-2.4-3.95 2.4 1.1-4.1-3.4-2.8 4.3-.3zM56.95 0l1.95 3.8 4.3.3-3.4 2.8 1.1 4.1-3.95-2.4-3.95 2.4 1.1-4.1-3.4-2.8 4.3-.3z"/><path fill="#dcdcdc" d="M73.85 0l1.95 3.8 4.3.3-3.4 2.8 1.1 4.1-3.95-2.4-3.95 2.4 1.1-4.1-3.4-2.8 4.3-.3z"/></svg><svg style="left:713.1px" width="82" height="12" viewBox="0 0 82 12"><path fill="#4f82fc" d="M6.25 0l1.95 3.8 4.3.3-3.4 2.8 1.1 4.1-3.95-2.4-3.95 2.4 1.1-4.1-3.4-2.8 4.3-.3zM23.15 0l1.95 3.8 4.3.3-3.4 2.8 1.1 4.1-3.95-2.4-3.95 2.4 1.1-4.1-3.4-2.8 4.3-.3zM40.05 0l1.95 3.8 4.3.3-3.4 2.8 1.1 4.1-3.95-2.4-3.95 2.4 1.1-4.1-3.4-2.8 4.3-.3zM56.95 0l1.95 3.8 4.3.3-3.4 2.8 1.1 4.1-3.95-2.4-3.95 2.4 1.1-4.1-3.4-2.8 4.3-.3z"/><path fill="#dcdcdc" d="M73.85 0l1.95 3.8 4.3.3-3.4 2.8 1.1 4.1-3.95-2.4-3.95 2.4 1.1-4.1-3.4-2.8 4.3-.3z"/></svg><svg style="left:816.4px" width="82" height="12" viewBox="0 0 82 12"><path fill="#d53041" d="M6.25 0l1.95 3.8 4.3.3-3.4 2.8 1.1 4.1-3.95-2.4-3.95 2.4 1.1-4.1-3.4-2.8 4.3-.3zM23.15 0l1.95 3.8 4.3.3-3.4 2.8 1.1 4.1-3.95-2.4-3.95 2.4 1.1-4.1-3.4-2.8 4.3-.3zM40.05 0l1.95 3.8 4.3.3-3.4 2.8 1.1 4.1-3.95-2.4-3.95 2.4 1.1-4.1-3.4-2.8 4.3-.3zM56.95 0l1.95 3.8 4.3.3-3.4 2.8 1.1 4.1-3.95-2.4-3.95 2.4 1.1-4.1-3.4-2.8 4.3-.3z"/><path fill="#dcdcdc" d="M73.85 0l1.95 3.8 4.3.3-3.4 2.8 1.1 4.1-3.95-2.4-3.95 2.4 1.1-4.1-3.4-2.8 4.3-.3z"/></svg><svg style="left:968.4px" width="82" height="12" viewBox="0 0 82 12"><path fill="#59a765" d="M6.25 0l1.95 3.8 4.3.3-3.4 2.8 1.1 4.1-3.95-2.4-3.95 2.4 1.1-4.1-3.4-2.8 4.3-.3zM23.15 0l1.95 3.8 4.3.3-3.4 2.8 1.1 4.1-3.95-2.4-3.95 2.4 1.1-4.1-3.4-2.8 4.3-.3zM40.05 0l1.95 3.8 4.3.3-3.4 2.8 1.1 4.1-3.95-2.4-3.95 2.4 1.1-4.1-3.4-2.8 4.3-.3zM56.95 0l1.95 3.8 4.3.3-3.4 2.8 1.1 4.1-3.95-2.4-3.95 2.4 1.1-4.1-3.4-2.8 4.3-.3z"/><path fill="#dcdcdc" d="M73.85 0l1.95 3.8 4.3.3-3.4 2.8 1.1 4.1-3.95-2.4-3.95 2.4 1.1-4.1-3.4-2.8 4.3-.3z"/></svg><svg style="left:1072.5px" width="82" height="12" viewBox="0 0 82 12"><path fill="#fbbf12" d="M6.25 0l1.95 3.8 4.3.3-3.4 2.8 1.1 4.1-3.95-2.4-3.95 2.4 1.1-4.1-3.4-2.8 4.3-.3zM23.15 0l1.95 3.8 4.3.3-3.4 2.8 1.1 4.1-3.95-2.4-3.95 2.4 1.1-4.1-3.4-2.8 4.3-.3zM40.05 0l1.95 3.8 4.3.3-3.4 2.8 1.1 4.1-3.95-2.4-3.95 2.4 1.1-4.1-3.4-2.8 4.3-.3zM56.95 0l1.95 3.8 4.3.3-3.4 2.8 1.1 4.1-3.95-2.4-3.95 2.4 1.1-4.1-3.4-2.8 4.3-.3z"/><path fill="#dcdcdc" d="M73.85 0l1.95 3.8 4.3.3-3.4 2.8 1.1 4.1-3.95-2.4-3.95 2.4 1.1-4.1-3.4-2.8 4.3-.3z"/></svg><svg style="left:1211.5px" width="82" height="12" viewBox="0 0 82 12"><path fill="#53b7cf" d="M6.25 0l1.95 3.8 4.3.3-3.4 2.8 1.1 4.1-3.95-2.4-3.95 2.4 1.1-4.1-3.4-2.8 4.3-.3zM23.15 0l1.95 3.8 4.3.3-3.4 2.8 1.1 4.1-3.95-2.4-3.95 2.4 1.1-4.1-3.4-2.8 4.3-.3zM40.05 0l1.95 3.8 4.3.3-3.4 2.8 1.1 4.1-3.95-2.4-3.95 2.4 1.1-4.1-3.4-2.8 4.3-.3zM56.95 0l1.95 3.8 4.3.3-3.4 2.8 1.1 4.1-3.95-2.4-3.95 2.4 1.1-4.1-3.4-2.8 4.3-.3z"/><path fill="#dcdcdc" d="M73.85 0l1.95 3.8 4.3.3-3.4 2.8 1.1 4.1-3.95-2.4-3.95 2.4 1.1-4.1-3.4-2.8 4.3-.3z"/></svg><svg style="left:1316.2px" width="82" height="12" viewBox="0 0 82 12"><path fill="#ea7c30" d="M6.25 0l1.95 3.8 4.3.3-3.4 2.8 1.1 4.1-3.95-2.4-3.95 2.4 1.1-4.1-3.4-2.8 4.3-.3zM23.15 0l1.95 3.8 4.3.3-3.4 2.8 1.1 4.1-3.95-2.4-3.95 2.4 1.1-4.1-3.4-2.8 4.3-.3zM40.05 0l1.95 3.8 4.3.3-3.4 2.8 1.1 4.1-3.95-2.4-3.95 2.4 1.1-4.1-3.4-2.8 4.3-.3zM56.95 0l1.95 3.8 4.3.3-3.4 2.8 1.1 4.1-3.95-2.4-3.95 2.4 1.1-4.1-3.4-2.8 4.3-.3z"/><path fill="#dcdcdc" d="M73.85 0l1.95 3.8 4.3.3-3.4 2.8 1.1 4.1-3.95-2.4-3.95 2.4 1.1-4.1-3.4-2.8 4.3-.3z"/></svg><span class="sc" style="right:13.8px">80%</span></div>
<div class="r" style="top:1159.1px"><span class="n">28</span><span class="c1">BuildMasters Pty Ltd</span><span class="c2">Chloe Scott</span><span class="c3">Residential Construction</span><svg style="left:603.1px" width="82" height="12" viewBox="0 0 82 12"><path fill="#cd9fd4" d="M6.25 0l1.95 3.8 4.3.3-3.4 2.8 1.1 4.1-3.95-2.4-3.95 2.4 1.1-4.1-3.4-2.8 4.3-.3zM23.15 0l1.95 3.8 4.3.3-3.4 2.8 1.1 4.1-3.95-2.4-3.95 2.4 1.1-4.1-3.4-2.8 4.3-.3zM40.05 0l1.95 3.8 4.3.3-3.4 2.8 1.1 4.1-3.95-2.4-3.95 2.4 1.1-4.1-3.4-2.8 4.3-.3zM56.95 0l1.95 3.8 4.3.3-3.4 2.8 1.1 4.1-3.95-2.4-3.95 2.4 1.1-4.1-3.4-2.8 4.3-.3zM73.85 0l1.95 3.8 4.3.3-3.4 2.8 1.1 4.1-3.95-2.4-3.95 2.4 1.1-4.1-3.4-2.8 4.3-.3z"/></svg><svg style="left:713.1px" width="82" height="12" viewBox="0 0 82 12"><path fill="#4f82fc" d="M6.25 0l1.95 3.8 4.3.3-3.4 2.8 1.1 4.1-3.95-2.4-3.95 2.4 1.1-4.1-3.4-2.8 4.3-.3zM23.15 0l1.95 3.8 4.3.3-3.4 2.8 1.1 4.1-3.95-2.4-3.95 2.4 1.1-4.1-3.4-2.8 4.3-.3zM40.05 0l1.95 3.8 4.3.3-3.4 2.8 1.1 4.1-3.95-2.4-3.95 2.4 1.1-4.1-3.4-2.8 4.3-.3zM56.95 0l1.95 3.8 4.3.3-3.4 2.8 1.1 4.1-3.95-2.4-3.95 2.4 1.1-4.1-3.4-2.8 4.3-.3z"/><path fill="#dcdcdc" d="M73.85 0l1.95 3.8 4.3.3-3.4 2.8 1.1 4.1-3.95-2.4-3.95 2.4 1.1-4.1-3.4-2.8 4.3-.3z"/></svg><svg style="left:816.4px" width="82" height="12" viewBox="0 0 82 12"><path fill="#d53041" d="M6.25 0l1.95 3.8 4.3.3-3.4 2.8 1.1 4.1-3.95-2.4-3.95 2.4 1.1-4.1-3.4-2.8 4.3-.3zM23.15 0l1.95 3.8 4.3.3-3.4 2.8 1.1 4.1-3.95-2.4-3.95 2.4 1.1-4.1-3.4-2.8 4.3-.3zM40.05 0l1.95 3.8 4.3.3-3.4 2.8 1.1 4.1-3.95-2.4-3.95 2.4 1.1-4.1-3.4-2.8 4.3-.3zM56.95 0l1.95 3.8 4.3.3-3.4 2.8 1.1 4.1-3.95-2.4-3.95 2.4 1.1-4.1-3.4-2.8 4.3-.3zM73.85 0l1.95 3.8 4.3.3-3.4 2.8 1.1 4.1-3.95-2.4-3.95 2.4 1.1-4.1-3.4-2.8 4.3-.3z"/></svg><svg style="left:968.4px" width="82" height="12" viewBox="0 0 82 12"><path fill="#59a765" d="M6.25 0l1.95 3.8 4.3.3-3.4 2.8 1.1 4.1-3.95-2.4-3.95 2.4 1.1-4.1-3.4-2.8 4.3-.3zM23.15 0l1.95 3.8 4.3.3-3.4 2.8 1.1 4.1-3.95-2.4-3.95 2.4 1.1-4.1-3.4-2.8 4.3-.3zM40.05 0l1.95 3.8 4.3.3-3.4 2.8 1.1 4.1-3.95-2.4-3.95 2.4 1.1-4.1-3.4-2.8 4.3-.3zM56.95 0l1.95 3.8 4.3.3-3.4 2.8 1.1 4.1-3.95-2.4-3.95 2.4 1.1-4.1-3.4-2.8 4.3-.3z"/><path fill="#dcdcdc" d="M73.85 0l1.95 3.8 4.3.3-3.4 2.8 1.1 4.1-3.95-2.4-3.95 2.4 1.1-4.1-3.4-2.8 4.3-.3z"/></svg><svg style="left:1072.5px" width="82" height="12" viewBox="0 0 82 12"><path fill="#fbbf12" d="M6.25 0l1.95 3.8 4.3.3-3.4 2.8 1.1 4.1-3.95-2.4-3.95 2.4 1.1-4.1-3.4-2.8 4.3-.3zM23.15 0l1.95 3.8 4.3.3-3.4 2.8 1.1 4.1-3.95-2.4-3.95 2.4 1.1-4.1-3.4-2.8 4.3-.3zM40.05 0l1.95 3.8 4.3.3-3.4 2.8 1.1 4.1-3.95-2.4-3.95 2.4 1.1-4.1-3.4-2.8 4.3-.3zM56.95 0l1.95 3.8 4.3.3-3.4 2.8 1.1 4.1-3.95-2.4-3.95 2.4 1.1-4.1-3.4-2.8 4.3-.3zM73.85 0l1.95 3.8 4.3.3-3.4 2.8 1.1 4.1-3.95-2.4-3.95 2.4 1.1-4.1-3.4-2.8 4.3-.3z"/></svg><svg style="left:1211.5px" width="82" height="12" viewBox="0 0 82 12"><path fill="#53b7cf" d="M6.25 0l1.95 3.8 4.3.3-3.4 2.8 1.1 4.1-3.95-2.4-3.95 2.4 1.1-4.1-3.4-2.8 4.3-.3zM23.15 0l1.95 3.8 4.3.3-3.4 2.8 1.1 4.1-3.95-2.4-3.95 2.4 1.1-4.1-3.4-2.8 4.3-.3zM40.05 0l1.95 3.8 4.3.3-3.4 2.8 1.1 4.1-3.95-2.4-3.95 2.4 1.1-4.1-3.4-2.8 4.3-.3z"/><path fill="#dcdcdc" d="M56.95 0l1.95 3.8 4.3.3-3.4 2.8 1.1 4.1-3.95-2.4-3.95 2.4 1.1-4.1-3.4-2.8 4.3-.3zM73.85 0l1.95 3.8 4.3.3-3.4 2.8 1.1 4.1-3.95-2.4-3.95 2.4 1.1-4.1-3.4-2.8 4.3-.3z"/></svg><svg style="left:1316.2px" width="82" height="12" viewBox="0 0 82 12"><path fill="#ea7c30" d="M6.25 0l1.95 3.8 4.3.3-3.4 2.8 1.1 4.1-3.95-2.4-3.95 2.4 1.1-4.1-3.4-2.8 4.3-.3zM23.15 0l1.95 3.8 4.3.3-3.4 2.8 1.1 4.1-3.95-2.4-3.95 2.4 1.1-4.1-3.4-2.8 4.3-.3zM40.05 0l1.95 3.8 4.3.3-3.4 2.8 1.1 4.1-3.95-2.4-3.95 2.4 1.1-4.1-3.4-2.8 4.3-.3zM56.95 0l1.95 3.8 4.3.3-3.4 2.8 1.1 4.1-3.95-2.4-3.95 2.4 1.1-4.1-3.4-2.8 4.3-.3zM73.85 0l1.95 3.8 4.3.3-3.4 2.8 1.1 4.1-3.95-2.4-3.95 2.4 1.1-4.1-3.4-2.8 4.3-.3z"/></svg><span class="sc" style="right:13.8px">89%</span></div>
<div class="r" style="top:1195.3px"><span class="n">29</span><span class="c1">CleanAir Solutions</span><span class="c2">Olivia Taylor</span><span class="c3">Air Filtration Systems</span><svg style="left:603.1px" width="82" height="12" viewBox="0 0 82 12"><path fill="#cd9fd4" d="M6.25 0l1.95 3.8 4.3.3-3.4 2.8 1.1 4.1-3.95-2.4-3.95 2.4 1.1-4.1-3.4-2.8 4.3-.3zM23.15 0l1.95 3.8 4.3.3-3.4 2.8 1.1 4.1-3.95-2.4-3.95 2.4 1.1-4.1-3.4-2.8 4.3-.3zM40.05 0l1.95 3.8 4.3.3-3.4 2.8 1.1 4.1-3.95-2.4-3.95 2.4 1.1-4.1-3.4-2.8 4.3-.3zM56.95 0l1.95 3.8 4.3.3-3.4 2.8 1.1 4.1-3.95-2.4-3.95 2.4 1.1-4.1-3.4-2.8 4.3-.3z"/><path fill="#dcdcdc" d="M73.85 0l1.95 3.8 4.3.3-3.4 2.8 1.1 4.1-3.95-2.4-3.95 2.4 1.1-4.1-3.4-2.8 4.3-.3z"/></svg><svg style="left:713.1px" width="82" height="12" viewBox="0 0 82 12"><path fill="#4f82fc" d="M6.25 0l1.95 3.8 4.3.3-3.4 2.8 1.1 4.1-3.95-2.4-3.95 2.4 1.1-4.1-3.4-2.8 4.3-.3zM23.15 0l1.95 3.8 4.3.3-3.4 2.8 1.1 4.1-3.95-2.4-3.95 2.4 1.1-4.1-3.4-2.8 4.3-.3zM40.05 0l1.95 3.8 4.3.3-3.4 2.8 1.1 4.1-3.95-2.4-3.95 2.4 1.1-4.1-3.4-2.8 4.3-.3zM56.95 0l1.95 3.8 4.3.3-3.4 2.8 1.1 4.1-3.95-2.4-3.95 2.4 1.1-4.1-3.4-2.8 4.3-.3z"/><path fill="#dcdcdc" d="M73.85 0l1.95 3.8 4.3.3-3.4 2.8 1.1 4.1-3.95-2.4-3.95 2.4 1.1-4.1-3.4-2.8 4.3-.3z"/></svg><svg style="left:816.4px" width="82" height="12" viewBox="0 0 82 12"><path fill="#d53041" d="M6.25 0l1.95 3.8 4.3.3-3.4 2.8 1.1 4.1-3.95-2.4-3.95 2.4 1.1-4.1-3.4-2.8 4.3-.3zM23.15 0l1.95 3.8 4.3.3-3.4 2.8 1.1 4.1-3.95-2.4-3.95 2.4 1.1-4.1-3.4-2.8 4.3-.3zM40.05 0l1.95 3.8 4.3.3-3.4 2.8 1.1 4.1-3.95-2.4-3.95 2.4 1.1-4.1-3.4-2.8 4.3-.3zM56.95 0l1.95 3.8 4.3.3-3.4 2.8 1.1 4.1-3.95-2.4-3.95 2.4 1.1-4.1-3.4-2.8 4.3-.3z"/><path fill="#dcdcdc" d="M73.85 0l1.95 3.8 4.3.3-3.4 2.8 1.1 4.1-3.95-2.4-3.95 2.4 1.1-4.1-3.4-2.8 4.3-.3z"/></svg><svg style="left:968.4px" width="82" height="12" viewBox="0 0 82 12"><path fill="#59a765" d="M6.25 0l1.95 3.8 4.3.3-3.4 2.8 1.1 4.1-3.95-2.4-3.95 2.4 1.1-4.1-3.4-2.8 4.3-.3zM23.15 0l1.95 3.8 4.3.3-3.4 2.8 1.1 4.1-3.95-2.4-3.95 2.4 1.1-4.1-3.4-2.8 4.3-.3zM40.05 0l1.95 3.8 4.3.3-3.4 2.8 1.1 4.1-3.95-2.4-3.95 2.4 1.1-4.1-3.4-2.8 4.3-.3zM56.95 0l1.95 3.8 4.3.3-3.4 2.8 1.1 4.1-3.95-2.4-3.95 2.4 1.1-4.1-3.4-2.8 4.3-.3zM73.85 0l1.95 3.8 4.3.3-3.4 2.8 1.1 4.1-3.95-2.4-3.95 2.4 1.1-4.1-3.4-2.8 4.3-.3z"/></svg><svg style="left:1072.5px" width="82" height="12" viewBox="0 0 82 12"><path fill="#fbbf12" d="M6.25 0l1.95 3.8 4.3.3-3.4 2.8 1.1 4.1-3.95-2.4-3.95 2.4 1.1-4.1-3.4-2.8 4.3-.3zM23.15 0l1.95 3.8 4.3.3-3.4 2.8 1.1 4.1-3.95-2.4-3.95 2.4 1.1-4.1-3.4-2.8 4.3-.3zM40.05 0l1.95 3.8 4.3.3-3.4 2.8 1.1 4.1-3.95-2.4-3.95 2.4 1.1-4.1-3.4-2.8 4.3-.3zM56.95 0l1.95 3.8 4.3.3-3.4 2.8 1.1 4.1-3.95-2.4-3.95 2.4 1.1-4.1-3.4-2.8 4.3-.3z"/><path fill="#dcdcdc" d="M73.85 0l1.95 3.8 4.3.3-3.4 2.8 1.1 4.1-3.95-2.4-3.95 2.4 1.1-4.1-3.4-2.8 4.3-.3z"/></svg><svg style="left:1211.5px" width="82" height="12" viewBox="0 0 82 12"><path fill="#53b7cf" d="M6.25 0l1.95 3.8 4.3.3-3.4 2.8 1.1 4.1-3.95-2.4-3.95 2.4 1.1-4.1-3.4-2.8 4.3-.3zM23.15 0l1.95 3.8 4.3.3-3.4 2.8 1.1 4.1-3.95-2.4-3.95 2.4 1.1-4.1-3.4-2.8 4.3-.3zM40.05 0l1.95 3.8 4.3.3-3.4 2.8 1.1 4.1-3.95-2.4-3.95 2.4 1.1-4.1-3.4-2.8 4.3-.3zM56.95 0l1.95 3.8 4.3.3-3.4 2.8 1.1 4.1-3.95-2.4-3.95 2.4 1.1-4.1-3.4-2.8 4.3-.3z"/><path fill="#dcdcdc" d="M73.85 0l1.95 3.8 4.3.3-3.4 2.8 1.1 4.1-3.95-2.4-3.95 2.4 1.1-4.1-3.4-2.8 4.3-.3z"/></svg><svg style="left:1316.2px" width="82" height="12" viewBox="0 0 82 12"><path fill="#ea7c30" d="M6.25 0l1.95 3.8 4.3.3-3.4 2.8 1.1 4.1-3.95-2.4-3.95 2.4 1.1-4.1-3.4-2.8 4.3-.3zM23.15 0l1.95 3.8 4.3.3-3.4 2.8 1.1 4.1-3.95-2.4-3.95 2.4 1.1-4.1-3.4-2.8 4.3-.3zM40.05 0l1.95 3.8 4.3.3-3.4 2.8 1.1 4.1-3.95-2.4-3.95 2.4 1.1-4.1-3.4-2.8 4.3-.3zM56.95 0l1.95 3.8 4.3.3-3.4 2.8 1.1 4.1-3.95-2.4-3.95 2.4 1.1-4.1-3.4-2.8 4.3-.3z"/><path fill="#dcdcdc" d="M73.85 0l1.95 3.8 4.3.3-3.4 2.8 1.1 4.1-3.95-2.4-3.95 2.4 1.1-4.1-3.4-2.8 4.3-.3z"/></svg><span class="sc" style="right:13.8px">83%</span></div>
<div id="sbt"></div><div id="sb"></div>
</body></html>
